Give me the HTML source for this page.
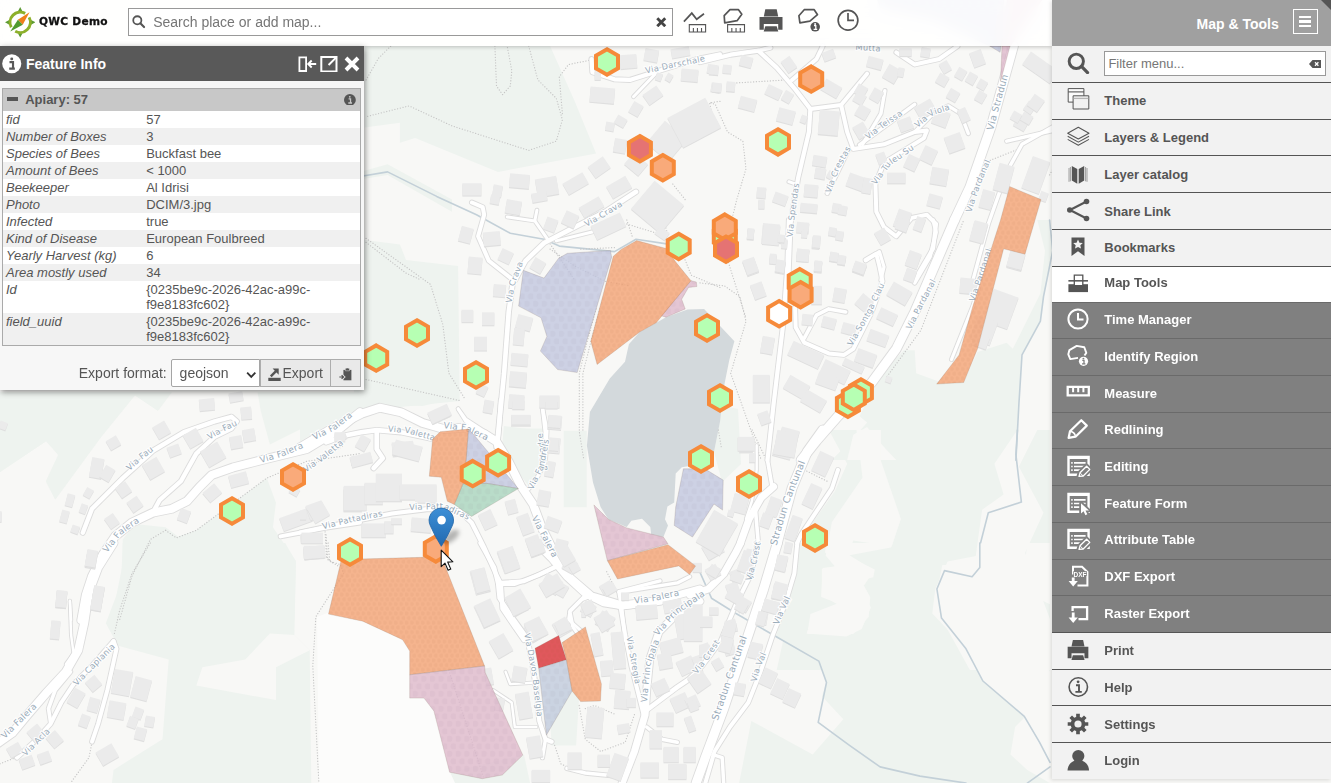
<!DOCTYPE html>
<html lang="en">
<head>
<meta charset="utf-8">
<title>QWC Demo</title>
<style>
*{box-sizing:border-box;margin:0;padding:0}
html,body{width:1331px;height:783px;overflow:hidden;background:#f8f8f6;font-family:"Liberation Sans",sans-serif;color:#555}
#map{position:absolute;left:0;top:0;width:1331px;height:783px;display:block}
/* top bar */
#topbar{position:absolute;left:0;top:0;width:1052px;height:45.5px;background:rgba(255,255,255,.88);-webkit-backdrop-filter:blur(7px);backdrop-filter:blur(7px);box-shadow:0 1px 4px rgba(0,0,0,.22)}
#logo{position:absolute;left:4.9px;top:7px;width:30.4px;height:30.6px}
#title{position:absolute;left:39px;top:15.3px;font-family:"DejaVu Sans","Liberation Sans",sans-serif;font-weight:bold;font-size:10.6px;color:#111;letter-spacing:.3px;-webkit-text-stroke:.3px #111;white-space:nowrap}
#search{position:absolute;left:128px;top:8.2px;width:544.8px;height:27.4px;border:1px solid #999;background:#fff}
#search .ph{position:absolute;left:24.2px;top:4.8px;font-size:14px;color:#767676;white-space:nowrap}
#search svg.mag{position:absolute;left:3.4px;top:6.2px}
#search svg.clr{position:absolute;right:5.2px;top:7.8px}
.tb{position:absolute;top:8px;width:24px;height:24px;overflow:visible}
/* sidebar */
#side{position:absolute;left:1052px;top:0;width:279px;height:779px;background:#f2f2f2;box-shadow:-1px 1px 4px rgba(0,0,0,.13)}
#side .hd{position:absolute;left:0;top:0;width:279px;height:45.7px;background:#a0a0a0}
#side .hd .t{position:absolute;right:52.3px;top:15.9px;font-weight:bold;font-size:14px;color:#fff;white-space:nowrap}
#side .hd .mb{position:absolute;left:241px;top:9.2px;width:25px;height:24.6px;border:1.4px solid #fff}
#side .hd .mb i{position:absolute;left:5.4px;width:11.8px;height:2.1px;background:#fff}
#side .hd .tri{position:absolute;right:0;top:0;width:0;height:0;border-top:10.3px solid #555;border-left:10.3px solid transparent}
#side .flt{position:absolute;left:0;top:45.7px;width:279px;height:36.7px;background:#f2f2f2}
#side .flt .in{position:absolute;left:52px;top:5.5px;width:221.7px;height:25.2px;border:1px solid #999;background:#fff}
#side .flt .in span{position:absolute;left:3.4px;top:4.2px;font-size:13px;color:#767676;white-space:nowrap}
.mi{position:absolute;left:0;width:279px;height:36.72px;border-top:1.2px solid #555;background:#f2f2f2;color:#555;font-weight:bold;font-size:13px}
.mi span{position:absolute;left:52.3px;top:10.6px;white-space:nowrap}
.mi svg{position:absolute;left:14px;top:5.5px;width:24px;height:24px;overflow:visible}
.mi.act{background:#fff}
.mi.sub{background:#808080;color:#fff;border-top-color:#6a6a6a}
/* feature info */
#fi{position:absolute;left:0;top:46px;width:364px;height:344px;background:#f7f7f7;box-shadow:1px 2px 6px rgba(0,0,0,.45)}
#fi .tt{position:absolute;left:0;top:0;width:364px;height:34.9px;background:#595959;color:#fff;font-weight:bold;font-size:14px}
#fi .tt span{position:absolute;left:26px;top:9.5px;white-space:nowrap}
#fi .box{position:absolute;left:2.2px;top:42px;width:358.6px;height:258.4px;border:1px solid #aaa;background:#fff}
#fi .rh{position:absolute;left:0;top:0;width:356.6px;height:22px;background:#c8c8c8;color:#555;font-weight:bold;font-size:13px}
#fi .rh span{position:absolute;left:22px;top:3.4px;white-space:nowrap}
table{position:absolute;left:0;top:22px;width:356.6px;border-collapse:collapse;font-size:13px;color:#555;line-height:15.1px}
td{padding:1.25px 2.5px .65px 2.5px;vertical-align:top}
td:first-child{width:139.5px;font-style:italic;padding-left:2.8px}
td:last-child{padding-left:3.5px}
tr:nth-child(even){background:#f0f0f0}
#fi .ex{position:absolute;left:0;top:313px;width:364px;height:28px;font-size:14px;color:#555}
#fi .ex .l{position:absolute;right:197.3px;top:5.5px;white-space:nowrap}
#fi .ex .sel{position:absolute;left:170.8px;top:0;width:89.7px;height:28px;border:1px solid #a5a5a5;background:#fff;border-radius:2px 0 0 2px}
#fi .ex .sel span{position:absolute;left:7.8px;top:5px}
#fi .ex .b1{position:absolute;left:260px;top:0;width:70.5px;height:28px;border:1px solid #adadad;background:#e9e9e9}
#fi .ex .b1 span{position:absolute;left:21.5px;top:5px}
#fi .ex .b2{position:absolute;left:330.5px;top:0;width:30px;height:28px;border:1px solid #adadad;border-left:none;background:#e9e9e9}
</style>
</head>
<body>
<svg id="map" viewBox="0 0 1331 783" width="1331" height="783">
<rect width="1331" height="783" fill="#f8f8f6"/>
<defs>
<pattern id="dots" width="5.4" height="9.4" patternUnits="userSpaceOnUse"><circle cx="1.35" cy="2.350" r="2.050" fill="#8a4a28" fill-opacity=".05"/><circle cx="4.050" cy="7.050" r="2.050" fill="#8a4a28" fill-opacity=".05"/></pattern>
<pattern id="dots2" width="8.6" height="15" patternUnits="userSpaceOnUse"><circle cx="2.15" cy="3.750" r="3.100" fill="#6a4a68" fill-opacity=".04"/><circle cx="6.450" cy="11.250" r="3.100" fill="#6a4a68" fill-opacity=".04"/></pattern>
<linearGradient id="pin" x1="0" y1="0" x2="0" y2="1"><stop offset="0" stop-color="#3d8fd6"/><stop offset="1" stop-color="#2069b0"/></linearGradient>
<filter id="blur1" x="-50%" y="-50%" width="200%" height="200%"><feGaussianBlur stdDeviation="2.200"/></filter>
</defs>
<polygon points="364.6,46.1 550.1,46.1 574.7,101.3 596.1,153.5 498.0,171.9 415.2,138.1 399.9,142.7 399.9,122.8 364.6,127.4" fill="#eef3ef"/>
<polygon points="360.0,171.9 387.6,164.2 452.0,199.5 452.0,211.7 387.6,174.9 360.0,179.5" fill="#eef3ef"/>
<polygon points="353.9,238.4 399.9,244.5 406.0,259.9 458.1,266.0 459.7,400.9 353.9,411.7" fill="#eef3ef"/>
<polygon points="504.1,428.5 544.0,428.5 544.0,460.1 504.1,460.1" fill="#eef3ef"/>
<polygon points="564.8,431.6 580.8,431.6 580.8,460.1 564.8,460.1" fill="#eef3ef"/>
<polygon points="884.0,370.3 903.9,350.3 914.7,350.3 916.2,373.3 945.3,384.1 963.7,382.5 977.5,351.9 1006.7,342.7 1012.8,348.8 1040.4,293.6 1045.0,250.7 1037.3,220.0 1049.6,220.0 1052.7,250.7 1043.5,296.7 1040.4,321.2 1022.0,354.9 1018.9,404.0 1015.9,460.1 831.9,460.1 856.4,434.7 867.1,422.4 859.5,416.3 871.7,391.7" fill="#eef3ef"/>
<polygon points="720.0,405.0 738.0,409.0 741.0,464.0 722.0,482.0 714.0,452.0 720.0,421.0" fill="#eef3ef"/>
<polygon points="0.0,392.3 30.7,392.3 42.9,401.5 30.7,407.6 49.1,441.3 58.3,455.1 46.0,481.2 55.2,499.6 101.2,436.7 134.9,395.3 157.9,410.7 171.7,392.3 0.0,392.3 0.0,472.0 46.0,441.3" fill="#eef3ef"/>
<polygon points="0.0,392.3 171.7,392.3 157.9,410.7 134.9,395.3 101.2,436.7 55.2,499.6 46.0,481.2 58.3,455.1 46.0,441.3 0.0,472.0" fill="#eef3ef"/>
<polygon points="257.6,392.3 360.0,392.3 360.0,407.6 337.3,410.7 269.9,444.4 260.7,410.7" fill="#eef3ef"/>
<polygon points="122.7,539.5 134.9,524.1 165.6,527.2 177.9,536.4 196.3,530.3 266.8,478.1 276.0,502.7 272.9,527.2 295.9,560.9 294.4,620.1 119.6,620.1 116.5,594.7 122.7,564.0" fill="#eef3ef"/>
<polygon points="503.9,426.1 542.3,430.7 545.3,464.4 528.5,485.9 514.7,467.5 502.4,442.9" fill="#eef3ef"/>
<polygon points="563.7,430.7 586.7,430.7 586.7,507.3 563.7,507.3" fill="#eef3ef"/>
<polygon points="300.0,400.0 447.2,400.0 422.7,406.1 376.7,404.6 330.7,423.0 300.0,441.4" fill="#eef3ef"/>
<polygon points="122.7,543.0 285.2,543.0 295.9,561.4 294.4,635.0 309.7,650.3 311.3,783.1 111.9,783.1 113.5,769.9 162.5,739.3 168.7,659.5 118.1,645.7 105.8,623.3 121.1,582.9" fill="#eef3ef"/>
<polygon points="548.5,690.2 573.1,687.1 579.2,696.3 576.1,745.4 551.6,745.4" fill="#eef3ef"/>
<polygon points="447.3,773.0 524.0,754.6 530.1,783.1 447.3,783.1" fill="#eef3ef"/>
<polygon points="798.9,543.0 1050.0,543.0 1050.0,783.1 739.1,783.1 751.3,720.9 812.7,754.6 843.3,719.3 821.9,696.3 826.5,682.5 818.8,661.1 775.9,636.5 791.2,589.0" fill="#eef3ef"/>
<polygon points="828.8,430.0 1049.6,430.0 1049.6,670.1 776.7,670.1 801.2,558.8 804.3,534.3 834.9,491.3 847.2,463.7" fill="#eef3ef"/>
<polygon points="853.3,434.7 867.1,427.0 884.0,446.9 896.3,460.1 847.2,460.1" fill="#f8f8f6"/>
<polygon points="269.9,633.5 245.3,659.5 202.4,667.2 196.3,685.6 276.0,700.0 276.0,667.2 309.7,650.3 294.4,635.0" fill="#f8f8f6"/>
<polygon points="826.5,543.0 892.4,543.0 890.9,547.6 849.5,555.3 874.0,570.6 861.7,589.0 870.9,607.4 861.7,628.9 846.4,636.5 806.5,633.5 812.7,616.6 837.2,604.3 821.9,595.1 821.9,569.1 837.2,566.0 824.9,552.2" fill="#f8f8f6"/>
<polygon points="947.6,561.4 979.8,555.3 979.8,543.0 996.7,543.0 984.4,579.8 1008.9,619.7 1030.4,635.0 1050.0,671.8 1050.0,757.7 1024.3,716.3 982.9,681.0 966.0,648.8 932.3,613.5 935.3,589.0" fill="#f8f8f6"/>
<polygon points="1027.3,543.0 1050.0,543.0 1050.0,604.3 1030.4,595.1 1025.8,555.3" fill="#f8f8f6"/>
<polygon points="1027.3,714.7 1050.0,757.7 1050.0,783.1 1027.3,769.9 1010.5,754.6 1015.1,727.0" fill="#f8f8f6"/>
<polygon points="856.4,430.0 880.9,430.0 880.9,460.7 900.9,518.9 891.7,546.5 853.3,540.4 847.2,555.7 874.8,569.5 873.3,577.2 861.0,580.3 870.2,597.1 868.7,617.1 853.3,633.9 807.3,633.9 810.4,614.0 838.0,603.3 821.1,597.1 822.7,568.0 834.9,566.5 825.7,555.7 831.9,522.0 862.5,477.5 857.9,439.2" fill="#f8f8f6"/>
<polygon points="1017.4,430.0 1037.3,430.0 1018.9,466.8 1043.5,512.8 1025.1,552.7 1052.7,626.3 1052.7,670.1 969.9,670.1 942.3,620.1 933.1,610.9 942.3,564.9 974.5,564.9 982.1,509.7 1003.6,494.4 994.4,463.7" fill="#f8f8f6"/>
<polygon points="317.0,617.0 330.0,612.0 370.0,621.0 403.0,640.0 410.0,651.0 410.0,698.0 424.0,698.0 434.0,711.0 450.0,772.0 455.0,783.0 319.0,783.0" fill="#fcfcfb"/>
<polygon points="639.7,332.0 656.3,322.7 666.0,317.2 687.5,309.4 704.1,309.0 734.4,341.2 729.3,360.0 723.2,390.6 720.1,421.3 714.0,451.9 691.0,465.7 681.8,467.2 675.7,473.4 674.2,502.5 667.4,506.4 665.0,519.3 668.0,525.4 663.4,537.1 651.2,534.6 650.3,527.0 642.0,518.7 631.3,520.8 626.7,527.0 608.3,519.3 600.6,507.0 593.0,482.5 586.9,445.8 589.9,412.1 609.8,378.4 625.0,361.7 628.9,344.2" fill="#d3d9dc"/>
<polyline points="360.0,176.5 387.6,171.9 436.7,196.4 476.5,214.8 510.3,233.2 544.0,239.3 559.3,246.1 614.5,251.6 636.0,239.3 666.7,243.9" fill="none" stroke="#c3d0d8" stroke-width="1.6" stroke-linecap="round" stroke-linejoin="round"/>
<polyline points="1049.6,220.0 1052.7,250.7 1043.5,296.7 1040.4,321.2 1022.0,354.9 1018.9,404.0 1015.9,460.1" fill="none" stroke="#c3d0d8" stroke-width="1.6" stroke-linecap="round" stroke-linejoin="round"/>
<polyline points="699.2,570.6 711.5,598.2 736.0,613.5 775.9,636.5 818.8,661.1 826.5,682.5 818.2,722.4 849.5,745.4 880.1,766.9 920.0,776.1 966.0,783.1" fill="none" stroke="#c3d0d8" stroke-width="1.6" stroke-linecap="round" stroke-linejoin="round"/>
<polyline points="979.8,543.0 979.8,567.5 972.1,576.7 944.5,570.6 936.9,589.0 941.5,618.1 966.0,648.8 982.9,681.0 1024.3,716.3 1039.6,742.3 1050.0,762.3" fill="none" stroke="#c3d0d8" stroke-width="1.6" stroke-linecap="round" stroke-linejoin="round"/>
<polyline points="1050.0,766.9 1027.3,783.1" fill="none" stroke="#c3d0d8" stroke-width="1.6" stroke-linecap="round" stroke-linejoin="round"/>
<polyline points="1017.4,430.0 1015.9,454.5 1021.4,502.1 988.3,512.8 980.6,542.8" fill="none" stroke="#c3d0d8" stroke-width="1.6" stroke-linecap="round" stroke-linejoin="round"/>
<polyline points="366.1,79.9 378.4,58.4 390.7,46.1" fill="none" stroke="#c6c6c6" stroke-width="1.25" stroke-linecap="round" stroke-linejoin="round" stroke-dasharray="0.100 2.700"/>
<polyline points="494.9,46.1 496.5,86.0 502.6,94.6 510.3,86.0 511.8,70.7 507.2,46.1" fill="none" stroke="#c6c6c6" stroke-width="1.25" stroke-linecap="round" stroke-linejoin="round" stroke-dasharray="0.100 2.700"/>
<polyline points="528.7,46.1 537.9,79.9 556.3,98.3 562.4,119.7 556.3,141.2 528.7,150.4 452.0,125.9 409.1,105.9 366.1,116.7" fill="none" stroke="#c6c6c6" stroke-width="1.25" stroke-linecap="round" stroke-linejoin="round" stroke-dasharray="0.100 2.700"/>
<polyline points="562.4,113.6 559.3,76.8 568.5,64.5 591.5,59.9" fill="none" stroke="#c6c6c6" stroke-width="1.25" stroke-linecap="round" stroke-linejoin="round" stroke-dasharray="0.100 2.700"/>
<polyline points="366.1,242.4 406.0,273.1 421.3,280.1" fill="none" stroke="#c6c6c6" stroke-width="1.25" stroke-linecap="round" stroke-linejoin="round" stroke-dasharray="0.100 2.700"/>
<polyline points="550.1,243.9 574.7,280.1" fill="none" stroke="#c6c6c6" stroke-width="1.25" stroke-linecap="round" stroke-linejoin="round" stroke-dasharray="0.100 2.700"/>
<polyline points="626.8,224.0 666.7,236.3" fill="none" stroke="#c6c6c6" stroke-width="1.25" stroke-linecap="round" stroke-linejoin="round" stroke-dasharray="0.100 2.700"/>
<polyline points="685.1,199.5 672.8,184.1" fill="none" stroke="#c6c6c6" stroke-width="1.25" stroke-linecap="round" stroke-linejoin="round" stroke-dasharray="0.100 2.700"/>
<polyline points="720.0,101.3 709.6,102.9 712.7,116.7" fill="none" stroke="#c6c6c6" stroke-width="1.25" stroke-linecap="round" stroke-linejoin="round" stroke-dasharray="0.100 2.700"/>
<polyline points="736.8,82.9 785.9,79.9" fill="none" stroke="#c6c6c6" stroke-width="1.25" stroke-linecap="round" stroke-linejoin="round" stroke-dasharray="0.100 2.700"/>
<polyline points="710.7,102.9 715.3,104.4 727.6,132.0 742.9,141.2 746.0,168.8 736.8,199.5 730.7,224.0" fill="none" stroke="#c6c6c6" stroke-width="1.25" stroke-linecap="round" stroke-linejoin="round" stroke-dasharray="0.100 2.700"/>
<polyline points="1018.9,148.9 988.3,161.1" fill="none" stroke="#c6c6c6" stroke-width="1.25" stroke-linecap="round" stroke-linejoin="round" stroke-dasharray="0.100 2.700"/>
<polyline points="1049.6,174.9 1060.0,156.5" fill="none" stroke="#c6c6c6" stroke-width="1.25" stroke-linecap="round" stroke-linejoin="round" stroke-dasharray="0.100 2.700"/>
<polyline points="366.1,238.4 430.5,284.4 442.8,324.3 448.9,373.3 464.3,397.9" fill="none" stroke="#c6c6c6" stroke-width="1.25" stroke-linecap="round" stroke-linejoin="round" stroke-dasharray="0.100 2.700"/>
<polyline points="366.1,379.5 461.2,400.9" fill="none" stroke="#c6c6c6" stroke-width="1.25" stroke-linecap="round" stroke-linejoin="round" stroke-dasharray="0.100 2.700"/>
<polyline points="580.8,249.1 614.5,247.6" fill="none" stroke="#c6c6c6" stroke-width="1.25" stroke-linecap="round" stroke-linejoin="round" stroke-dasharray="0.100 2.700"/>
<polyline points="685.1,259.9 691.2,275.2 720.0,287.5" fill="none" stroke="#c6c6c6" stroke-width="1.25" stroke-linecap="round" stroke-linejoin="round" stroke-dasharray="0.100 2.700"/>
<polyline points="596.1,308.9 586.9,342.7 579.3,373.3 579.3,431.6 583.9,460.1" fill="none" stroke="#c6c6c6" stroke-width="1.25" stroke-linecap="round" stroke-linejoin="round" stroke-dasharray="0.100 2.700"/>
<polyline points="599.8,308.9 590.6,342.7 582.9,373.3 582.9,431.6" fill="none" stroke="#c6c6c6" stroke-width="1.25" stroke-linecap="round" stroke-linejoin="round" stroke-dasharray="0.100 2.700"/>
<polyline points="550.1,249.1 574.7,266.0 605.3,281.3 629.9,285.9" fill="none" stroke="#c6c6c6" stroke-width="1.25" stroke-linecap="round" stroke-linejoin="round" stroke-dasharray="0.100 2.700"/>
<polyline points="666.7,230.7 663.6,220.0" fill="none" stroke="#c6c6c6" stroke-width="1.25" stroke-linecap="round" stroke-linejoin="round" stroke-dasharray="0.100 2.700"/>
<polyline points="626.8,220.0 632.9,238.4" fill="none" stroke="#c6c6c6" stroke-width="1.25" stroke-linecap="round" stroke-linejoin="round" stroke-dasharray="0.100 2.700"/>
<polyline points="700.0,282.9 724.5,285.9 739.9,296.7 746.0,321.2 730.7,373.3 746.0,416.3 761.3,460.1" fill="none" stroke="#c6c6c6" stroke-width="1.25" stroke-linecap="round" stroke-linejoin="round" stroke-dasharray="0.100 2.700"/>
<polyline points="727.6,259.9 746.0,318.1" fill="none" stroke="#c6c6c6" stroke-width="1.25" stroke-linecap="round" stroke-linejoin="round" stroke-dasharray="0.100 2.700"/>
<polyline points="887.1,376.4 920.8,330.4 963.7,220.0" fill="none" stroke="#c6c6c6" stroke-width="1.25" stroke-linecap="round" stroke-linejoin="round" stroke-dasharray="0.100 2.700"/>
<polyline points="165.6,530.3 176.3,537.9 196.3,530.3 266.8,478.1 306.7,461.3 360.0,453.6" fill="none" stroke="#c6c6c6" stroke-width="1.25" stroke-linecap="round" stroke-linejoin="round" stroke-dasharray="0.100 2.700"/>
<polyline points="165.6,530.3 150.3,539.5 131.9,576.3 119.6,620.1" fill="none" stroke="#c6c6c6" stroke-width="1.25" stroke-linecap="round" stroke-linejoin="round" stroke-dasharray="0.100 2.700"/>
<polyline points="325.1,531.8 326.6,557.9 334.3,564.0" fill="none" stroke="#c6c6c6" stroke-width="1.25" stroke-linecap="round" stroke-linejoin="round" stroke-dasharray="0.100 2.700"/>
<polyline points="326.1,534.9 327.6,559.5 339.9,567.1" fill="none" stroke="#c6c6c6" stroke-width="1.25" stroke-linecap="round" stroke-linejoin="round" stroke-dasharray="0.100 2.700"/>
<polyline points="606.7,571.7 618.9,596.3" fill="none" stroke="#c6c6c6" stroke-width="1.25" stroke-linecap="round" stroke-linejoin="round" stroke-dasharray="0.100 2.700"/>
<polyline points="300.0,473.6 318.4,461.3 342.9,446.0" fill="none" stroke="#c6c6c6" stroke-width="1.25" stroke-linecap="round" stroke-linejoin="round" stroke-dasharray="0.100 2.700"/>
<polyline points="150.3,543.0 131.9,573.7 119.6,610.5 114.1,635.0" fill="none" stroke="#c6c6c6" stroke-width="1.25" stroke-linecap="round" stroke-linejoin="round" stroke-dasharray="0.100 2.700"/>
<polyline points="92.0,742.3 88.9,757.7 70.5,783.1" fill="none" stroke="#c6c6c6" stroke-width="1.25" stroke-linecap="round" stroke-linejoin="round" stroke-dasharray="0.100 2.700"/>
<polyline points="328.1,543.0 329.7,561.4 340.4,564.5 343.5,573.7 315.9,616.6 312.8,665.7 318.9,783.1" fill="none" stroke="#c6c6c6" stroke-width="1.25" stroke-linecap="round" stroke-linejoin="round" stroke-dasharray="0.100 2.700"/>
<polyline points="0.0,763.8 15.3,757.7" fill="none" stroke="#c6c6c6" stroke-width="1.25" stroke-linecap="round" stroke-linejoin="round" stroke-dasharray="0.100 2.700"/>
<polyline points="579.2,705.5 585.3,739.3 600.7,751.5 625.2,742.3 634.4,714.7" fill="none" stroke="#c6c6c6" stroke-width="1.25" stroke-linecap="round" stroke-linejoin="round" stroke-dasharray="0.100 2.700"/>
<polyline points="585.3,708.6 594.5,705.5 616.0,714.7" fill="none" stroke="#c6c6c6" stroke-width="1.25" stroke-linecap="round" stroke-linejoin="round" stroke-dasharray="0.100 2.700"/>
<polyline points="554.7,745.4 560.8,763.8 573.1,769.9" fill="none" stroke="#c6c6c6" stroke-width="1.25" stroke-linecap="round" stroke-linejoin="round" stroke-dasharray="0.100 2.700"/>
<polyline points="804.3,469.9 828.8,482.1" fill="none" stroke="#c6c6c6" stroke-width="1.25" stroke-linecap="round" stroke-linejoin="round" stroke-dasharray="0.100 2.700"/>
<polyline points="752.1,430.0 765.9,459.1" fill="none" stroke="#c6c6c6" stroke-width="1.25" stroke-linecap="round" stroke-linejoin="round" stroke-dasharray="0.100 2.700"/>
<polyline points="718.4,430.0 721.5,448.4" fill="none" stroke="#c6c6c6" stroke-width="1.25" stroke-linecap="round" stroke-linejoin="round" stroke-dasharray="0.100 2.700"/>
<polyline points="448.9,670.3 484.1,779.1" fill="none" stroke="#c6c6c6" stroke-width="1.25" stroke-linecap="round" stroke-linejoin="round" stroke-dasharray="0.100 2.700"/>
<polyline points="591.5,59.0 592.4,72.2 614.5,79.3 629.9,79.9 654.4,72.2 697.3,59.0 720.0,54.4" fill="none" stroke="#dcdcdc" stroke-width="6.0" stroke-linecap="round" stroke-linejoin="round"/>
<polyline points="633.5,96.7 655.0,74.3" fill="none" stroke="#dcdcdc" stroke-width="4.8" stroke-linecap="round" stroke-linejoin="round"/>
<polyline points="636.0,191.8 605.3,211.7 574.7,227.1 544.0,243.0 525.6,260.8 514.9,280.1" fill="none" stroke="#dcdcdc" stroke-width="6.3999999999999995" stroke-linecap="round" stroke-linejoin="round"/>
<polyline points="471.9,202.5 482.7,207.1 484.2,214.8 478.1,236.3 488.8,260.8 513.3,280.1" fill="none" stroke="#dcdcdc" stroke-width="5.8" stroke-linecap="round" stroke-linejoin="round"/>
<polyline points="507.2,216.9 534.8,220.9 547.7,239.3" fill="none" stroke="#dcdcdc" stroke-width="4.8" stroke-linecap="round" stroke-linejoin="round"/>
<polyline points="536.9,210.2 534.8,220.9" fill="none" stroke="#dcdcdc" stroke-width="4.8" stroke-linecap="round" stroke-linejoin="round"/>
<polyline points="556.3,240.9 593.1,231.7" fill="none" stroke="#dcdcdc" stroke-width="4.8" stroke-linecap="round" stroke-linejoin="round"/>
<polyline points="700.0,62.1 730.7,54.7 758.3,50.7 776.7,67.6 795.1,89.1 810.4,109.0" fill="none" stroke="#dcdcdc" stroke-width="6.0" stroke-linecap="round" stroke-linejoin="round"/>
<polyline points="810.4,109.0 808.9,132.0 798.1,178.0 790.5,224.0 788.3,280.1" fill="none" stroke="#dcdcdc" stroke-width="6.0" stroke-linecap="round" stroke-linejoin="round"/>
<polyline points="810.4,109.0 841.1,105.0 867.1,73.7" fill="none" stroke="#dcdcdc" stroke-width="5.8" stroke-linecap="round" stroke-linejoin="round"/>
<polyline points="841.1,105.0 847.2,132.0 853.3,148.9 884.0,144.3 914.7,132.0 926.9,130.5 923.9,138.1 884.0,162.7 875.4,184.1 876.3,211.7 884.0,227.1 896.3,236.3 911.6,217.9 926.9,214.8 936.1,224.0 933.1,248.5 914.7,280.1" fill="none" stroke="#dcdcdc" stroke-width="5.8" stroke-linecap="round" stroke-linejoin="round"/>
<polyline points="847.8,151.0 827.3,193.3" fill="none" stroke="#dcdcdc" stroke-width="5.4" stroke-linecap="round" stroke-linejoin="round"/>
<polyline points="884.9,90.6 880.9,113.6 862.5,144.3" fill="none" stroke="#dcdcdc" stroke-width="5.2" stroke-linecap="round" stroke-linejoin="round"/>
<polyline points="914.7,104.4 859.5,144.9" fill="none" stroke="#dcdcdc" stroke-width="5.2" stroke-linecap="round" stroke-linejoin="round"/>
<polyline points="914.7,132.0 933.1,113.6 948.4,105.9 960.7,113.6 968.3,133.5" fill="none" stroke="#dcdcdc" stroke-width="5.2" stroke-linecap="round" stroke-linejoin="round"/>
<polyline points="822.7,46.1 816.5,59.0 792.0,79.9" fill="none" stroke="#dcdcdc" stroke-width="5.8" stroke-linecap="round" stroke-linejoin="round"/>
<polyline points="758.3,50.7 770.5,47.7" fill="none" stroke="#dcdcdc" stroke-width="5.8" stroke-linecap="round" stroke-linejoin="round"/>
<polyline points="896.3,52.3 914.7,64.5 939.2,59.0 957.6,46.1" fill="none" stroke="#dcdcdc" stroke-width="5.8" stroke-linecap="round" stroke-linejoin="round"/>
<polyline points="1013.4,46.1 991.3,125.9 969.9,187.2 954.5,220.0" fill="none" stroke="#dcdcdc" stroke-width="10.8" stroke-linecap="round" stroke-linejoin="round"/>
<polyline points="1060.0,122.8 1022.0,144.3 1006.7,171.9 988.3,224.0 972.9,280.1" fill="none" stroke="#dcdcdc" stroke-width="5.2" stroke-linecap="round" stroke-linejoin="round"/>
<polyline points="1006.7,141.2 1060.0,128.9" fill="none" stroke="#dcdcdc" stroke-width="5.2" stroke-linecap="round" stroke-linejoin="round"/>
<polyline points="788.9,181.7 795.7,184.1" fill="none" stroke="#dcdcdc" stroke-width="4.8" stroke-linecap="round" stroke-linejoin="round"/>
<polyline points="865.6,260.8 879.4,251.6 884.0,266.9 880.9,280.1" fill="none" stroke="#dcdcdc" stroke-width="5.0" stroke-linecap="round" stroke-linejoin="round"/>
<polyline points="513.3,278.3 508.7,312.0 504.1,373.3 498.0,434.7 496.5,446.9" fill="none" stroke="#dcdcdc" stroke-width="6.3999999999999995" stroke-linecap="round" stroke-linejoin="round"/>
<polyline points="458.1,408.6 465.8,419.3 494.9,438.3" fill="none" stroke="#dcdcdc" stroke-width="4.8" stroke-linecap="round" stroke-linejoin="round"/>
<polyline points="542.5,407.7 545.5,434.7 544.0,460.1" fill="none" stroke="#dcdcdc" stroke-width="5.2" stroke-linecap="round" stroke-linejoin="round"/>
<polyline points="788.9,220.0 787.4,266.0 782.8,327.3 773.6,404.0 767.5,460.1" fill="none" stroke="#dcdcdc" stroke-width="6.0" stroke-linecap="round" stroke-linejoin="round"/>
<polyline points="795.1,307.4 795.7,327.3 804.3,342.7 828.8,353.4 844.1,354.9 853.3,348.8 871.7,312.0 882.5,281.3 879.4,266.0 876.3,253.7 865.6,259.9" fill="none" stroke="#dcdcdc" stroke-width="5.8" stroke-linecap="round" stroke-linejoin="round"/>
<polyline points="804.3,338.1 816.5,315.1 828.8,308.9 845.7,312.0" fill="none" stroke="#dcdcdc" stroke-width="5.4" stroke-linecap="round" stroke-linejoin="round"/>
<polyline points="933.1,220.0 936.1,232.3 930.0,256.8 914.7,282.9" fill="none" stroke="#dcdcdc" stroke-width="5.4" stroke-linecap="round" stroke-linejoin="round"/>
<polyline points="954.5,220.0 928.5,280.1 914.7,312.0 896.3,348.8 871.7,382.5 838.0,416.3 816.5,440.8 801.2,460.1" fill="none" stroke="#dcdcdc" stroke-width="10.8" stroke-linecap="round" stroke-linejoin="round"/>
<polyline points="989.8,250.7 972.9,305.9 951.5,359.5" fill="none" stroke="#dcdcdc" stroke-width="5.0" stroke-linecap="round" stroke-linejoin="round"/>
<polyline points="81.3,620.1 85.9,594.7 92.0,576.3 102.7,554.8 115.0,536.4 131.9,522.6 153.3,512.5 171.7,508.8 187.1,501.1 199.3,487.3 211.6,475.1 233.1,467.4 260.7,460.3 306.7,449.0 337.3,430.6 360.0,412.2" fill="none" stroke="#dcdcdc" stroke-width="9.8" stroke-linecap="round" stroke-linejoin="round"/>
<polyline points="82.8,532.7 92.0,508.8 122.7,478.1 153.3,450.5 184.0,432.1 214.7,421.4 231.5,416.8 236.7,421.4 231.5,428.5 214.7,436.7 196.3,453.6 180.9,481.2 159.5,500.2 154.9,508.8" fill="none" stroke="#dcdcdc" stroke-width="6.2" stroke-linecap="round" stroke-linejoin="round"/>
<polyline points="280.6,536.4 325.1,527.8 360.0,522.6" fill="none" stroke="#dcdcdc" stroke-width="5.8" stroke-linecap="round" stroke-linejoin="round"/>
<polyline points="69.9,600.8 71.1,620.1" fill="none" stroke="#dcdcdc" stroke-width="4.2" stroke-linecap="round" stroke-linejoin="round"/>
<polyline points="300.0,447.5 330.7,429.1 361.3,413.8 379.7,407.7 401.2,412.3 422.7,423.0 444.1,429.1 465.6,427.6 484.0,433.7 496.3,441.4 508.5,461.3 520.8,485.9 533.1,504.3 542.3,528.8 554.5,553.3 569.9,577.9 591.3,596.3 622.0,605.5 660.0,600.9" fill="none" stroke="#dcdcdc" stroke-width="9.8" stroke-linecap="round" stroke-linejoin="round"/>
<polyline points="326.1,442.3 346.0,435.3 361.3,432.2 376.7,430.1 401.2,432.2 434.9,439.3" fill="none" stroke="#dcdcdc" stroke-width="6.3999999999999995" stroke-linecap="round" stroke-linejoin="round"/>
<polyline points="376.7,430.7 376.7,449.1 382.8,458.3 373.6,468.1" fill="none" stroke="#dcdcdc" stroke-width="6.3999999999999995" stroke-linecap="round" stroke-linejoin="round"/>
<polyline points="300.0,532.5 346.0,522.7 392.0,513.5 428.8,508.9 459.5,511.0 471.7,522.7 484.0,547.2 496.3,574.8 500.9,584.0 502.4,608.5 514.7,626.9 523.9,640.1" fill="none" stroke="#dcdcdc" stroke-width="6.0" stroke-linecap="round" stroke-linejoin="round"/>
<polyline points="500.9,584.0 514.7,584.0 539.2,574.8 554.5,567.1" fill="none" stroke="#dcdcdc" stroke-width="5.8" stroke-linecap="round" stroke-linejoin="round"/>
<polyline points="500.9,400.0 499.3,424.5 497.8,441.4" fill="none" stroke="#dcdcdc" stroke-width="6.0" stroke-linecap="round" stroke-linejoin="round"/>
<polyline points="542.3,407.7 546.9,430.7 545.3,461.3 536.1,479.7 528.5,488.9" fill="none" stroke="#dcdcdc" stroke-width="5.2" stroke-linecap="round" stroke-linejoin="round"/>
<polyline points="457.9,409.2 465.6,421.5 496.3,439.9" fill="none" stroke="#dcdcdc" stroke-width="4.2" stroke-linecap="round" stroke-linejoin="round"/>
<polyline points="589.8,596.3 582.1,599.3 569.9,611.6 572.9,626.9 582.1,640.1" fill="none" stroke="#dcdcdc" stroke-width="5.2" stroke-linecap="round" stroke-linejoin="round"/>
<polyline points="618.9,591.7 660.0,580.9" fill="none" stroke="#dcdcdc" stroke-width="5.2" stroke-linecap="round" stroke-linejoin="round"/>
<polyline points="618.9,591.7 622.0,610.1 625.1,640.1" fill="none" stroke="#dcdcdc" stroke-width="5.2" stroke-linecap="round" stroke-linejoin="round"/>
<polyline points="113.5,543.0 98.1,567.5 88.9,592.1 84.3,622.7 78.2,650.3 65.9,671.8 46.0,693.3 27.6,714.7 12.3,733.1 -3.1,743.9" fill="none" stroke="#dcdcdc" stroke-width="9.8" stroke-linecap="round" stroke-linejoin="round"/>
<polyline points="69.9,601.3 71.1,635.0 73.6,653.4 65.9,664.1" fill="none" stroke="#dcdcdc" stroke-width="4.2" stroke-linecap="round" stroke-linejoin="round"/>
<polyline points="113.5,641.1 116.5,648.8 107.3,690.2 98.1,723.9 92.0,741.7" fill="none" stroke="#dcdcdc" stroke-width="5.8" stroke-linecap="round" stroke-linejoin="round"/>
<polyline points="113.5,641.1 92.0,665.7 73.6,684.1 61.3,702.5 50.6,723.9 36.8,739.3 16.9,757.7" fill="none" stroke="#dcdcdc" stroke-width="5.8" stroke-linecap="round" stroke-linejoin="round"/>
<polyline points="70.5,671.8 55.2,690.2 48.5,708.6 50.6,722.4" fill="none" stroke="#dcdcdc" stroke-width="5.4" stroke-linecap="round" stroke-linejoin="round"/>
<polyline points="536.3,543.0 551.6,558.3 566.9,576.7 585.3,593.6 603.7,602.8 622.1,605.9 646.7,602.8 677.3,595.1 700.0,589.0" fill="none" stroke="#dcdcdc" stroke-width="8.8" stroke-linecap="round" stroke-linejoin="round"/>
<polyline points="480.4,543.0 494.2,567.5 497.9,582.9 499.5,598.2 511.7,616.6 527.1,638.1 531.7,659.5 536.3,690.2 539.3,720.9 545.5,739.3 551.6,741.7" fill="none" stroke="#dcdcdc" stroke-width="6.0" stroke-linecap="round" stroke-linejoin="round"/>
<polyline points="545.5,739.3 542.4,757.7" fill="none" stroke="#dcdcdc" stroke-width="5.2" stroke-linecap="round" stroke-linejoin="round"/>
<polyline points="497.9,582.9 524.0,581.3 554.7,567.5 566.9,561.4" fill="none" stroke="#dcdcdc" stroke-width="5.8" stroke-linecap="round" stroke-linejoin="round"/>
<polyline points="620.6,607.4 625.2,635.0 631.3,665.7 639.0,696.3 643.6,714.7" fill="none" stroke="#dcdcdc" stroke-width="5.8" stroke-linecap="round" stroke-linejoin="round"/>
<polyline points="700.0,601.3 677.3,613.5 658.9,631.9 649.7,659.5 646.7,690.2 645.1,714.7 634.4,751.5 622.1,783.1" fill="none" stroke="#dcdcdc" stroke-width="8.8" stroke-linecap="round" stroke-linejoin="round"/>
<polyline points="700.0,671.8 677.3,687.1 646.7,710.1" fill="none" stroke="#dcdcdc" stroke-width="6.3" stroke-linecap="round" stroke-linejoin="round"/>
<polyline points="585.3,595.1 570.0,610.5 568.5,619.7 582.3,631.9" fill="none" stroke="#dcdcdc" stroke-width="4.8" stroke-linecap="round" stroke-linejoin="round"/>
<polyline points="646.7,727.0 662.0,739.3 677.3,742.3" fill="none" stroke="#dcdcdc" stroke-width="5.3" stroke-linecap="round" stroke-linejoin="round"/>
<polyline points="566.9,768.4 585.3,773.0 616.0,776.1 628.3,771.5" fill="none" stroke="#dcdcdc" stroke-width="5.3" stroke-linecap="round" stroke-linejoin="round"/>
<polyline points="620.6,592.1 677.3,582.9 689.6,576.7" fill="none" stroke="#dcdcdc" stroke-width="5.2" stroke-linecap="round" stroke-linejoin="round"/>
<polyline points="505.6,671.8 510.2,684.1 536.3,682.5" fill="none" stroke="#dcdcdc" stroke-width="4.2" stroke-linecap="round" stroke-linejoin="round"/>
<polyline points="493.3,690.2 511.7,702.5 514.8,727.0 536.3,727.0" fill="none" stroke="#dcdcdc" stroke-width="4.2" stroke-linecap="round" stroke-linejoin="round"/>
<polyline points="777.4,543.0 763.6,589.0 745.2,644.2 723.7,708.6 705.3,757.7 696.1,783.1" fill="none" stroke="#dcdcdc" stroke-width="10.8" stroke-linecap="round" stroke-linejoin="round"/>
<polyline points="797.3,543.0 794.3,573.7 785.1,604.3 772.8,635.0 760.5,671.8 748.3,702.5 729.9,727.0 714.5,751.5 705.3,783.1" fill="none" stroke="#dcdcdc" stroke-width="5.8" stroke-linecap="round" stroke-linejoin="round"/>
<polyline points="757.5,543.0 751.3,573.7 736.0,604.3 720.7,641.1 702.3,665.7 690.0,677.9" fill="none" stroke="#dcdcdc" stroke-width="5.8" stroke-linecap="round" stroke-linejoin="round"/>
<polyline points="690.0,595.1 708.4,589.0 723.7,573.7 736.0,552.2 740.6,543.0" fill="none" stroke="#dcdcdc" stroke-width="8.8" stroke-linecap="round" stroke-linejoin="round"/>
<polyline points="713.0,754.6 722.2,757.7 723.7,783.1" fill="none" stroke="#dcdcdc" stroke-width="5.2" stroke-linecap="round" stroke-linejoin="round"/>
<polyline points="822.7,430.0 807.3,451.5 792.0,488.3 777.3,542.8" fill="none" stroke="#dcdcdc" stroke-width="10.8" stroke-linecap="round" stroke-linejoin="round"/>
<polyline points="740.5,542.8 749.1,518.9 761.3,497.5 773.6,486.7" fill="none" stroke="#dcdcdc" stroke-width="8.8" stroke-linecap="round" stroke-linejoin="round"/>
<polyline points="755.2,506.7 758.3,542.8" fill="none" stroke="#dcdcdc" stroke-width="5.4" stroke-linecap="round" stroke-linejoin="round"/>
<polyline points="838.0,469.9 831.9,488.3 813.5,515.9 801.2,534.3 797.2,542.8" fill="none" stroke="#dcdcdc" stroke-width="5.8" stroke-linecap="round" stroke-linejoin="round"/>
<polyline points="767.5,460.1 772.1,486.7" fill="none" stroke="#dcdcdc" stroke-width="5.4" stroke-linecap="round" stroke-linejoin="round"/>
<polyline points="756.7,445.3 756.7,469.9 752.1,500.5 746.0,518.9" fill="none" stroke="#dcdcdc" stroke-width="4.2" stroke-linecap="round" stroke-linejoin="round"/>
<polyline points="591.5,59.0 592.4,72.2 614.5,79.3 629.9,79.9 654.4,72.2 697.3,59.0 720.0,54.4" fill="none" stroke="#ffffff" stroke-width="4.2" stroke-linecap="round" stroke-linejoin="round"/>
<polyline points="633.5,96.7 655.0,74.3" fill="none" stroke="#ffffff" stroke-width="3" stroke-linecap="round" stroke-linejoin="round"/>
<polyline points="636.0,191.8 605.3,211.7 574.7,227.1 544.0,243.0 525.6,260.8 514.9,280.1" fill="none" stroke="#ffffff" stroke-width="4.6" stroke-linecap="round" stroke-linejoin="round"/>
<polyline points="471.9,202.5 482.7,207.1 484.2,214.8 478.1,236.3 488.8,260.8 513.3,280.1" fill="none" stroke="#ffffff" stroke-width="4" stroke-linecap="round" stroke-linejoin="round"/>
<polyline points="507.2,216.9 534.8,220.9 547.7,239.3" fill="none" stroke="#ffffff" stroke-width="3" stroke-linecap="round" stroke-linejoin="round"/>
<polyline points="536.9,210.2 534.8,220.9" fill="none" stroke="#ffffff" stroke-width="3" stroke-linecap="round" stroke-linejoin="round"/>
<polyline points="556.3,240.9 593.1,231.7" fill="none" stroke="#ffffff" stroke-width="3" stroke-linecap="round" stroke-linejoin="round"/>
<polyline points="700.0,62.1 730.7,54.7 758.3,50.7 776.7,67.6 795.1,89.1 810.4,109.0" fill="none" stroke="#ffffff" stroke-width="4.2" stroke-linecap="round" stroke-linejoin="round"/>
<polyline points="810.4,109.0 808.9,132.0 798.1,178.0 790.5,224.0 788.3,280.1" fill="none" stroke="#ffffff" stroke-width="4.2" stroke-linecap="round" stroke-linejoin="round"/>
<polyline points="810.4,109.0 841.1,105.0 867.1,73.7" fill="none" stroke="#ffffff" stroke-width="4" stroke-linecap="round" stroke-linejoin="round"/>
<polyline points="841.1,105.0 847.2,132.0 853.3,148.9 884.0,144.3 914.7,132.0 926.9,130.5 923.9,138.1 884.0,162.7 875.4,184.1 876.3,211.7 884.0,227.1 896.3,236.3 911.6,217.9 926.9,214.8 936.1,224.0 933.1,248.5 914.7,280.1" fill="none" stroke="#ffffff" stroke-width="4" stroke-linecap="round" stroke-linejoin="round"/>
<polyline points="847.8,151.0 827.3,193.3" fill="none" stroke="#ffffff" stroke-width="3.6" stroke-linecap="round" stroke-linejoin="round"/>
<polyline points="884.9,90.6 880.9,113.6 862.5,144.3" fill="none" stroke="#ffffff" stroke-width="3.4" stroke-linecap="round" stroke-linejoin="round"/>
<polyline points="914.7,104.4 859.5,144.9" fill="none" stroke="#ffffff" stroke-width="3.4" stroke-linecap="round" stroke-linejoin="round"/>
<polyline points="914.7,132.0 933.1,113.6 948.4,105.9 960.7,113.6 968.3,133.5" fill="none" stroke="#ffffff" stroke-width="3.4" stroke-linecap="round" stroke-linejoin="round"/>
<polyline points="822.7,46.1 816.5,59.0 792.0,79.9" fill="none" stroke="#ffffff" stroke-width="4" stroke-linecap="round" stroke-linejoin="round"/>
<polyline points="758.3,50.7 770.5,47.7" fill="none" stroke="#ffffff" stroke-width="4" stroke-linecap="round" stroke-linejoin="round"/>
<polyline points="896.3,52.3 914.7,64.5 939.2,59.0 957.6,46.1" fill="none" stroke="#ffffff" stroke-width="4" stroke-linecap="round" stroke-linejoin="round"/>
<polyline points="1013.4,46.1 991.3,125.9 969.9,187.2 954.5,220.0" fill="none" stroke="#ffffff" stroke-width="9" stroke-linecap="round" stroke-linejoin="round"/>
<polyline points="1060.0,122.8 1022.0,144.3 1006.7,171.9 988.3,224.0 972.9,280.1" fill="none" stroke="#ffffff" stroke-width="3.4" stroke-linecap="round" stroke-linejoin="round"/>
<polyline points="1006.7,141.2 1060.0,128.9" fill="none" stroke="#ffffff" stroke-width="3.4" stroke-linecap="round" stroke-linejoin="round"/>
<polyline points="788.9,181.7 795.7,184.1" fill="none" stroke="#ffffff" stroke-width="3" stroke-linecap="round" stroke-linejoin="round"/>
<polyline points="865.6,260.8 879.4,251.6 884.0,266.9 880.9,280.1" fill="none" stroke="#ffffff" stroke-width="3.2" stroke-linecap="round" stroke-linejoin="round"/>
<polyline points="513.3,278.3 508.7,312.0 504.1,373.3 498.0,434.7 496.5,446.9" fill="none" stroke="#ffffff" stroke-width="4.6" stroke-linecap="round" stroke-linejoin="round"/>
<polyline points="458.1,408.6 465.8,419.3 494.9,438.3" fill="none" stroke="#ffffff" stroke-width="3" stroke-linecap="round" stroke-linejoin="round"/>
<polyline points="542.5,407.7 545.5,434.7 544.0,460.1" fill="none" stroke="#ffffff" stroke-width="3.4" stroke-linecap="round" stroke-linejoin="round"/>
<polyline points="788.9,220.0 787.4,266.0 782.8,327.3 773.6,404.0 767.5,460.1" fill="none" stroke="#ffffff" stroke-width="4.2" stroke-linecap="round" stroke-linejoin="round"/>
<polyline points="795.1,307.4 795.7,327.3 804.3,342.7 828.8,353.4 844.1,354.9 853.3,348.8 871.7,312.0 882.5,281.3 879.4,266.0 876.3,253.7 865.6,259.9" fill="none" stroke="#ffffff" stroke-width="4" stroke-linecap="round" stroke-linejoin="round"/>
<polyline points="804.3,338.1 816.5,315.1 828.8,308.9 845.7,312.0" fill="none" stroke="#ffffff" stroke-width="3.6" stroke-linecap="round" stroke-linejoin="round"/>
<polyline points="933.1,220.0 936.1,232.3 930.0,256.8 914.7,282.9" fill="none" stroke="#ffffff" stroke-width="3.6" stroke-linecap="round" stroke-linejoin="round"/>
<polyline points="954.5,220.0 928.5,280.1 914.7,312.0 896.3,348.8 871.7,382.5 838.0,416.3 816.5,440.8 801.2,460.1" fill="none" stroke="#ffffff" stroke-width="9" stroke-linecap="round" stroke-linejoin="round"/>
<polyline points="989.8,250.7 972.9,305.9 951.5,359.5" fill="none" stroke="#ffffff" stroke-width="3.2" stroke-linecap="round" stroke-linejoin="round"/>
<polyline points="81.3,620.1 85.9,594.7 92.0,576.3 102.7,554.8 115.0,536.4 131.9,522.6 153.3,512.5 171.7,508.8 187.1,501.1 199.3,487.3 211.6,475.1 233.1,467.4 260.7,460.3 306.7,449.0 337.3,430.6 360.0,412.2" fill="none" stroke="#ffffff" stroke-width="8" stroke-linecap="round" stroke-linejoin="round"/>
<polyline points="82.8,532.7 92.0,508.8 122.7,478.1 153.3,450.5 184.0,432.1 214.7,421.4 231.5,416.8 236.7,421.4 231.5,428.5 214.7,436.7 196.3,453.6 180.9,481.2 159.5,500.2 154.9,508.8" fill="none" stroke="#ffffff" stroke-width="4.4" stroke-linecap="round" stroke-linejoin="round"/>
<polyline points="280.6,536.4 325.1,527.8 360.0,522.6" fill="none" stroke="#ffffff" stroke-width="4" stroke-linecap="round" stroke-linejoin="round"/>
<polyline points="69.9,600.8 71.1,620.1" fill="none" stroke="#ffffff" stroke-width="2.4" stroke-linecap="round" stroke-linejoin="round"/>
<polyline points="300.0,447.5 330.7,429.1 361.3,413.8 379.7,407.7 401.2,412.3 422.7,423.0 444.1,429.1 465.6,427.6 484.0,433.7 496.3,441.4 508.5,461.3 520.8,485.9 533.1,504.3 542.3,528.8 554.5,553.3 569.9,577.9 591.3,596.3 622.0,605.5 660.0,600.9" fill="none" stroke="#ffffff" stroke-width="8" stroke-linecap="round" stroke-linejoin="round"/>
<polyline points="326.1,442.3 346.0,435.3 361.3,432.2 376.7,430.1 401.2,432.2 434.9,439.3" fill="none" stroke="#ffffff" stroke-width="4.6" stroke-linecap="round" stroke-linejoin="round"/>
<polyline points="376.7,430.7 376.7,449.1 382.8,458.3 373.6,468.1" fill="none" stroke="#ffffff" stroke-width="4.6" stroke-linecap="round" stroke-linejoin="round"/>
<polyline points="300.0,532.5 346.0,522.7 392.0,513.5 428.8,508.9 459.5,511.0 471.7,522.7 484.0,547.2 496.3,574.8 500.9,584.0 502.4,608.5 514.7,626.9 523.9,640.1" fill="none" stroke="#ffffff" stroke-width="4.2" stroke-linecap="round" stroke-linejoin="round"/>
<polyline points="500.9,584.0 514.7,584.0 539.2,574.8 554.5,567.1" fill="none" stroke="#ffffff" stroke-width="4" stroke-linecap="round" stroke-linejoin="round"/>
<polyline points="500.9,400.0 499.3,424.5 497.8,441.4" fill="none" stroke="#ffffff" stroke-width="4.2" stroke-linecap="round" stroke-linejoin="round"/>
<polyline points="542.3,407.7 546.9,430.7 545.3,461.3 536.1,479.7 528.5,488.9" fill="none" stroke="#ffffff" stroke-width="3.4" stroke-linecap="round" stroke-linejoin="round"/>
<polyline points="457.9,409.2 465.6,421.5 496.3,439.9" fill="none" stroke="#ffffff" stroke-width="2.4" stroke-linecap="round" stroke-linejoin="round"/>
<polyline points="589.8,596.3 582.1,599.3 569.9,611.6 572.9,626.9 582.1,640.1" fill="none" stroke="#ffffff" stroke-width="3.4" stroke-linecap="round" stroke-linejoin="round"/>
<polyline points="618.9,591.7 660.0,580.9" fill="none" stroke="#ffffff" stroke-width="3.4" stroke-linecap="round" stroke-linejoin="round"/>
<polyline points="618.9,591.7 622.0,610.1 625.1,640.1" fill="none" stroke="#ffffff" stroke-width="3.4" stroke-linecap="round" stroke-linejoin="round"/>
<polyline points="113.5,543.0 98.1,567.5 88.9,592.1 84.3,622.7 78.2,650.3 65.9,671.8 46.0,693.3 27.6,714.7 12.3,733.1 -3.1,743.9" fill="none" stroke="#ffffff" stroke-width="8" stroke-linecap="round" stroke-linejoin="round"/>
<polyline points="69.9,601.3 71.1,635.0 73.6,653.4 65.9,664.1" fill="none" stroke="#ffffff" stroke-width="2.4" stroke-linecap="round" stroke-linejoin="round"/>
<polyline points="113.5,641.1 116.5,648.8 107.3,690.2 98.1,723.9 92.0,741.7" fill="none" stroke="#ffffff" stroke-width="4" stroke-linecap="round" stroke-linejoin="round"/>
<polyline points="113.5,641.1 92.0,665.7 73.6,684.1 61.3,702.5 50.6,723.9 36.8,739.3 16.9,757.7" fill="none" stroke="#ffffff" stroke-width="4" stroke-linecap="round" stroke-linejoin="round"/>
<polyline points="70.5,671.8 55.2,690.2 48.5,708.6 50.6,722.4" fill="none" stroke="#ffffff" stroke-width="3.6" stroke-linecap="round" stroke-linejoin="round"/>
<polyline points="536.3,543.0 551.6,558.3 566.9,576.7 585.3,593.6 603.7,602.8 622.1,605.9 646.7,602.8 677.3,595.1 700.0,589.0" fill="none" stroke="#ffffff" stroke-width="7" stroke-linecap="round" stroke-linejoin="round"/>
<polyline points="480.4,543.0 494.2,567.5 497.9,582.9 499.5,598.2 511.7,616.6 527.1,638.1 531.7,659.5 536.3,690.2 539.3,720.9 545.5,739.3 551.6,741.7" fill="none" stroke="#ffffff" stroke-width="4.2" stroke-linecap="round" stroke-linejoin="round"/>
<polyline points="545.5,739.3 542.4,757.7" fill="none" stroke="#ffffff" stroke-width="3.4" stroke-linecap="round" stroke-linejoin="round"/>
<polyline points="497.9,582.9 524.0,581.3 554.7,567.5 566.9,561.4" fill="none" stroke="#ffffff" stroke-width="4" stroke-linecap="round" stroke-linejoin="round"/>
<polyline points="620.6,607.4 625.2,635.0 631.3,665.7 639.0,696.3 643.6,714.7" fill="none" stroke="#ffffff" stroke-width="4" stroke-linecap="round" stroke-linejoin="round"/>
<polyline points="700.0,601.3 677.3,613.5 658.9,631.9 649.7,659.5 646.7,690.2 645.1,714.7 634.4,751.5 622.1,783.1" fill="none" stroke="#ffffff" stroke-width="7" stroke-linecap="round" stroke-linejoin="round"/>
<polyline points="700.0,671.8 677.3,687.1 646.7,710.1" fill="none" stroke="#ffffff" stroke-width="4.5" stroke-linecap="round" stroke-linejoin="round"/>
<polyline points="585.3,595.1 570.0,610.5 568.5,619.7 582.3,631.9" fill="none" stroke="#ffffff" stroke-width="3" stroke-linecap="round" stroke-linejoin="round"/>
<polyline points="646.7,727.0 662.0,739.3 677.3,742.3" fill="none" stroke="#ffffff" stroke-width="3.5" stroke-linecap="round" stroke-linejoin="round"/>
<polyline points="566.9,768.4 585.3,773.0 616.0,776.1 628.3,771.5" fill="none" stroke="#ffffff" stroke-width="3.5" stroke-linecap="round" stroke-linejoin="round"/>
<polyline points="620.6,592.1 677.3,582.9 689.6,576.7" fill="none" stroke="#ffffff" stroke-width="3.4" stroke-linecap="round" stroke-linejoin="round"/>
<polyline points="505.6,671.8 510.2,684.1 536.3,682.5" fill="none" stroke="#ffffff" stroke-width="2.4" stroke-linecap="round" stroke-linejoin="round"/>
<polyline points="493.3,690.2 511.7,702.5 514.8,727.0 536.3,727.0" fill="none" stroke="#ffffff" stroke-width="2.4" stroke-linecap="round" stroke-linejoin="round"/>
<polyline points="777.4,543.0 763.6,589.0 745.2,644.2 723.7,708.6 705.3,757.7 696.1,783.1" fill="none" stroke="#ffffff" stroke-width="9" stroke-linecap="round" stroke-linejoin="round"/>
<polyline points="797.3,543.0 794.3,573.7 785.1,604.3 772.8,635.0 760.5,671.8 748.3,702.5 729.9,727.0 714.5,751.5 705.3,783.1" fill="none" stroke="#ffffff" stroke-width="4" stroke-linecap="round" stroke-linejoin="round"/>
<polyline points="757.5,543.0 751.3,573.7 736.0,604.3 720.7,641.1 702.3,665.7 690.0,677.9" fill="none" stroke="#ffffff" stroke-width="4" stroke-linecap="round" stroke-linejoin="round"/>
<polyline points="690.0,595.1 708.4,589.0 723.7,573.7 736.0,552.2 740.6,543.0" fill="none" stroke="#ffffff" stroke-width="7" stroke-linecap="round" stroke-linejoin="round"/>
<polyline points="713.0,754.6 722.2,757.7 723.7,783.1" fill="none" stroke="#ffffff" stroke-width="3.4" stroke-linecap="round" stroke-linejoin="round"/>
<polyline points="822.7,430.0 807.3,451.5 792.0,488.3 777.3,542.8" fill="none" stroke="#ffffff" stroke-width="9" stroke-linecap="round" stroke-linejoin="round"/>
<polyline points="740.5,542.8 749.1,518.9 761.3,497.5 773.6,486.7" fill="none" stroke="#ffffff" stroke-width="7" stroke-linecap="round" stroke-linejoin="round"/>
<polyline points="755.2,506.7 758.3,542.8" fill="none" stroke="#ffffff" stroke-width="3.6" stroke-linecap="round" stroke-linejoin="round"/>
<polyline points="838.0,469.9 831.9,488.3 813.5,515.9 801.2,534.3 797.2,542.8" fill="none" stroke="#ffffff" stroke-width="4" stroke-linecap="round" stroke-linejoin="round"/>
<polyline points="767.5,460.1 772.1,486.7" fill="none" stroke="#ffffff" stroke-width="3.6" stroke-linecap="round" stroke-linejoin="round"/>
<polyline points="756.7,445.3 756.7,469.9 752.1,500.5 746.0,518.9" fill="none" stroke="#ffffff" stroke-width="2.4" stroke-linecap="round" stroke-linejoin="round"/>
<rect x="462.4" y="184.3" width="19.0" height="12.3" fill="#dfdfdf" transform="rotate(0 471.9 190.4)"/>
<rect x="462.4" y="183.2" width="19.0" height="12.3" fill="#ebebeb" transform="rotate(0 471.9 189.3)"/>
<rect x="492.8" y="186.1" width="9.2" height="11.7" fill="#dfdfdf" transform="rotate(10 497.4 192.0)"/>
<rect x="492.8" y="185.0" width="9.2" height="11.7" fill="#ebebeb" transform="rotate(10 497.4 190.9)"/>
<rect x="490.3" y="196.0" width="9.2" height="9.2" fill="#dfdfdf" transform="rotate(10 494.9 200.6)"/>
<rect x="490.3" y="194.9" width="9.2" height="9.2" fill="#ebebeb" transform="rotate(10 494.9 199.5)"/>
<rect x="509.5" y="175.3" width="19.9" height="13.8" fill="#dfdfdf" transform="rotate(5 519.5 182.2)"/>
<rect x="509.5" y="174.2" width="19.9" height="13.8" fill="#ebebeb" transform="rotate(5 519.5 181.1)"/>
<rect x="536.3" y="178.5" width="21.5" height="18.4" fill="#dfdfdf" transform="rotate(-10 547.1 187.7)"/>
<rect x="536.3" y="177.4" width="21.5" height="18.4" fill="#ebebeb" transform="rotate(-10 547.1 186.6)"/>
<rect x="531.7" y="193.5" width="15.3" height="9.2" fill="#dfdfdf" transform="rotate(-10 539.4 198.1)"/>
<rect x="531.7" y="192.4" width="15.3" height="9.2" fill="#ebebeb" transform="rotate(-10 539.4 197.0)"/>
<rect x="505.7" y="201.3" width="15.3" height="13.8" fill="#dfdfdf" transform="rotate(10 513.3 208.2)"/>
<rect x="505.7" y="200.2" width="15.3" height="13.8" fill="#ebebeb" transform="rotate(10 513.3 207.1)"/>
<rect x="459.7" y="228.2" width="12.3" height="15.3" fill="#dfdfdf" transform="rotate(15 465.8 235.8)"/>
<rect x="459.7" y="227.1" width="12.3" height="15.3" fill="#ebebeb" transform="rotate(15 465.8 234.7)"/>
<rect x="483.4" y="232.9" width="16.9" height="13.8" fill="#dfdfdf" transform="rotate(-5 491.9 239.8)"/>
<rect x="483.4" y="231.8" width="16.9" height="13.8" fill="#ebebeb" transform="rotate(-5 491.9 238.7)"/>
<rect x="499.5" y="251.2" width="12.3" height="12.3" fill="#dfdfdf" transform="rotate(25 505.7 257.3)"/>
<rect x="499.5" y="250.1" width="12.3" height="12.3" fill="#ebebeb" transform="rotate(25 505.7 256.2)"/>
<rect x="468.1" y="258.1" width="13.8" height="16.9" fill="#dfdfdf" transform="rotate(5 475.0 266.5)"/>
<rect x="468.1" y="257.0" width="13.8" height="16.9" fill="#ebebeb" transform="rotate(5 475.0 265.4)"/>
<rect x="531.7" y="260.4" width="12.3" height="12.3" fill="#dfdfdf" transform="rotate(30 537.9 266.5)"/>
<rect x="531.7" y="259.3" width="12.3" height="12.3" fill="#ebebeb" transform="rotate(30 537.9 265.4)"/>
<rect x="544.9" y="219.3" width="11.7" height="12.9" fill="#dfdfdf" transform="rotate(20 550.7 225.7)"/>
<rect x="544.9" y="218.2" width="11.7" height="12.9" fill="#ebebeb" transform="rotate(20 550.7 224.6)"/>
<rect x="563.2" y="213.6" width="13.8" height="13.8" fill="#dfdfdf" transform="rotate(25 570.1 220.5)"/>
<rect x="563.2" y="212.5" width="13.8" height="13.8" fill="#ebebeb" transform="rotate(25 570.1 219.4)"/>
<rect x="564.1" y="178.2" width="23.0" height="12.9" fill="#dfdfdf" transform="rotate(-30 575.6 184.6)"/>
<rect x="564.1" y="177.1" width="23.0" height="12.9" fill="#ebebeb" transform="rotate(-30 575.6 183.5)"/>
<rect x="590.0" y="161.5" width="18.4" height="13.8" fill="#dfdfdf" transform="rotate(-35 599.2 168.4)"/>
<rect x="590.0" y="160.4" width="18.4" height="13.8" fill="#ebebeb" transform="rotate(-35 599.2 167.3)"/>
<rect x="580.0" y="202.4" width="23.0" height="11.7" fill="#dfdfdf" transform="rotate(-30 591.5 208.2)"/>
<rect x="580.0" y="201.3" width="23.0" height="11.7" fill="#ebebeb" transform="rotate(-30 591.5 207.1)"/>
<rect x="608.1" y="181.4" width="22.1" height="13.8" fill="#dfdfdf" transform="rotate(-30 619.1 188.3)"/>
<rect x="608.1" y="180.3" width="22.1" height="13.8" fill="#ebebeb" transform="rotate(-30 619.1 187.2)"/>
<rect x="592.3" y="219.6" width="32.2" height="15.3" fill="#dfdfdf" transform="rotate(-25 608.4 227.2)"/>
<rect x="592.3" y="218.5" width="32.2" height="15.3" fill="#ebebeb" transform="rotate(-25 608.4 226.1)"/>
<rect x="638.3" y="189.8" width="38.3" height="36.8" fill="#dfdfdf" transform="rotate(40 657.5 208.2)"/>
<rect x="638.3" y="188.7" width="38.3" height="36.8" fill="#ebebeb" transform="rotate(40 657.5 207.1)"/>
<rect x="613.9" y="140.0" width="12.3" height="13.8" fill="#dfdfdf" transform="rotate(10 620.0 146.9)"/>
<rect x="613.9" y="138.9" width="12.3" height="13.8" fill="#ebebeb" transform="rotate(10 620.0 145.8)"/>
<rect x="626.8" y="157.6" width="18.4" height="15.3" fill="#dfdfdf" transform="rotate(40 636.0 165.3)"/>
<rect x="626.8" y="156.5" width="18.4" height="15.3" fill="#ebebeb" transform="rotate(40 636.0 164.2)"/>
<rect x="652.1" y="127.7" width="29.1" height="29.1" fill="#dfdfdf" transform="rotate(40 666.7 142.3)"/>
<rect x="652.1" y="126.6" width="29.1" height="29.1" fill="#ebebeb" transform="rotate(40 666.7 141.2)"/>
<rect x="672.8" y="107.0" width="42.9" height="33.7" fill="#dfdfdf" transform="rotate(-28 694.3 123.9)"/>
<rect x="672.8" y="105.9" width="42.9" height="33.7" fill="#ebebeb" transform="rotate(-28 694.3 122.8)"/>
<rect x="590.0" y="88.6" width="24.5" height="15.3" fill="#dfdfdf" transform="rotate(5 602.3 96.3)"/>
<rect x="590.0" y="87.5" width="24.5" height="15.3" fill="#ebebeb" transform="rotate(5 602.3 95.2)"/>
<rect x="644.4" y="90.2" width="16.9" height="12.3" fill="#dfdfdf" transform="rotate(-35 652.9 96.3)"/>
<rect x="644.4" y="89.1" width="16.9" height="12.3" fill="#ebebeb" transform="rotate(-35 652.9 95.2)"/>
<rect x="630.6" y="104.0" width="10.7" height="12.3" fill="#dfdfdf" transform="rotate(30 636.0 110.1)"/>
<rect x="630.6" y="102.9" width="10.7" height="12.3" fill="#ebebeb" transform="rotate(30 636.0 109.0)"/>
<rect x="615.3" y="117.8" width="10.7" height="9.2" fill="#dfdfdf" transform="rotate(30 620.7 122.4)"/>
<rect x="615.3" y="116.7" width="10.7" height="9.2" fill="#ebebeb" transform="rotate(30 620.7 121.3)"/>
<rect x="605.6" y="123.3" width="8.6" height="8.6" fill="#dfdfdf" transform="rotate(10 609.9 127.6)"/>
<rect x="605.6" y="122.2" width="8.6" height="8.6" fill="#ebebeb" transform="rotate(10 609.9 126.5)"/>
<rect x="619.9" y="55.7" width="16.9" height="13.8" fill="#dfdfdf" transform="rotate(-5 628.3 62.6)"/>
<rect x="619.9" y="54.6" width="16.9" height="13.8" fill="#ebebeb" transform="rotate(-5 628.3 61.5)"/>
<rect x="644.4" y="50.3" width="13.8" height="12.3" fill="#dfdfdf" transform="rotate(10 651.3 56.4)"/>
<rect x="644.4" y="49.2" width="13.8" height="12.3" fill="#ebebeb" transform="rotate(10 651.3 55.3)"/>
<rect x="671.3" y="48.8" width="18.4" height="9.2" fill="#dfdfdf" transform="rotate(-10 680.5 53.4)"/>
<rect x="671.3" y="47.7" width="18.4" height="9.2" fill="#ebebeb" transform="rotate(-10 680.5 52.3)"/>
<rect x="681.2" y="70.2" width="16.9" height="12.3" fill="#dfdfdf" transform="rotate(5 689.7 76.4)"/>
<rect x="681.2" y="69.1" width="16.9" height="12.3" fill="#ebebeb" transform="rotate(5 689.7 75.3)"/>
<rect x="707.3" y="65.6" width="10.7" height="9.2" fill="#dfdfdf" transform="rotate(10 712.7 70.2)"/>
<rect x="707.3" y="64.5" width="10.7" height="9.2" fill="#ebebeb" transform="rotate(10 712.7 69.1)"/>
<rect x="711.1" y="84.0" width="9.2" height="9.2" fill="#dfdfdf" transform="rotate(10 715.7 88.6)"/>
<rect x="711.1" y="82.9" width="9.2" height="9.2" fill="#ebebeb" transform="rotate(10 715.7 87.5)"/>
<rect x="655.9" y="74.1" width="6.1" height="7.7" fill="#dfdfdf" transform="rotate(20 659.0 77.9)"/>
<rect x="655.9" y="73.0" width="6.1" height="7.7" fill="#ebebeb" transform="rotate(20 659.0 76.8)"/>
<rect x="666.0" y="74.7" width="6.1" height="7.7" fill="#dfdfdf" transform="rotate(30 669.1 78.5)"/>
<rect x="666.0" y="73.6" width="6.1" height="7.7" fill="#ebebeb" transform="rotate(30 669.1 77.4)"/>
<rect x="594.6" y="71.8" width="6.1" height="9.2" fill="#dfdfdf" transform="rotate(0 597.7 76.4)"/>
<rect x="594.6" y="70.7" width="6.1" height="9.2" fill="#ebebeb" transform="rotate(0 597.7 75.3)"/>
<rect x="655.9" y="229.7" width="12.3" height="9.2" fill="#dfdfdf" transform="rotate(35 662.1 234.3)"/>
<rect x="655.9" y="228.6" width="12.3" height="9.2" fill="#ebebeb" transform="rotate(35 662.1 233.2)"/>
<rect x="709.2" y="66.6" width="9.2" height="9.2" fill="#dfdfdf" transform="rotate(5 713.8 71.2)"/>
<rect x="709.2" y="65.5" width="9.2" height="9.2" fill="#ebebeb" transform="rotate(5 713.8 70.1)"/>
<rect x="722.7" y="65.9" width="8.6" height="8.6" fill="#dfdfdf" transform="rotate(5 727.0 70.2)"/>
<rect x="722.7" y="64.8" width="8.6" height="8.6" fill="#ebebeb" transform="rotate(5 727.0 69.1)"/>
<rect x="739.9" y="57.2" width="12.3" height="10.7" fill="#dfdfdf" transform="rotate(15 746.0 62.6)"/>
<rect x="739.9" y="56.1" width="12.3" height="10.7" fill="#ebebeb" transform="rotate(15 746.0 61.5)"/>
<rect x="712.3" y="84.0" width="9.2" height="9.2" fill="#dfdfdf" transform="rotate(5 716.9 88.6)"/>
<rect x="712.3" y="82.9" width="9.2" height="9.2" fill="#ebebeb" transform="rotate(5 716.9 87.5)"/>
<rect x="726.4" y="82.8" width="8.6" height="9.8" fill="#dfdfdf" transform="rotate(5 730.7 87.7)"/>
<rect x="726.4" y="81.7" width="8.6" height="9.8" fill="#ebebeb" transform="rotate(5 730.7 86.6)"/>
<rect x="739.1" y="98.8" width="16.9" height="12.3" fill="#dfdfdf" transform="rotate(15 747.5 104.9)"/>
<rect x="739.1" y="97.7" width="16.9" height="12.3" fill="#ebebeb" transform="rotate(15 747.5 103.8)"/>
<rect x="765.9" y="87.9" width="15.3" height="10.7" fill="#dfdfdf" transform="rotate(25 773.6 93.2)"/>
<rect x="765.9" y="86.8" width="15.3" height="10.7" fill="#ebebeb" transform="rotate(25 773.6 92.1)"/>
<rect x="782.8" y="92.5" width="9.2" height="10.7" fill="#dfdfdf" transform="rotate(30 787.4 97.8)"/>
<rect x="782.8" y="91.4" width="9.2" height="10.7" fill="#ebebeb" transform="rotate(30 787.4 96.7)"/>
<rect x="777.4" y="110.3" width="16.9" height="13.8" fill="#dfdfdf" transform="rotate(15 785.9 117.2)"/>
<rect x="777.4" y="109.2" width="16.9" height="13.8" fill="#ebebeb" transform="rotate(15 785.9 116.1)"/>
<rect x="800.6" y="116.4" width="6.1" height="7.7" fill="#dfdfdf" transform="rotate(20 803.6 120.2)"/>
<rect x="800.6" y="115.3" width="6.1" height="7.7" fill="#ebebeb" transform="rotate(20 803.6 119.1)"/>
<rect x="822.0" y="83.4" width="18.4" height="12.3" fill="#dfdfdf" transform="rotate(30 831.2 89.6)"/>
<rect x="822.0" y="82.3" width="18.4" height="12.3" fill="#ebebeb" transform="rotate(30 831.2 88.5)"/>
<rect x="783.6" y="58.7" width="10.7" height="13.8" fill="#dfdfdf" transform="rotate(-35 788.9 65.6)"/>
<rect x="783.6" y="57.6" width="10.7" height="13.8" fill="#ebebeb" transform="rotate(-35 788.9 64.5)"/>
<rect x="822.7" y="51.8" width="12.3" height="9.2" fill="#dfdfdf" transform="rotate(-20 828.8 56.4)"/>
<rect x="822.7" y="50.7" width="12.3" height="9.2" fill="#ebebeb" transform="rotate(-20 828.8 55.3)"/>
<rect x="818.8" y="111.6" width="19.9" height="24.5" fill="#dfdfdf" transform="rotate(5 828.8 123.9)"/>
<rect x="818.8" y="110.5" width="19.9" height="24.5" fill="#ebebeb" transform="rotate(5 828.8 122.8)"/>
<rect x="855.6" y="86.3" width="10.7" height="10.7" fill="#dfdfdf" transform="rotate(30 861.0 91.7)"/>
<rect x="855.6" y="85.2" width="10.7" height="10.7" fill="#ebebeb" transform="rotate(30 861.0 90.6)"/>
<rect x="854.1" y="94.0" width="10.7" height="10.7" fill="#dfdfdf" transform="rotate(30 859.5 99.4)"/>
<rect x="854.1" y="92.9" width="10.7" height="10.7" fill="#ebebeb" transform="rotate(30 859.5 98.3)"/>
<rect x="871.0" y="90.2" width="10.7" height="12.3" fill="#dfdfdf" transform="rotate(30 876.3 96.3)"/>
<rect x="871.0" y="89.1" width="10.7" height="12.3" fill="#ebebeb" transform="rotate(30 876.3 95.2)"/>
<rect x="856.4" y="107.0" width="12.3" height="12.3" fill="#dfdfdf" transform="rotate(30 862.5 113.2)"/>
<rect x="856.4" y="105.9" width="12.3" height="12.3" fill="#ebebeb" transform="rotate(30 862.5 112.1)"/>
<rect x="854.9" y="124.7" width="12.3" height="13.8" fill="#dfdfdf" transform="rotate(-30 861.0 131.6)"/>
<rect x="854.9" y="123.6" width="12.3" height="13.8" fill="#ebebeb" transform="rotate(-30 861.0 130.5)"/>
<rect x="867.1" y="58.7" width="15.3" height="10.7" fill="#dfdfdf" transform="rotate(15 874.8 64.1)"/>
<rect x="867.1" y="57.6" width="15.3" height="10.7" fill="#ebebeb" transform="rotate(15 874.8 63.0)"/>
<rect x="884.8" y="67.2" width="13.8" height="15.3" fill="#dfdfdf" transform="rotate(30 891.7 74.8)"/>
<rect x="884.8" y="66.1" width="13.8" height="15.3" fill="#ebebeb" transform="rotate(30 891.7 73.7)"/>
<rect x="897.8" y="68.7" width="6.1" height="9.2" fill="#dfdfdf" transform="rotate(10 900.9 73.3)"/>
<rect x="897.8" y="67.6" width="6.1" height="9.2" fill="#ebebeb" transform="rotate(10 900.9 72.2)"/>
<rect x="899.3" y="49.5" width="12.3" height="7.7" fill="#dfdfdf" transform="rotate(0 905.5 53.4)"/>
<rect x="899.3" y="48.4" width="12.3" height="7.7" fill="#ebebeb" transform="rotate(0 905.5 52.3)"/>
<rect x="920.8" y="48.8" width="9.2" height="9.2" fill="#dfdfdf" transform="rotate(10 925.4 53.4)"/>
<rect x="920.8" y="47.7" width="9.2" height="9.2" fill="#ebebeb" transform="rotate(10 925.4 52.3)"/>
<rect x="940.7" y="62.7" width="9.2" height="10.7" fill="#dfdfdf" transform="rotate(-30 945.3 68.1)"/>
<rect x="940.7" y="61.6" width="9.2" height="10.7" fill="#ebebeb" transform="rotate(-30 945.3 67.0)"/>
<rect x="936.9" y="75.6" width="10.7" height="10.7" fill="#dfdfdf" transform="rotate(30 942.3 81.0)"/>
<rect x="936.9" y="74.5" width="10.7" height="10.7" fill="#ebebeb" transform="rotate(30 942.3 79.9)"/>
<rect x="956.1" y="69.5" width="9.2" height="10.7" fill="#dfdfdf" transform="rotate(30 960.7 74.8)"/>
<rect x="956.1" y="68.4" width="9.2" height="10.7" fill="#ebebeb" transform="rotate(30 960.7 73.7)"/>
<rect x="966.8" y="74.1" width="9.2" height="10.7" fill="#dfdfdf" transform="rotate(30 971.4 79.4)"/>
<rect x="966.8" y="73.0" width="9.2" height="10.7" fill="#ebebeb" transform="rotate(30 971.4 78.3)"/>
<rect x="977.8" y="81.0" width="8.6" height="9.2" fill="#dfdfdf" transform="rotate(30 982.1 85.6)"/>
<rect x="977.8" y="79.9" width="8.6" height="9.2" fill="#ebebeb" transform="rotate(30 982.1 84.5)"/>
<rect x="947.6" y="90.9" width="10.7" height="10.7" fill="#dfdfdf" transform="rotate(30 953.0 96.3)"/>
<rect x="947.6" y="89.8" width="10.7" height="10.7" fill="#ebebeb" transform="rotate(30 953.0 95.2)"/>
<rect x="976.0" y="92.5" width="9.2" height="10.7" fill="#dfdfdf" transform="rotate(30 980.6 97.8)"/>
<rect x="976.0" y="91.4" width="9.2" height="10.7" fill="#ebebeb" transform="rotate(30 980.6 96.7)"/>
<rect x="971.4" y="51.8" width="12.3" height="15.3" fill="#dfdfdf" transform="rotate(-20 977.5 59.5)"/>
<rect x="971.4" y="50.7" width="12.3" height="15.3" fill="#ebebeb" transform="rotate(-20 977.5 58.4)"/>
<rect x="916.2" y="103.2" width="18.4" height="13.8" fill="#dfdfdf" transform="rotate(-30 925.4 110.1)"/>
<rect x="916.2" y="102.1" width="18.4" height="13.8" fill="#ebebeb" transform="rotate(-30 925.4 109.0)"/>
<rect x="898.6" y="119.3" width="13.8" height="12.3" fill="#dfdfdf" transform="rotate(-20 905.5 125.4)"/>
<rect x="898.6" y="118.2" width="13.8" height="12.3" fill="#ebebeb" transform="rotate(-20 905.5 124.3)"/>
<rect x="933.1" y="111.6" width="15.3" height="15.3" fill="#dfdfdf" transform="rotate(20 940.7 119.3)"/>
<rect x="933.1" y="110.5" width="15.3" height="15.3" fill="#ebebeb" transform="rotate(20 940.7 118.2)"/>
<rect x="959.1" y="109.3" width="9.2" height="13.8" fill="#dfdfdf" transform="rotate(-25 963.7 116.2)"/>
<rect x="959.1" y="108.2" width="9.2" height="13.8" fill="#ebebeb" transform="rotate(-25 963.7 115.1)"/>
<rect x="946.1" y="135.4" width="16.9" height="16.9" fill="#dfdfdf" transform="rotate(-20 954.5 143.8)"/>
<rect x="946.1" y="134.3" width="16.9" height="16.9" fill="#ebebeb" transform="rotate(-20 954.5 142.7)"/>
<rect x="921.6" y="148.4" width="13.8" height="15.3" fill="#dfdfdf" transform="rotate(25 928.5 156.1)"/>
<rect x="921.6" y="147.3" width="13.8" height="15.3" fill="#ebebeb" transform="rotate(25 928.5 155.0)"/>
<rect x="905.5" y="156.9" width="12.3" height="13.8" fill="#dfdfdf" transform="rotate(25 911.6 163.8)"/>
<rect x="905.5" y="155.8" width="12.3" height="13.8" fill="#ebebeb" transform="rotate(25 911.6 162.7)"/>
<rect x="876.9" y="153.8" width="9.2" height="10.7" fill="#dfdfdf" transform="rotate(-20 881.5 159.2)"/>
<rect x="876.9" y="152.7" width="9.2" height="10.7" fill="#ebebeb" transform="rotate(-20 881.5 158.1)"/>
<rect x="887.1" y="173.7" width="18.4" height="10.7" fill="#dfdfdf" transform="rotate(0 896.3 179.1)"/>
<rect x="887.1" y="172.6" width="18.4" height="10.7" fill="#ebebeb" transform="rotate(0 896.3 178.0)"/>
<rect x="930.8" y="169.1" width="16.9" height="16.9" fill="#dfdfdf" transform="rotate(10 939.2 177.6)"/>
<rect x="930.8" y="168.0" width="16.9" height="16.9" fill="#ebebeb" transform="rotate(10 939.2 176.5)"/>
<rect x="927.7" y="196.0" width="13.8" height="12.3" fill="#dfdfdf" transform="rotate(15 934.6 202.1)"/>
<rect x="927.7" y="194.9" width="13.8" height="12.3" fill="#ebebeb" transform="rotate(15 934.6 201.0)"/>
<rect x="847.2" y="176.8" width="21.5" height="13.8" fill="#dfdfdf" transform="rotate(20 857.9 183.7)"/>
<rect x="847.2" y="175.7" width="21.5" height="13.8" fill="#ebebeb" transform="rotate(20 857.9 182.6)"/>
<rect x="862.5" y="179.1" width="9.2" height="15.3" fill="#dfdfdf" transform="rotate(10 867.1 186.8)"/>
<rect x="862.5" y="178.0" width="9.2" height="15.3" fill="#ebebeb" transform="rotate(10 867.1 185.7)"/>
<rect x="812.7" y="156.9" width="13.8" height="10.7" fill="#dfdfdf" transform="rotate(10 819.6 162.2)"/>
<rect x="812.7" y="155.8" width="13.8" height="10.7" fill="#ebebeb" transform="rotate(10 819.6 161.1)"/>
<rect x="814.8" y="169.1" width="10.7" height="10.7" fill="#dfdfdf" transform="rotate(10 820.2 174.5)"/>
<rect x="814.8" y="168.0" width="10.7" height="10.7" fill="#ebebeb" transform="rotate(10 820.2 173.4)"/>
<rect x="827.3" y="172.2" width="6.1" height="7.7" fill="#dfdfdf" transform="rotate(30 830.3 176.0)"/>
<rect x="827.3" y="171.1" width="6.1" height="7.7" fill="#ebebeb" transform="rotate(30 830.3 174.9)"/>
<rect x="804.1" y="185.8" width="13.8" height="12.3" fill="#dfdfdf" transform="rotate(5 811.0 192.0)"/>
<rect x="804.1" y="184.7" width="13.8" height="12.3" fill="#ebebeb" transform="rotate(5 811.0 190.9)"/>
<rect x="800.4" y="204.5" width="16.9" height="9.2" fill="#dfdfdf" transform="rotate(5 808.9 209.1)"/>
<rect x="800.4" y="203.4" width="16.9" height="9.2" fill="#ebebeb" transform="rotate(5 808.9 208.0)"/>
<rect x="756.7" y="188.4" width="9.2" height="10.7" fill="#dfdfdf" transform="rotate(5 761.3 193.8)"/>
<rect x="756.7" y="187.3" width="9.2" height="10.7" fill="#ebebeb" transform="rotate(5 761.3 192.7)"/>
<rect x="758.3" y="200.6" width="6.1" height="9.2" fill="#dfdfdf" transform="rotate(0 761.3 205.2)"/>
<rect x="758.3" y="199.5" width="6.1" height="9.2" fill="#ebebeb" transform="rotate(0 761.3 204.1)"/>
<rect x="773.4" y="194.6" width="13.8" height="10.7" fill="#dfdfdf" transform="rotate(20 780.3 199.9)"/>
<rect x="773.4" y="193.5" width="13.8" height="10.7" fill="#ebebeb" transform="rotate(20 780.3 198.8)"/>
<rect x="832.2" y="204.5" width="8.6" height="9.2" fill="#dfdfdf" transform="rotate(10 836.5 209.1)"/>
<rect x="832.2" y="203.4" width="8.6" height="9.2" fill="#ebebeb" transform="rotate(10 836.5 208.0)"/>
<rect x="838.3" y="206.7" width="8.6" height="9.2" fill="#dfdfdf" transform="rotate(10 842.6 211.3)"/>
<rect x="838.3" y="205.6" width="8.6" height="9.2" fill="#ebebeb" transform="rotate(10 842.6 210.2)"/>
<rect x="796.6" y="223.4" width="12.3" height="10.7" fill="#dfdfdf" transform="rotate(5 802.7 228.8)"/>
<rect x="796.6" y="222.3" width="12.3" height="10.7" fill="#ebebeb" transform="rotate(5 802.7 227.7)"/>
<rect x="801.2" y="231.1" width="6.1" height="7.7" fill="#dfdfdf" transform="rotate(5 804.3 234.9)"/>
<rect x="801.2" y="230.0" width="6.1" height="7.7" fill="#ebebeb" transform="rotate(5 804.3 233.8)"/>
<rect x="762.1" y="224.9" width="16.9" height="19.9" fill="#dfdfdf" transform="rotate(5 770.5 234.9)"/>
<rect x="762.1" y="223.8" width="16.9" height="19.9" fill="#ebebeb" transform="rotate(5 770.5 233.8)"/>
<rect x="747.2" y="229.8" width="6.7" height="10.7" fill="#dfdfdf" transform="rotate(5 750.6 235.2)"/>
<rect x="747.2" y="228.7" width="6.7" height="10.7" fill="#ebebeb" transform="rotate(5 750.6 234.1)"/>
<rect x="777.9" y="236.6" width="6.7" height="7.7" fill="#dfdfdf" transform="rotate(5 781.3 240.4)"/>
<rect x="777.9" y="235.5" width="6.7" height="7.7" fill="#ebebeb" transform="rotate(5 781.3 239.3)"/>
<rect x="781.3" y="240.4" width="6.1" height="9.2" fill="#dfdfdf" transform="rotate(5 784.3 245.0)"/>
<rect x="781.3" y="239.3" width="6.1" height="9.2" fill="#ebebeb" transform="rotate(5 784.3 243.9)"/>
<rect x="812.1" y="237.4" width="7.7" height="12.3" fill="#dfdfdf" transform="rotate(5 815.9 243.5)"/>
<rect x="812.1" y="236.3" width="7.7" height="12.3" fill="#ebebeb" transform="rotate(5 815.9 242.4)"/>
<rect x="828.6" y="228.5" width="7.7" height="8.6" fill="#dfdfdf" transform="rotate(10 832.5 232.8)"/>
<rect x="828.6" y="227.4" width="7.7" height="8.6" fill="#ebebeb" transform="rotate(10 832.5 231.7)"/>
<rect x="835.7" y="232.1" width="7.7" height="9.2" fill="#dfdfdf" transform="rotate(10 839.5 236.7)"/>
<rect x="835.7" y="231.0" width="7.7" height="9.2" fill="#ebebeb" transform="rotate(10 839.5 235.6)"/>
<rect x="796.6" y="250.2" width="12.3" height="12.3" fill="#dfdfdf" transform="rotate(5 802.7 256.4)"/>
<rect x="796.6" y="249.1" width="12.3" height="12.3" fill="#ebebeb" transform="rotate(5 802.7 255.3)"/>
<rect x="769.6" y="254.8" width="6.7" height="9.2" fill="#dfdfdf" transform="rotate(5 773.0 259.4)"/>
<rect x="769.6" y="253.7" width="6.7" height="9.2" fill="#ebebeb" transform="rotate(5 773.0 258.3)"/>
<rect x="775.7" y="261.9" width="9.2" height="12.3" fill="#dfdfdf" transform="rotate(10 780.3 268.0)"/>
<rect x="775.7" y="260.8" width="9.2" height="12.3" fill="#ebebeb" transform="rotate(10 780.3 266.9)"/>
<rect x="814.2" y="262.7" width="7.7" height="10.7" fill="#dfdfdf" transform="rotate(5 818.1 268.0)"/>
<rect x="814.2" y="261.6" width="7.7" height="10.7" fill="#ebebeb" transform="rotate(5 818.1 266.9)"/>
<rect x="829.7" y="253.6" width="8.6" height="9.2" fill="#dfdfdf" transform="rotate(10 834.0 258.2)"/>
<rect x="829.7" y="252.5" width="8.6" height="9.2" fill="#ebebeb" transform="rotate(10 834.0 257.1)"/>
<rect x="837.8" y="256.7" width="7.7" height="9.2" fill="#dfdfdf" transform="rotate(10 841.7 261.3)"/>
<rect x="837.8" y="255.6" width="7.7" height="9.2" fill="#ebebeb" transform="rotate(10 841.7 260.2)"/>
<rect x="744.5" y="260.4" width="12.3" height="15.3" fill="#dfdfdf" transform="rotate(-20 750.6 268.0)"/>
<rect x="744.5" y="259.3" width="12.3" height="15.3" fill="#ebebeb" transform="rotate(-20 750.6 266.9)"/>
<rect x="853.3" y="264.2" width="12.3" height="10.7" fill="#dfdfdf" transform="rotate(20 859.5 269.6)"/>
<rect x="853.3" y="263.1" width="12.3" height="10.7" fill="#ebebeb" transform="rotate(20 859.5 268.5)"/>
<rect x="876.6" y="230.5" width="11.7" height="13.8" fill="#dfdfdf" transform="rotate(-30 882.5 237.4)"/>
<rect x="876.6" y="229.4" width="11.7" height="13.8" fill="#ebebeb" transform="rotate(-30 882.5 236.3)"/>
<rect x="895.5" y="211.3" width="13.8" height="18.4" fill="#dfdfdf" transform="rotate(20 902.4 220.5)"/>
<rect x="895.5" y="210.2" width="13.8" height="18.4" fill="#ebebeb" transform="rotate(20 902.4 219.4)"/>
<rect x="914.7" y="218.2" width="9.2" height="13.8" fill="#dfdfdf" transform="rotate(20 919.3 225.1)"/>
<rect x="914.7" y="217.1" width="9.2" height="13.8" fill="#ebebeb" transform="rotate(20 919.3 224.0)"/>
<rect x="907.0" y="252.7" width="12.3" height="15.3" fill="#dfdfdf" transform="rotate(20 913.1 260.4)"/>
<rect x="907.0" y="251.6" width="12.3" height="15.3" fill="#ebebeb" transform="rotate(20 913.1 259.3)"/>
<rect x="972.2" y="222.8" width="13.8" height="19.9" fill="#dfdfdf" transform="rotate(15 979.1 232.8)"/>
<rect x="972.2" y="221.7" width="13.8" height="19.9" fill="#ebebeb" transform="rotate(15 979.1 231.7)"/>
<rect x="980.6" y="191.4" width="12.3" height="18.4" fill="#dfdfdf" transform="rotate(15 986.7 200.6)"/>
<rect x="980.6" y="190.3" width="12.3" height="18.4" fill="#ebebeb" transform="rotate(15 986.7 199.5)"/>
<rect x="995.9" y="165.3" width="15.3" height="27.6" fill="#dfdfdf" transform="rotate(15 1003.6 179.1)"/>
<rect x="995.9" y="164.2" width="15.3" height="27.6" fill="#ebebeb" transform="rotate(15 1003.6 178.0)"/>
<rect x="1026.6" y="159.2" width="18.4" height="33.7" fill="#dfdfdf" transform="rotate(20 1035.8 176.0)"/>
<rect x="1026.6" y="158.1" width="18.4" height="33.7" fill="#ebebeb" transform="rotate(20 1035.8 174.9)"/>
<rect x="1039.6" y="192.9" width="7.7" height="9.2" fill="#dfdfdf" transform="rotate(20 1043.5 197.5)"/>
<rect x="1039.6" y="191.8" width="7.7" height="9.2" fill="#ebebeb" transform="rotate(20 1043.5 196.4)"/>
<rect x="1014.3" y="120.8" width="12.3" height="9.2" fill="#dfdfdf" transform="rotate(30 1020.5 125.4)"/>
<rect x="1014.3" y="119.7" width="12.3" height="9.2" fill="#ebebeb" transform="rotate(30 1020.5 124.3)"/>
<rect x="1021.2" y="114.7" width="10.7" height="9.2" fill="#dfdfdf" transform="rotate(30 1026.6 119.3)"/>
<rect x="1021.2" y="113.6" width="10.7" height="9.2" fill="#ebebeb" transform="rotate(30 1026.6 118.2)"/>
<rect x="1011.3" y="113.2" width="9.2" height="9.2" fill="#dfdfdf" transform="rotate(30 1015.9 117.8)"/>
<rect x="1011.3" y="112.1" width="9.2" height="9.2" fill="#ebebeb" transform="rotate(30 1015.9 116.7)"/>
<rect x="1025.1" y="103.2" width="9.2" height="10.7" fill="#dfdfdf" transform="rotate(35 1029.7 108.6)"/>
<rect x="1025.1" y="102.1" width="9.2" height="10.7" fill="#ebebeb" transform="rotate(35 1029.7 107.5)"/>
<rect x="1029.7" y="97.1" width="12.3" height="13.8" fill="#dfdfdf" transform="rotate(35 1035.8 104.0)"/>
<rect x="1029.7" y="96.0" width="12.3" height="13.8" fill="#ebebeb" transform="rotate(35 1035.8 102.9)"/>
<rect x="1023.5" y="61.0" width="33.7" height="15.3" fill="#dfdfdf" transform="rotate(35 1040.4 68.7)"/>
<rect x="1023.5" y="59.9" width="33.7" height="15.3" fill="#ebebeb" transform="rotate(35 1040.4 67.6)"/>
<rect x="1008.2" y="253.5" width="15.3" height="16.9" fill="#dfdfdf" transform="rotate(15 1015.9 261.9)"/>
<rect x="1008.2" y="252.4" width="15.3" height="16.9" fill="#ebebeb" transform="rotate(15 1015.9 260.8)"/>
<rect x="493.4" y="285.5" width="12.3" height="12.3" fill="#dfdfdf" transform="rotate(5 499.5 291.6)"/>
<rect x="493.4" y="284.4" width="12.3" height="12.3" fill="#ebebeb" transform="rotate(5 499.5 290.5)"/>
<rect x="461.5" y="310.9" width="11.7" height="12.3" fill="#dfdfdf" transform="rotate(0 467.3 317.1)"/>
<rect x="461.5" y="309.8" width="11.7" height="12.3" fill="#ebebeb" transform="rotate(0 467.3 316.0)"/>
<rect x="482.0" y="313.4" width="12.3" height="12.9" fill="#dfdfdf" transform="rotate(0 488.2 319.8)"/>
<rect x="482.0" y="312.3" width="12.3" height="12.9" fill="#ebebeb" transform="rotate(0 488.2 318.7)"/>
<rect x="474.1" y="337.8" width="12.9" height="13.8" fill="#dfdfdf" transform="rotate(0 480.5 344.7)"/>
<rect x="474.1" y="336.7" width="12.9" height="13.8" fill="#ebebeb" transform="rotate(0 480.5 343.6)"/>
<rect x="477.4" y="385.9" width="9.2" height="10.7" fill="#dfdfdf" transform="rotate(25 482.0 391.3)"/>
<rect x="477.4" y="384.8" width="9.2" height="10.7" fill="#ebebeb" transform="rotate(25 482.0 390.2)"/>
<rect x="483.6" y="401.4" width="9.2" height="12.3" fill="#dfdfdf" transform="rotate(10 488.2 407.5)"/>
<rect x="483.6" y="400.3" width="9.2" height="12.3" fill="#ebebeb" transform="rotate(10 488.2 406.4)"/>
<rect x="516.4" y="316.9" width="15.3" height="13.8" fill="#dfdfdf" transform="rotate(15 524.1 323.8)"/>
<rect x="516.4" y="315.8" width="15.3" height="13.8" fill="#ebebeb" transform="rotate(15 524.1 322.7)"/>
<rect x="513.5" y="329.2" width="10.7" height="16.9" fill="#dfdfdf" transform="rotate(5 518.8 337.6)"/>
<rect x="513.5" y="328.1" width="10.7" height="16.9" fill="#ebebeb" transform="rotate(5 518.8 336.5)"/>
<rect x="511.0" y="354.5" width="16.9" height="12.3" fill="#dfdfdf" transform="rotate(5 519.5 360.6)"/>
<rect x="511.0" y="353.4" width="16.9" height="12.3" fill="#ebebeb" transform="rotate(5 519.5 359.5)"/>
<rect x="509.5" y="372.9" width="16.9" height="15.3" fill="#dfdfdf" transform="rotate(5 517.9 380.6)"/>
<rect x="509.5" y="371.8" width="16.9" height="15.3" fill="#ebebeb" transform="rotate(5 517.9 379.5)"/>
<rect x="508.7" y="395.7" width="15.3" height="13.8" fill="#dfdfdf" transform="rotate(5 516.4 402.6)"/>
<rect x="508.7" y="394.6" width="15.3" height="13.8" fill="#ebebeb" transform="rotate(5 516.4 401.5)"/>
<rect x="511.0" y="416.0" width="19.9" height="10.7" fill="#dfdfdf" transform="rotate(0 521.0 421.3)"/>
<rect x="511.0" y="414.9" width="19.9" height="10.7" fill="#ebebeb" transform="rotate(0 521.0 420.2)"/>
<rect x="539.5" y="396.5" width="19.9" height="12.3" fill="#dfdfdf" transform="rotate(0 549.5 402.6)"/>
<rect x="539.5" y="395.4" width="19.9" height="12.3" fill="#ebebeb" transform="rotate(0 549.5 401.5)"/>
<rect x="547.8" y="416.6" width="13.8" height="13.8" fill="#dfdfdf" transform="rotate(5 554.7 423.5)"/>
<rect x="547.8" y="415.5" width="13.8" height="13.8" fill="#ebebeb" transform="rotate(5 554.7 422.4)"/>
<rect x="547.7" y="438.8" width="12.3" height="15.3" fill="#dfdfdf" transform="rotate(5 553.8 446.5)"/>
<rect x="547.7" y="437.7" width="12.3" height="15.3" fill="#ebebeb" transform="rotate(5 553.8 445.4)"/>
<rect x="429.2" y="410.0" width="19.9" height="11.7" fill="#dfdfdf" transform="rotate(-25 439.1 415.8)"/>
<rect x="429.2" y="408.9" width="19.9" height="11.7" fill="#ebebeb" transform="rotate(-25 439.1 414.7)"/>
<rect x="392.2" y="442.7" width="21.5" height="13.8" fill="#dfdfdf" transform="rotate(-5 402.9 449.6)"/>
<rect x="392.2" y="441.6" width="21.5" height="13.8" fill="#ebebeb" transform="rotate(-5 402.9 448.5)"/>
<rect x="747.2" y="229.5" width="6.7" height="10.7" fill="#dfdfdf" transform="rotate(5 750.6 234.9)"/>
<rect x="747.2" y="228.4" width="6.7" height="10.7" fill="#ebebeb" transform="rotate(5 750.6 233.8)"/>
<rect x="762.7" y="225.9" width="16.9" height="19.9" fill="#dfdfdf" transform="rotate(5 771.1 235.8)"/>
<rect x="762.7" y="224.8" width="16.9" height="19.9" fill="#ebebeb" transform="rotate(5 771.1 234.7)"/>
<rect x="777.9" y="235.7" width="6.7" height="7.7" fill="#dfdfdf" transform="rotate(5 781.3 239.5)"/>
<rect x="777.9" y="234.6" width="6.7" height="7.7" fill="#ebebeb" transform="rotate(5 781.3 238.4)"/>
<rect x="812.7" y="236.4" width="7.7" height="12.3" fill="#dfdfdf" transform="rotate(5 816.5 242.6)"/>
<rect x="812.7" y="235.3" width="7.7" height="12.3" fill="#ebebeb" transform="rotate(5 816.5 241.5)"/>
<rect x="796.6" y="250.2" width="12.3" height="12.3" fill="#dfdfdf" transform="rotate(5 802.7 256.4)"/>
<rect x="796.6" y="249.1" width="12.3" height="12.3" fill="#ebebeb" transform="rotate(5 802.7 255.3)"/>
<rect x="769.6" y="255.8" width="6.7" height="9.2" fill="#dfdfdf" transform="rotate(5 773.0 260.4)"/>
<rect x="769.6" y="254.7" width="6.7" height="9.2" fill="#ebebeb" transform="rotate(5 773.0 259.3)"/>
<rect x="775.7" y="261.0" width="9.2" height="12.3" fill="#dfdfdf" transform="rotate(10 780.3 267.1)"/>
<rect x="775.7" y="259.9" width="9.2" height="12.3" fill="#ebebeb" transform="rotate(10 780.3 266.0)"/>
<rect x="814.2" y="261.7" width="7.7" height="10.7" fill="#dfdfdf" transform="rotate(5 818.1 267.1)"/>
<rect x="814.2" y="260.6" width="7.7" height="10.7" fill="#ebebeb" transform="rotate(5 818.1 266.0)"/>
<rect x="829.7" y="253.3" width="8.6" height="9.2" fill="#dfdfdf" transform="rotate(10 834.0 257.9)"/>
<rect x="829.7" y="252.2" width="8.6" height="9.2" fill="#ebebeb" transform="rotate(10 834.0 256.8)"/>
<rect x="837.8" y="256.4" width="7.7" height="9.2" fill="#dfdfdf" transform="rotate(10 841.7 261.0)"/>
<rect x="837.8" y="255.3" width="7.7" height="9.2" fill="#ebebeb" transform="rotate(10 841.7 259.9)"/>
<rect x="744.5" y="259.4" width="12.3" height="15.3" fill="#dfdfdf" transform="rotate(-20 750.6 267.1)"/>
<rect x="744.5" y="258.3" width="12.3" height="15.3" fill="#ebebeb" transform="rotate(-20 750.6 266.0)"/>
<rect x="853.3" y="263.3" width="12.3" height="10.7" fill="#dfdfdf" transform="rotate(20 859.5 268.6)"/>
<rect x="853.3" y="262.2" width="12.3" height="10.7" fill="#ebebeb" transform="rotate(20 859.5 267.5)"/>
<rect x="896.3" y="219.6" width="12.3" height="12.3" fill="#dfdfdf" transform="rotate(20 902.4 225.7)"/>
<rect x="896.3" y="218.5" width="12.3" height="12.3" fill="#ebebeb" transform="rotate(20 902.4 224.6)"/>
<rect x="907.0" y="253.3" width="12.3" height="15.3" fill="#dfdfdf" transform="rotate(20 913.1 261.0)"/>
<rect x="907.0" y="252.2" width="12.3" height="15.3" fill="#ebebeb" transform="rotate(20 913.1 259.9)"/>
<rect x="904.7" y="270.2" width="10.7" height="12.3" fill="#dfdfdf" transform="rotate(20 910.1 276.3)"/>
<rect x="904.7" y="269.1" width="10.7" height="12.3" fill="#ebebeb" transform="rotate(20 910.1 275.2)"/>
<rect x="971.5" y="223.4" width="13.8" height="19.9" fill="#dfdfdf" transform="rotate(15 978.4 233.4)"/>
<rect x="971.5" y="222.3" width="13.8" height="19.9" fill="#ebebeb" transform="rotate(15 978.4 232.3)"/>
<rect x="1008.2" y="252.5" width="15.3" height="16.9" fill="#dfdfdf" transform="rotate(15 1015.9 261.0)"/>
<rect x="1008.2" y="251.4" width="15.3" height="16.9" fill="#ebebeb" transform="rotate(15 1015.9 259.9)"/>
<rect x="959.9" y="279.4" width="16.9" height="15.3" fill="#dfdfdf" transform="rotate(5 968.3 287.0)"/>
<rect x="959.9" y="278.3" width="16.9" height="15.3" fill="#ebebeb" transform="rotate(5 968.3 285.9)"/>
<rect x="987.5" y="293.2" width="26.1" height="33.7" fill="#dfdfdf" transform="rotate(20 1000.5 310.0)"/>
<rect x="987.5" y="292.1" width="26.1" height="33.7" fill="#ebebeb" transform="rotate(20 1000.5 308.9)"/>
<rect x="972.9" y="319.2" width="21.5" height="24.5" fill="#dfdfdf" transform="rotate(20 983.7 331.5)"/>
<rect x="972.9" y="318.1" width="21.5" height="24.5" fill="#ebebeb" transform="rotate(20 983.7 330.4)"/>
<rect x="972.9" y="336.1" width="15.3" height="12.3" fill="#dfdfdf" transform="rotate(20 980.6 342.2)"/>
<rect x="972.9" y="335.0" width="15.3" height="12.3" fill="#ebebeb" transform="rotate(20 980.6 341.1)"/>
<rect x="752.1" y="284.0" width="12.3" height="15.3" fill="#dfdfdf" transform="rotate(-20 758.3 291.6)"/>
<rect x="752.1" y="282.9" width="12.3" height="15.3" fill="#ebebeb" transform="rotate(-20 758.3 290.5)"/>
<rect x="833.4" y="289.3" width="12.3" height="13.8" fill="#dfdfdf" transform="rotate(10 839.5 296.2)"/>
<rect x="833.4" y="288.2" width="12.3" height="13.8" fill="#ebebeb" transform="rotate(10 839.5 295.1)"/>
<rect x="857.2" y="297.0" width="13.8" height="13.8" fill="#dfdfdf" transform="rotate(40 864.1 303.9)"/>
<rect x="857.2" y="295.9" width="13.8" height="13.8" fill="#ebebeb" transform="rotate(40 864.1 302.8)"/>
<rect x="888.6" y="287.0" width="21.5" height="15.3" fill="#dfdfdf" transform="rotate(30 899.3 294.7)"/>
<rect x="888.6" y="285.9" width="21.5" height="15.3" fill="#ebebeb" transform="rotate(30 899.3 293.6)"/>
<rect x="811.2" y="287.0" width="10.7" height="18.4" fill="#dfdfdf" transform="rotate(0 816.5 296.2)"/>
<rect x="811.2" y="285.9" width="10.7" height="18.4" fill="#ebebeb" transform="rotate(0 816.5 295.1)"/>
<rect x="802.0" y="315.4" width="10.7" height="10.7" fill="#dfdfdf" transform="rotate(5 807.3 320.8)"/>
<rect x="802.0" y="314.3" width="10.7" height="10.7" fill="#ebebeb" transform="rotate(5 807.3 319.7)"/>
<rect x="821.9" y="318.5" width="13.8" height="10.7" fill="#dfdfdf" transform="rotate(15 828.8 323.8)"/>
<rect x="821.9" y="317.4" width="13.8" height="10.7" fill="#ebebeb" transform="rotate(15 828.8 322.7)"/>
<rect x="841.8" y="324.6" width="13.8" height="10.7" fill="#dfdfdf" transform="rotate(15 848.7 330.0)"/>
<rect x="841.8" y="323.5" width="13.8" height="10.7" fill="#ebebeb" transform="rotate(15 848.7 328.9)"/>
<rect x="877.9" y="311.6" width="18.4" height="12.3" fill="#dfdfdf" transform="rotate(25 887.1 317.7)"/>
<rect x="877.9" y="310.5" width="18.4" height="12.3" fill="#ebebeb" transform="rotate(25 887.1 316.6)"/>
<rect x="867.9" y="333.0" width="19.9" height="12.3" fill="#dfdfdf" transform="rotate(20 877.9 339.2)"/>
<rect x="867.9" y="331.9" width="19.9" height="12.3" fill="#ebebeb" transform="rotate(20 877.9 338.1)"/>
<rect x="855.6" y="352.2" width="19.9" height="13.8" fill="#dfdfdf" transform="rotate(20 865.6 359.1)"/>
<rect x="855.6" y="351.1" width="19.9" height="13.8" fill="#ebebeb" transform="rotate(20 865.6 358.0)"/>
<rect x="788.9" y="348.4" width="33.7" height="15.3" fill="#dfdfdf" transform="rotate(25 805.8 356.0)"/>
<rect x="788.9" y="347.3" width="33.7" height="15.3" fill="#ebebeb" transform="rotate(25 805.8 354.9)"/>
<rect x="821.1" y="365.2" width="27.6" height="15.3" fill="#dfdfdf" transform="rotate(25 834.9 372.9)"/>
<rect x="821.1" y="364.1" width="27.6" height="15.3" fill="#ebebeb" transform="rotate(25 834.9 371.8)"/>
<rect x="816.5" y="376.0" width="21.5" height="12.3" fill="#dfdfdf" transform="rotate(20 827.3 382.1)"/>
<rect x="816.5" y="374.9" width="21.5" height="12.3" fill="#ebebeb" transform="rotate(20 827.3 381.0)"/>
<rect x="842.6" y="362.9" width="21.5" height="7.7" fill="#dfdfdf" transform="rotate(25 853.3 366.8)"/>
<rect x="842.6" y="361.8" width="21.5" height="7.7" fill="#ebebeb" transform="rotate(25 853.3 365.7)"/>
<rect x="761.3" y="337.8" width="12.3" height="16.9" fill="#dfdfdf" transform="rotate(10 767.5 346.2)"/>
<rect x="761.3" y="336.7" width="12.3" height="16.9" fill="#ebebeb" transform="rotate(10 767.5 345.1)"/>
<rect x="752.9" y="376.0" width="16.9" height="27.6" fill="#dfdfdf" transform="rotate(0 761.3 389.8)"/>
<rect x="752.9" y="374.9" width="16.9" height="27.6" fill="#ebebeb" transform="rotate(0 761.3 388.7)"/>
<rect x="785.1" y="380.6" width="23.0" height="15.3" fill="#dfdfdf" transform="rotate(30 796.6 388.2)"/>
<rect x="785.1" y="379.5" width="23.0" height="15.3" fill="#ebebeb" transform="rotate(30 796.6 387.1)"/>
<rect x="802.0" y="395.1" width="23.0" height="13.8" fill="#dfdfdf" transform="rotate(30 813.5 402.0)"/>
<rect x="802.0" y="394.0" width="23.0" height="13.8" fill="#ebebeb" transform="rotate(30 813.5 400.9)"/>
<rect x="759.0" y="412.8" width="10.7" height="12.3" fill="#dfdfdf" transform="rotate(-20 764.4 418.9)"/>
<rect x="759.0" y="411.7" width="10.7" height="12.3" fill="#ebebeb" transform="rotate(-20 764.4 417.8)"/>
<rect x="779.7" y="429.6" width="18.4" height="15.3" fill="#dfdfdf" transform="rotate(15 788.9 437.3)"/>
<rect x="779.7" y="428.5" width="18.4" height="15.3" fill="#ebebeb" transform="rotate(15 788.9 436.2)"/>
<rect x="739.1" y="439.6" width="13.8" height="13.8" fill="#dfdfdf" transform="rotate(0 746.0 446.5)"/>
<rect x="739.1" y="438.5" width="13.8" height="13.8" fill="#ebebeb" transform="rotate(0 746.0 445.4)"/>
<rect x="773.6" y="443.4" width="18.4" height="15.3" fill="#dfdfdf" transform="rotate(15 782.8 451.1)"/>
<rect x="773.6" y="442.3" width="18.4" height="15.3" fill="#ebebeb" transform="rotate(15 782.8 450.0)"/>
<rect x="885.5" y="377.5" width="6.1" height="6.1" fill="#dfdfdf" transform="rotate(20 888.6 380.6)"/>
<rect x="885.5" y="376.4" width="6.1" height="6.1" fill="#ebebeb" transform="rotate(20 888.6 379.5)"/>
<rect x="-0.8" y="422.7" width="7.7" height="7.7" fill="#dfdfdf" transform="rotate(20 3.1 426.5)"/>
<rect x="-0.8" y="421.6" width="7.7" height="7.7" fill="#ebebeb" transform="rotate(20 3.1 425.4)"/>
<rect x="107.6" y="438.6" width="11.7" height="10.7" fill="#dfdfdf" transform="rotate(-30 113.5 444.0)"/>
<rect x="107.6" y="437.5" width="11.7" height="10.7" fill="#ebebeb" transform="rotate(-30 113.5 442.9)"/>
<rect x="154.7" y="424.2" width="13.8" height="13.8" fill="#dfdfdf" transform="rotate(-30 161.6 431.1)"/>
<rect x="154.7" y="423.1" width="13.8" height="13.8" fill="#ebebeb" transform="rotate(-30 161.6 430.0)"/>
<rect x="90.5" y="459.1" width="12.3" height="19.9" fill="#dfdfdf" transform="rotate(10 96.6 469.1)"/>
<rect x="90.5" y="458.0" width="12.3" height="19.9" fill="#ebebeb" transform="rotate(10 96.6 468.0)"/>
<rect x="102.0" y="467.7" width="10.7" height="13.8" fill="#dfdfdf" transform="rotate(30 107.3 474.6)"/>
<rect x="102.0" y="466.6" width="10.7" height="13.8" fill="#ebebeb" transform="rotate(30 107.3 473.5)"/>
<rect x="84.5" y="489.3" width="7.7" height="9.2" fill="#dfdfdf" transform="rotate(30 88.3 493.9)"/>
<rect x="84.5" y="488.2" width="7.7" height="9.2" fill="#ebebeb" transform="rotate(30 88.3 492.8)"/>
<rect x="66.1" y="495.2" width="7.7" height="12.3" fill="#dfdfdf" transform="rotate(15 69.9 501.3)"/>
<rect x="66.1" y="494.1" width="7.7" height="12.3" fill="#ebebeb" transform="rotate(15 69.9 500.2)"/>
<rect x="80.0" y="505.3" width="6.7" height="9.2" fill="#dfdfdf" transform="rotate(20 83.4 509.9)"/>
<rect x="80.0" y="504.2" width="6.7" height="9.2" fill="#ebebeb" transform="rotate(20 83.4 508.8)"/>
<rect x="60.6" y="511.4" width="7.7" height="12.3" fill="#dfdfdf" transform="rotate(15 64.4 517.6)"/>
<rect x="60.6" y="510.3" width="7.7" height="12.3" fill="#ebebeb" transform="rotate(15 64.4 516.5)"/>
<rect x="71.3" y="526.6" width="7.7" height="7.7" fill="#dfdfdf" transform="rotate(20 75.1 530.4)"/>
<rect x="71.3" y="525.5" width="7.7" height="7.7" fill="#ebebeb" transform="rotate(20 75.1 529.3)"/>
<rect x="117.4" y="484.7" width="12.3" height="12.3" fill="#dfdfdf" transform="rotate(-35 123.6 490.9)"/>
<rect x="117.4" y="483.6" width="12.3" height="12.3" fill="#ebebeb" transform="rotate(-35 123.6 489.8)"/>
<rect x="128.8" y="499.2" width="12.3" height="12.3" fill="#dfdfdf" transform="rotate(-35 134.9 505.3)"/>
<rect x="128.8" y="498.1" width="12.3" height="12.3" fill="#ebebeb" transform="rotate(-35 134.9 504.2)"/>
<rect x="106.6" y="516.0" width="10.7" height="12.3" fill="#dfdfdf" transform="rotate(-35 111.9 522.2)"/>
<rect x="106.6" y="514.9" width="10.7" height="12.3" fill="#ebebeb" transform="rotate(-35 111.9 521.1)"/>
<rect x="144.9" y="461.0" width="16.9" height="16.9" fill="#dfdfdf" transform="rotate(-30 153.3 469.4)"/>
<rect x="144.9" y="459.9" width="16.9" height="16.9" fill="#ebebeb" transform="rotate(-30 153.3 468.3)"/>
<rect x="168.0" y="446.3" width="12.3" height="10.7" fill="#dfdfdf" transform="rotate(-20 174.2 451.6)"/>
<rect x="168.0" y="445.2" width="12.3" height="10.7" fill="#ebebeb" transform="rotate(-20 174.2 450.5)"/>
<rect x="185.5" y="431.7" width="15.3" height="15.3" fill="#dfdfdf" transform="rotate(-30 193.2 439.4)"/>
<rect x="185.5" y="430.6" width="15.3" height="15.3" fill="#ebebeb" transform="rotate(-30 193.2 438.3)"/>
<rect x="203.2" y="446.4" width="19.9" height="18.4" fill="#dfdfdf" transform="rotate(-30 213.1 455.6)"/>
<rect x="203.2" y="445.3" width="19.9" height="18.4" fill="#ebebeb" transform="rotate(-30 213.1 454.5)"/>
<rect x="230.0" y="437.2" width="12.3" height="12.3" fill="#dfdfdf" transform="rotate(-10 236.1 443.4)"/>
<rect x="230.0" y="436.1" width="12.3" height="12.3" fill="#ebebeb" transform="rotate(-10 236.1 442.3)"/>
<rect x="242.9" y="430.2" width="12.3" height="12.3" fill="#dfdfdf" transform="rotate(-10 249.0 436.3)"/>
<rect x="242.9" y="429.1" width="12.3" height="12.3" fill="#ebebeb" transform="rotate(-10 249.0 435.2)"/>
<rect x="199.3" y="399.8" width="15.3" height="11.7" fill="#dfdfdf" transform="rotate(-5 207.0 405.6)"/>
<rect x="199.3" y="398.7" width="15.3" height="11.7" fill="#ebebeb" transform="rotate(-5 207.0 404.5)"/>
<rect x="229.2" y="393.4" width="13.8" height="9.2" fill="#dfdfdf" transform="rotate(-10 236.1 398.0)"/>
<rect x="229.2" y="392.3" width="13.8" height="9.2" fill="#ebebeb" transform="rotate(-10 236.1 396.9)"/>
<rect x="240.9" y="408.1" width="10.7" height="12.3" fill="#dfdfdf" transform="rotate(-5 246.2 414.2)"/>
<rect x="240.9" y="407.0" width="10.7" height="12.3" fill="#ebebeb" transform="rotate(-5 246.2 413.1)"/>
<rect x="229.4" y="474.6" width="18.4" height="12.3" fill="#dfdfdf" transform="rotate(-15 238.6 480.8)"/>
<rect x="229.4" y="473.5" width="18.4" height="12.3" fill="#ebebeb" transform="rotate(-15 238.6 479.7)"/>
<rect x="204.5" y="487.8" width="15.3" height="12.3" fill="#dfdfdf" transform="rotate(-40 212.2 493.9)"/>
<rect x="204.5" y="486.7" width="15.3" height="12.3" fill="#ebebeb" transform="rotate(-40 212.2 492.8)"/>
<rect x="178.6" y="510.5" width="10.7" height="12.3" fill="#dfdfdf" transform="rotate(20 184.0 516.6)"/>
<rect x="178.6" y="509.4" width="10.7" height="12.3" fill="#ebebeb" transform="rotate(20 184.0 515.5)"/>
<rect x="289.8" y="488.3" width="9.2" height="7.7" fill="#dfdfdf" transform="rotate(30 294.4 492.1)"/>
<rect x="289.8" y="487.2" width="9.2" height="7.7" fill="#ebebeb" transform="rotate(30 294.4 491.0)"/>
<rect x="86.0" y="552.1" width="10.7" height="16.9" fill="#dfdfdf" transform="rotate(10 91.4 560.5)"/>
<rect x="86.0" y="551.0" width="10.7" height="16.9" fill="#ebebeb" transform="rotate(10 91.4 559.4)"/>
<rect x="56.0" y="591.9" width="10.7" height="16.9" fill="#dfdfdf" transform="rotate(5 61.3 600.4)"/>
<rect x="56.0" y="590.8" width="10.7" height="16.9" fill="#ebebeb" transform="rotate(5 61.3 599.3)"/>
<rect x="92.1" y="587.2" width="10.7" height="24.5" fill="#dfdfdf" transform="rotate(10 97.5 599.4)"/>
<rect x="92.1" y="586.1" width="10.7" height="24.5" fill="#ebebeb" transform="rotate(10 97.5 598.3)"/>
<rect x="280.6" y="513.7" width="30.7" height="13.8" fill="#dfdfdf" transform="rotate(-20 295.9 520.6)"/>
<rect x="280.6" y="512.6" width="30.7" height="13.8" fill="#ebebeb" transform="rotate(-20 295.9 519.5)"/>
<rect x="307.4" y="503.8" width="16.9" height="15.3" fill="#dfdfdf" transform="rotate(-20 315.9 511.4)"/>
<rect x="307.4" y="502.7" width="16.9" height="15.3" fill="#ebebeb" transform="rotate(-20 315.9 510.3)"/>
<rect x="343.5" y="490.3" width="18.4" height="22.1" fill="#dfdfdf" transform="rotate(0 352.7 501.3)"/>
<rect x="343.5" y="489.2" width="18.4" height="22.1" fill="#ebebeb" transform="rotate(0 352.7 500.2)"/>
<rect x="300.5" y="534.7" width="18.4" height="8.6" fill="#dfdfdf" transform="rotate(-5 309.7 539.0)"/>
<rect x="300.5" y="533.6" width="18.4" height="8.6" fill="#ebebeb" transform="rotate(-5 309.7 537.9)"/>
<rect x="304.4" y="547.3" width="19.9" height="12.3" fill="#dfdfdf" transform="rotate(-5 314.3 553.4)"/>
<rect x="304.4" y="546.2" width="19.9" height="12.3" fill="#ebebeb" transform="rotate(-5 314.3 552.3)"/>
<rect x="335.6" y="434.0" width="10.7" height="7.7" fill="#dfdfdf" transform="rotate(-25 341.0 437.8)"/>
<rect x="335.6" y="432.9" width="10.7" height="7.7" fill="#ebebeb" transform="rotate(-25 341.0 436.7)"/>
<rect x="351.4" y="456.8" width="8.6" height="9.2" fill="#dfdfdf" transform="rotate(0 355.7 461.4)"/>
<rect x="351.4" y="455.7" width="8.6" height="9.2" fill="#ebebeb" transform="rotate(0 355.7 460.3)"/>
<rect x="-1.5" y="512.2" width="3.1" height="10.7" fill="#dfdfdf" transform="rotate(0 0.0 517.6)"/>
<rect x="-1.5" y="511.1" width="3.1" height="10.7" fill="#ebebeb" transform="rotate(0 0.0 516.5)"/>
<rect x="428.8" y="408.8" width="21.5" height="12.3" fill="#dfdfdf" transform="rotate(-25 439.5 414.9)"/>
<rect x="428.8" y="407.7" width="21.5" height="12.3" fill="#ebebeb" transform="rotate(-25 439.5 413.8)"/>
<rect x="484.0" y="401.7" width="9.2" height="12.3" fill="#dfdfdf" transform="rotate(10 488.6 407.8)"/>
<rect x="484.0" y="400.6" width="9.2" height="12.3" fill="#ebebeb" transform="rotate(10 488.6 406.7)"/>
<rect x="512.2" y="401.1" width="12.3" height="9.2" fill="#dfdfdf" transform="rotate(0 518.3 405.7)"/>
<rect x="512.2" y="400.0" width="12.3" height="9.2" fill="#ebebeb" transform="rotate(0 518.3 404.6)"/>
<rect x="511.6" y="416.4" width="18.4" height="9.2" fill="#dfdfdf" transform="rotate(0 520.8 421.0)"/>
<rect x="511.6" y="415.3" width="18.4" height="9.2" fill="#ebebeb" transform="rotate(0 520.8 419.9)"/>
<rect x="545.3" y="401.9" width="12.3" height="7.7" fill="#dfdfdf" transform="rotate(0 551.5 405.7)"/>
<rect x="545.3" y="400.8" width="12.3" height="7.7" fill="#ebebeb" transform="rotate(0 551.5 404.6)"/>
<rect x="548.4" y="416.4" width="12.3" height="12.3" fill="#dfdfdf" transform="rotate(5 554.5 422.6)"/>
<rect x="548.4" y="415.3" width="12.3" height="12.3" fill="#ebebeb" transform="rotate(5 554.5 421.5)"/>
<rect x="549.3" y="439.4" width="9.2" height="12.3" fill="#dfdfdf" transform="rotate(5 553.9 445.6)"/>
<rect x="549.3" y="438.3" width="9.2" height="12.3" fill="#ebebeb" transform="rotate(5 553.9 444.5)"/>
<rect x="545.3" y="462.4" width="9.2" height="15.3" fill="#dfdfdf" transform="rotate(10 549.9 470.1)"/>
<rect x="545.3" y="461.3" width="9.2" height="15.3" fill="#ebebeb" transform="rotate(10 549.9 469.0)"/>
<rect x="537.7" y="491.6" width="12.3" height="15.3" fill="#dfdfdf" transform="rotate(10 543.8 499.2)"/>
<rect x="537.7" y="490.5" width="12.3" height="15.3" fill="#ebebeb" transform="rotate(10 543.8 498.1)"/>
<rect x="545.3" y="519.2" width="15.3" height="12.3" fill="#dfdfdf" transform="rotate(20 553.0 525.3)"/>
<rect x="545.3" y="518.1" width="15.3" height="12.3" fill="#ebebeb" transform="rotate(20 553.0 524.2)"/>
<rect x="554.5" y="540.6" width="12.3" height="15.3" fill="#dfdfdf" transform="rotate(15 560.7 548.3)"/>
<rect x="554.5" y="539.5" width="12.3" height="15.3" fill="#ebebeb" transform="rotate(15 560.7 547.2)"/>
<rect x="563.7" y="560.6" width="12.3" height="12.3" fill="#dfdfdf" transform="rotate(30 569.9 566.7)"/>
<rect x="563.7" y="559.5" width="12.3" height="12.3" fill="#ebebeb" transform="rotate(30 569.9 565.6)"/>
<rect x="334.5" y="433.3" width="10.7" height="9.2" fill="#dfdfdf" transform="rotate(0 339.9 437.9)"/>
<rect x="334.5" y="432.2" width="10.7" height="9.2" fill="#ebebeb" transform="rotate(0 339.9 436.8)"/>
<rect x="357.5" y="437.1" width="10.7" height="13.8" fill="#dfdfdf" transform="rotate(30 362.9 444.0)"/>
<rect x="357.5" y="436.0" width="10.7" height="13.8" fill="#ebebeb" transform="rotate(30 362.9 442.9)"/>
<rect x="350.6" y="455.5" width="21.5" height="10.7" fill="#dfdfdf" transform="rotate(-15 361.3 460.9)"/>
<rect x="350.6" y="454.4" width="21.5" height="10.7" fill="#ebebeb" transform="rotate(-15 361.3 459.8)"/>
<rect x="393.5" y="444.0" width="27.6" height="15.3" fill="#dfdfdf" transform="rotate(15 407.3 451.7)"/>
<rect x="393.5" y="442.9" width="27.6" height="15.3" fill="#ebebeb" transform="rotate(15 407.3 450.6)"/>
<rect x="343.7" y="487.0" width="23.0" height="24.5" fill="#dfdfdf" transform="rotate(0 355.2 499.2)"/>
<rect x="343.7" y="485.9" width="23.0" height="24.5" fill="#ebebeb" transform="rotate(0 355.2 498.1)"/>
<rect x="364.4" y="483.9" width="18.4" height="21.5" fill="#dfdfdf" transform="rotate(0 373.6 494.6)"/>
<rect x="364.4" y="482.8" width="18.4" height="21.5" fill="#ebebeb" transform="rotate(0 373.6 493.5)"/>
<rect x="375.9" y="474.7" width="26.1" height="27.6" fill="#dfdfdf" transform="rotate(0 388.9 488.5)"/>
<rect x="375.9" y="473.6" width="26.1" height="27.6" fill="#ebebeb" transform="rotate(0 388.9 487.4)"/>
<rect x="399.7" y="485.4" width="15.3" height="15.3" fill="#dfdfdf" transform="rotate(0 407.3 493.1)"/>
<rect x="399.7" y="484.3" width="15.3" height="15.3" fill="#ebebeb" transform="rotate(0 407.3 492.0)"/>
<rect x="415.0" y="485.4" width="21.5" height="18.4" fill="#dfdfdf" transform="rotate(0 425.7 494.6)"/>
<rect x="415.0" y="484.3" width="21.5" height="18.4" fill="#ebebeb" transform="rotate(0 425.7 493.5)"/>
<rect x="310.0" y="504.6" width="16.9" height="16.9" fill="#dfdfdf" transform="rotate(-30 318.4 513.0)"/>
<rect x="310.0" y="503.5" width="16.9" height="16.9" fill="#ebebeb" transform="rotate(-30 318.4 511.9)"/>
<rect x="300.0" y="511.5" width="6.1" height="9.2" fill="#dfdfdf" transform="rotate(0 303.1 516.1)"/>
<rect x="300.0" y="510.4" width="6.1" height="9.2" fill="#ebebeb" transform="rotate(0 303.1 515.0)"/>
<rect x="361.3" y="524.5" width="24.5" height="13.8" fill="#dfdfdf" transform="rotate(0 373.6 531.4)"/>
<rect x="361.3" y="523.4" width="24.5" height="13.8" fill="#ebebeb" transform="rotate(0 373.6 530.3)"/>
<rect x="384.3" y="522.2" width="9.2" height="12.3" fill="#dfdfdf" transform="rotate(0 388.9 528.4)"/>
<rect x="384.3" y="521.1" width="9.2" height="12.3" fill="#ebebeb" transform="rotate(0 388.9 527.3)"/>
<rect x="391.2" y="519.2" width="10.7" height="6.1" fill="#dfdfdf" transform="rotate(0 396.6 522.2)"/>
<rect x="391.2" y="518.1" width="10.7" height="6.1" fill="#ebebeb" transform="rotate(0 396.6 521.1)"/>
<rect x="411.2" y="519.3" width="19.9" height="13.8" fill="#dfdfdf" transform="rotate(5 421.1 526.2)"/>
<rect x="411.2" y="518.2" width="19.9" height="13.8" fill="#ebebeb" transform="rotate(5 421.1 525.1)"/>
<rect x="301.5" y="533.7" width="21.5" height="10.7" fill="#dfdfdf" transform="rotate(0 312.3 539.1)"/>
<rect x="301.5" y="532.6" width="21.5" height="10.7" fill="#ebebeb" transform="rotate(0 312.3 538.0)"/>
<rect x="303.8" y="546.8" width="19.9" height="12.3" fill="#dfdfdf" transform="rotate(0 313.8 552.9)"/>
<rect x="303.8" y="545.7" width="19.9" height="12.3" fill="#ebebeb" transform="rotate(0 313.8 551.8)"/>
<rect x="480.8" y="512.3" width="13.8" height="16.9" fill="#dfdfdf" transform="rotate(-25 487.7 520.7)"/>
<rect x="480.8" y="511.2" width="13.8" height="16.9" fill="#ebebeb" transform="rotate(-25 487.7 519.6)"/>
<rect x="506.2" y="500.9" width="10.7" height="13.8" fill="#dfdfdf" transform="rotate(-15 511.6 507.8)"/>
<rect x="506.2" y="499.8" width="10.7" height="13.8" fill="#ebebeb" transform="rotate(-15 511.6 506.7)"/>
<rect x="519.3" y="515.3" width="12.3" height="19.9" fill="#dfdfdf" transform="rotate(-20 525.4 525.3)"/>
<rect x="519.3" y="514.2" width="12.3" height="19.9" fill="#ebebeb" transform="rotate(-20 525.4 524.2)"/>
<rect x="527.7" y="536.8" width="13.8" height="19.9" fill="#dfdfdf" transform="rotate(-20 534.6 546.8)"/>
<rect x="527.7" y="535.7" width="13.8" height="19.9" fill="#ebebeb" transform="rotate(-20 534.6 545.7)"/>
<rect x="500.1" y="549.1" width="16.9" height="23.0" fill="#dfdfdf" transform="rotate(-20 508.5 560.6)"/>
<rect x="500.1" y="548.0" width="16.9" height="23.0" fill="#ebebeb" transform="rotate(-20 508.5 559.5)"/>
<rect x="472.6" y="569.8" width="15.3" height="24.5" fill="#dfdfdf" transform="rotate(-15 480.3 582.0)"/>
<rect x="472.6" y="568.7" width="15.3" height="24.5" fill="#ebebeb" transform="rotate(-15 480.3 580.9)"/>
<rect x="477.9" y="602.0" width="18.4" height="24.5" fill="#dfdfdf" transform="rotate(-25 487.1 614.2)"/>
<rect x="477.9" y="600.9" width="18.4" height="24.5" fill="#ebebeb" transform="rotate(-25 487.1 613.1)"/>
<rect x="508.5" y="592.8" width="18.4" height="21.5" fill="#dfdfdf" transform="rotate(-30 517.7 603.5)"/>
<rect x="508.5" y="591.7" width="18.4" height="21.5" fill="#ebebeb" transform="rotate(-30 517.7 602.4)"/>
<rect x="542.3" y="577.4" width="18.4" height="15.3" fill="#dfdfdf" transform="rotate(30 551.5 585.1)"/>
<rect x="542.3" y="576.3" width="18.4" height="15.3" fill="#ebebeb" transform="rotate(30 551.5 584.0)"/>
<rect x="557.6" y="585.1" width="9.2" height="12.3" fill="#dfdfdf" transform="rotate(30 562.2 591.2)"/>
<rect x="557.6" y="584.0" width="9.2" height="12.3" fill="#ebebeb" transform="rotate(30 562.2 590.1)"/>
<rect x="526.9" y="621.9" width="18.4" height="18.4" fill="#dfdfdf" transform="rotate(-30 536.1 631.1)"/>
<rect x="526.9" y="620.8" width="18.4" height="18.4" fill="#ebebeb" transform="rotate(-30 536.1 630.0)"/>
<rect x="554.5" y="620.4" width="15.3" height="15.3" fill="#dfdfdf" transform="rotate(-30 562.2 628.0)"/>
<rect x="554.5" y="619.3" width="15.3" height="15.3" fill="#ebebeb" transform="rotate(-30 562.2 626.9)"/>
<rect x="582.1" y="603.5" width="12.3" height="12.3" fill="#dfdfdf" transform="rotate(30 588.3 609.6)"/>
<rect x="582.1" y="602.4" width="12.3" height="12.3" fill="#ebebeb" transform="rotate(30 588.3 608.5)"/>
<rect x="597.5" y="614.2" width="15.3" height="15.3" fill="#dfdfdf" transform="rotate(30 605.1 621.9)"/>
<rect x="597.5" y="613.1" width="15.3" height="15.3" fill="#ebebeb" transform="rotate(30 605.1 620.8)"/>
<rect x="600.5" y="583.6" width="12.3" height="9.2" fill="#dfdfdf" transform="rotate(-30 606.7 588.2)"/>
<rect x="600.5" y="582.5" width="12.3" height="9.2" fill="#ebebeb" transform="rotate(-30 606.7 587.1)"/>
<rect x="636.6" y="606.6" width="13.8" height="12.3" fill="#dfdfdf" transform="rotate(5 643.5 612.7)"/>
<rect x="636.6" y="605.5" width="13.8" height="12.3" fill="#ebebeb" transform="rotate(5 643.5 611.6)"/>
<rect x="621.2" y="593.5" width="7.7" height="7.7" fill="#dfdfdf" transform="rotate(0 625.1 597.4)"/>
<rect x="621.2" y="592.4" width="7.7" height="7.7" fill="#ebebeb" transform="rotate(0 625.1 596.3)"/>
<rect x="581.4" y="613.5" width="4.6" height="4.6" fill="#dfdfdf" transform="rotate(0 583.7 615.8)"/>
<rect x="581.4" y="612.4" width="4.6" height="4.6" fill="#ebebeb" transform="rotate(0 583.7 614.7)"/>
<rect x="86.0" y="551.0" width="10.7" height="16.9" fill="#dfdfdf" transform="rotate(10 91.4 559.4)"/>
<rect x="86.0" y="549.9" width="10.7" height="16.9" fill="#ebebeb" transform="rotate(10 91.4 558.3)"/>
<rect x="56.0" y="591.5" width="10.7" height="16.9" fill="#dfdfdf" transform="rotate(5 61.3 599.9)"/>
<rect x="56.0" y="590.4" width="10.7" height="16.9" fill="#ebebeb" transform="rotate(5 61.3 598.8)"/>
<rect x="92.1" y="587.0" width="10.7" height="24.5" fill="#dfdfdf" transform="rotate(10 97.5 599.3)"/>
<rect x="92.1" y="585.9" width="10.7" height="24.5" fill="#ebebeb" transform="rotate(10 97.5 598.2)"/>
<rect x="50.6" y="621.7" width="9.2" height="18.4" fill="#dfdfdf" transform="rotate(5 55.2 630.9)"/>
<rect x="50.6" y="620.6" width="9.2" height="18.4" fill="#ebebeb" transform="rotate(5 55.2 629.8)"/>
<rect x="87.4" y="678.4" width="12.3" height="12.3" fill="#dfdfdf" transform="rotate(-40 93.5 684.5)"/>
<rect x="87.4" y="677.3" width="12.3" height="12.3" fill="#ebebeb" transform="rotate(-40 93.5 683.4)"/>
<rect x="112.8" y="671.4" width="18.4" height="24.5" fill="#dfdfdf" transform="rotate(10 122.0 683.6)"/>
<rect x="112.8" y="670.3" width="18.4" height="24.5" fill="#ebebeb" transform="rotate(10 122.0 682.5)"/>
<rect x="132.6" y="679.0" width="16.9" height="21.5" fill="#dfdfdf" transform="rotate(15 141.1 689.8)"/>
<rect x="132.6" y="677.9" width="16.9" height="21.5" fill="#ebebeb" transform="rotate(15 141.1 688.7)"/>
<rect x="69.9" y="690.5" width="12.3" height="16.9" fill="#dfdfdf" transform="rotate(30 76.1 699.0)"/>
<rect x="69.9" y="689.4" width="12.3" height="16.9" fill="#ebebeb" transform="rotate(30 76.1 697.9)"/>
<rect x="88.2" y="699.1" width="10.7" height="13.8" fill="#dfdfdf" transform="rotate(15 93.5 706.0)"/>
<rect x="88.2" y="698.0" width="10.7" height="13.8" fill="#ebebeb" transform="rotate(15 93.5 704.9)"/>
<rect x="108.1" y="702.8" width="16.9" height="16.9" fill="#dfdfdf" transform="rotate(10 116.5 711.2)"/>
<rect x="108.1" y="701.7" width="16.9" height="16.9" fill="#ebebeb" transform="rotate(10 116.5 710.1)"/>
<rect x="79.7" y="715.8" width="9.2" height="12.3" fill="#dfdfdf" transform="rotate(20 84.3 722.0)"/>
<rect x="79.7" y="714.7" width="9.2" height="12.3" fill="#ebebeb" transform="rotate(20 84.3 720.9)"/>
<rect x="133.4" y="708.9" width="9.2" height="10.7" fill="#dfdfdf" transform="rotate(20 138.0 714.3)"/>
<rect x="133.4" y="707.8" width="9.2" height="10.7" fill="#ebebeb" transform="rotate(20 138.0 713.2)"/>
<rect x="127.9" y="718.1" width="9.2" height="10.7" fill="#dfdfdf" transform="rotate(20 132.5 723.5)"/>
<rect x="127.9" y="717.0" width="9.2" height="10.7" fill="#ebebeb" transform="rotate(20 132.5 722.4)"/>
<rect x="145.0" y="717.2" width="9.2" height="10.7" fill="#dfdfdf" transform="rotate(10 149.6 722.6)"/>
<rect x="145.0" y="716.1" width="9.2" height="10.7" fill="#ebebeb" transform="rotate(10 149.6 721.5)"/>
<rect x="135.1" y="728.7" width="10.7" height="12.3" fill="#dfdfdf" transform="rotate(15 140.4 734.8)"/>
<rect x="135.1" y="727.6" width="10.7" height="12.3" fill="#ebebeb" transform="rotate(15 140.4 733.7)"/>
<rect x="29.3" y="727.3" width="13.8" height="13.8" fill="#dfdfdf" transform="rotate(-40 36.2 734.2)"/>
<rect x="29.3" y="726.2" width="13.8" height="13.8" fill="#ebebeb" transform="rotate(-40 36.2 733.1)"/>
<rect x="48.5" y="733.5" width="12.3" height="13.8" fill="#dfdfdf" transform="rotate(-40 54.6 740.4)"/>
<rect x="48.5" y="732.4" width="12.3" height="13.8" fill="#ebebeb" transform="rotate(-40 54.6 739.3)"/>
<rect x="7.8" y="745.7" width="13.8" height="10.7" fill="#dfdfdf" transform="rotate(-30 14.7 751.1)"/>
<rect x="7.8" y="744.6" width="13.8" height="10.7" fill="#ebebeb" transform="rotate(-30 14.7 750.0)"/>
<rect x="20.1" y="758.0" width="13.8" height="10.7" fill="#dfdfdf" transform="rotate(-20 27.0 763.4)"/>
<rect x="20.1" y="756.9" width="13.8" height="10.7" fill="#ebebeb" transform="rotate(-20 27.0 762.3)"/>
<rect x="38.3" y="753.4" width="12.3" height="10.7" fill="#dfdfdf" transform="rotate(-20 44.5 758.8)"/>
<rect x="38.3" y="752.3" width="12.3" height="10.7" fill="#ebebeb" transform="rotate(-20 44.5 757.7)"/>
<rect x="98.1" y="748.0" width="18.4" height="15.3" fill="#dfdfdf" transform="rotate(-30 107.3 755.7)"/>
<rect x="98.1" y="746.9" width="18.4" height="15.3" fill="#ebebeb" transform="rotate(-30 107.3 754.6)"/>
<rect x="303.6" y="547.2" width="21.5" height="12.3" fill="#dfdfdf" transform="rotate(-5 314.3 553.3)"/>
<rect x="303.6" y="546.1" width="21.5" height="12.3" fill="#ebebeb" transform="rotate(-5 314.3 552.2)"/>
<rect x="501.0" y="549.5" width="15.3" height="23.0" fill="#dfdfdf" transform="rotate(-20 508.7 561.0)"/>
<rect x="501.0" y="548.4" width="15.3" height="23.0" fill="#ebebeb" transform="rotate(-20 508.7 559.9)"/>
<rect x="528.6" y="541.8" width="15.3" height="13.8" fill="#dfdfdf" transform="rotate(-20 536.3 548.7)"/>
<rect x="528.6" y="540.7" width="15.3" height="13.8" fill="#ebebeb" transform="rotate(-20 536.3 547.6)"/>
<rect x="558.5" y="547.2" width="13.8" height="18.4" fill="#dfdfdf" transform="rotate(-30 565.4 556.4)"/>
<rect x="558.5" y="546.1" width="13.8" height="18.4" fill="#ebebeb" transform="rotate(-30 565.4 555.3)"/>
<rect x="570.0" y="564.0" width="9.2" height="9.2" fill="#dfdfdf" transform="rotate(-30 574.6 568.6)"/>
<rect x="570.0" y="562.9" width="9.2" height="9.2" fill="#ebebeb" transform="rotate(-30 574.6 567.5)"/>
<rect x="473.5" y="570.0" width="13.8" height="23.0" fill="#dfdfdf" transform="rotate(-15 480.4 581.5)"/>
<rect x="473.5" y="568.9" width="13.8" height="23.0" fill="#ebebeb" transform="rotate(-15 480.4 580.4)"/>
<rect x="478.8" y="603.1" width="16.9" height="23.0" fill="#dfdfdf" transform="rotate(-25 487.2 614.6)"/>
<rect x="478.8" y="602.0" width="16.9" height="23.0" fill="#ebebeb" transform="rotate(-25 487.2 613.5)"/>
<rect x="508.8" y="596.2" width="16.9" height="18.4" fill="#dfdfdf" transform="rotate(-25 517.2 605.4)"/>
<rect x="508.8" y="595.1" width="16.9" height="18.4" fill="#ebebeb" transform="rotate(-25 517.2 604.3)"/>
<rect x="540.9" y="578.8" width="21.5" height="15.3" fill="#dfdfdf" transform="rotate(-30 551.6 586.4)"/>
<rect x="540.9" y="577.7" width="21.5" height="15.3" fill="#ebebeb" transform="rotate(-30 551.6 585.3)"/>
<rect x="527.2" y="620.0" width="16.9" height="19.9" fill="#dfdfdf" transform="rotate(-25 535.6 630.0)"/>
<rect x="527.2" y="618.9" width="16.9" height="19.9" fill="#ebebeb" transform="rotate(-25 535.6 628.9)"/>
<rect x="492.6" y="636.9" width="16.9" height="19.9" fill="#dfdfdf" transform="rotate(-30 501.0 646.8)"/>
<rect x="492.6" y="635.8" width="16.9" height="19.9" fill="#ebebeb" transform="rotate(-30 501.0 645.7)"/>
<rect x="556.3" y="621.4" width="13.8" height="12.3" fill="#dfdfdf" transform="rotate(-25 563.2 627.5)"/>
<rect x="556.3" y="620.3" width="13.8" height="12.3" fill="#ebebeb" transform="rotate(-25 563.2 626.4)"/>
<rect x="582.3" y="602.4" width="12.3" height="12.3" fill="#dfdfdf" transform="rotate(-25 588.4 608.5)"/>
<rect x="582.3" y="601.3" width="12.3" height="12.3" fill="#ebebeb" transform="rotate(-25 588.4 607.4)"/>
<rect x="596.7" y="613.9" width="15.3" height="16.9" fill="#dfdfdf" transform="rotate(-30 604.3 622.3)"/>
<rect x="596.7" y="612.8" width="15.3" height="16.9" fill="#ebebeb" transform="rotate(-30 604.3 621.2)"/>
<rect x="592.4" y="633.8" width="9.2" height="23.0" fill="#dfdfdf" transform="rotate(-10 597.0 645.3)"/>
<rect x="592.4" y="632.7" width="9.2" height="23.0" fill="#ebebeb" transform="rotate(-10 597.0 644.2)"/>
<rect x="512.5" y="667.7" width="13.8" height="15.3" fill="#dfdfdf" transform="rotate(10 519.4 675.3)"/>
<rect x="512.5" y="666.6" width="13.8" height="15.3" fill="#ebebeb" transform="rotate(10 519.4 674.2)"/>
<rect x="517.1" y="693.6" width="13.8" height="26.1" fill="#dfdfdf" transform="rotate(-10 524.0 706.6)"/>
<rect x="517.1" y="692.5" width="13.8" height="26.1" fill="#ebebeb" transform="rotate(-10 524.0 705.5)"/>
<rect x="494.9" y="699.0" width="9.2" height="12.3" fill="#dfdfdf" transform="rotate(10 499.5 705.1)"/>
<rect x="494.9" y="697.9" width="9.2" height="12.3" fill="#ebebeb" transform="rotate(10 499.5 704.0)"/>
<rect x="484.9" y="669.1" width="7.7" height="16.9" fill="#dfdfdf" transform="rotate(-10 488.7 677.5)"/>
<rect x="484.9" y="668.0" width="7.7" height="16.9" fill="#ebebeb" transform="rotate(-10 488.7 676.4)"/>
<rect x="527.8" y="737.3" width="13.8" height="21.5" fill="#dfdfdf" transform="rotate(-10 534.7 748.0)"/>
<rect x="527.8" y="736.2" width="13.8" height="21.5" fill="#ebebeb" transform="rotate(-10 534.7 746.9)"/>
<rect x="531.7" y="771.0" width="18.4" height="12.3" fill="#dfdfdf" transform="rotate(0 540.9 777.2)"/>
<rect x="531.7" y="769.9" width="18.4" height="12.3" fill="#ebebeb" transform="rotate(0 540.9 776.1)"/>
<rect x="567.7" y="753.4" width="13.8" height="16.9" fill="#dfdfdf" transform="rotate(0 574.6 761.8)"/>
<rect x="567.7" y="752.3" width="13.8" height="16.9" fill="#ebebeb" transform="rotate(0 574.6 760.7)"/>
<rect x="586.1" y="708.2" width="16.9" height="30.7" fill="#dfdfdf" transform="rotate(5 594.5 723.5)"/>
<rect x="586.1" y="707.1" width="16.9" height="30.7" fill="#ebebeb" transform="rotate(5 594.5 722.4)"/>
<rect x="612.3" y="633.0" width="12.3" height="36.8" fill="#dfdfdf" transform="rotate(-5 618.4 651.4)"/>
<rect x="612.3" y="631.9" width="12.3" height="36.8" fill="#ebebeb" transform="rotate(-5 618.4 650.3)"/>
<rect x="600.7" y="661.5" width="12.3" height="15.3" fill="#dfdfdf" transform="rotate(-5 606.8 669.2)"/>
<rect x="600.7" y="660.4" width="12.3" height="15.3" fill="#ebebeb" transform="rotate(-5 606.8 668.1)"/>
<rect x="609.9" y="674.4" width="15.3" height="15.3" fill="#dfdfdf" transform="rotate(5 617.5 682.1)"/>
<rect x="609.9" y="673.3" width="15.3" height="15.3" fill="#ebebeb" transform="rotate(5 617.5 681.0)"/>
<rect x="614.5" y="691.3" width="15.3" height="18.4" fill="#dfdfdf" transform="rotate(5 622.1 700.5)"/>
<rect x="614.5" y="690.2" width="15.3" height="18.4" fill="#ebebeb" transform="rotate(5 622.1 699.4)"/>
<rect x="635.9" y="606.2" width="21.5" height="13.8" fill="#dfdfdf" transform="rotate(-5 646.7 613.1)"/>
<rect x="635.9" y="605.1" width="21.5" height="13.8" fill="#ebebeb" transform="rotate(-5 646.7 612.0)"/>
<rect x="663.5" y="600.8" width="18.4" height="12.3" fill="#dfdfdf" transform="rotate(-10 672.7 607.0)"/>
<rect x="663.5" y="599.7" width="18.4" height="12.3" fill="#ebebeb" transform="rotate(-10 672.7 605.9)"/>
<rect x="675.8" y="614.6" width="21.5" height="24.5" fill="#dfdfdf" transform="rotate(-10 686.5 626.9)"/>
<rect x="675.8" y="613.5" width="21.5" height="24.5" fill="#ebebeb" transform="rotate(-10 686.5 625.8)"/>
<rect x="660.5" y="640.7" width="21.5" height="15.3" fill="#dfdfdf" transform="rotate(-15 671.2 648.4)"/>
<rect x="660.5" y="639.6" width="21.5" height="15.3" fill="#ebebeb" transform="rotate(-15 671.2 647.3)"/>
<rect x="658.2" y="654.5" width="13.8" height="15.3" fill="#dfdfdf" transform="rotate(-10 665.1 662.2)"/>
<rect x="658.2" y="653.4" width="13.8" height="15.3" fill="#ebebeb" transform="rotate(-10 665.1 661.1)"/>
<rect x="678.1" y="659.1" width="16.9" height="15.3" fill="#dfdfdf" transform="rotate(-25 686.5 666.8)"/>
<rect x="678.1" y="658.0" width="16.9" height="15.3" fill="#ebebeb" transform="rotate(-25 686.5 665.7)"/>
<rect x="652.8" y="681.3" width="15.3" height="13.8" fill="#dfdfdf" transform="rotate(-25 660.5 688.2)"/>
<rect x="652.8" y="680.2" width="15.3" height="13.8" fill="#ebebeb" transform="rotate(-25 660.5 687.1)"/>
<rect x="672.0" y="695.9" width="16.9" height="15.3" fill="#dfdfdf" transform="rotate(-25 680.4 703.6)"/>
<rect x="672.0" y="694.8" width="16.9" height="15.3" fill="#ebebeb" transform="rotate(-25 680.4 702.5)"/>
<rect x="686.5" y="697.4" width="12.3" height="12.3" fill="#dfdfdf" transform="rotate(-25 692.7 703.6)"/>
<rect x="686.5" y="696.3" width="12.3" height="12.3" fill="#ebebeb" transform="rotate(-25 692.7 702.5)"/>
<rect x="656.6" y="713.5" width="16.9" height="13.8" fill="#dfdfdf" transform="rotate(0 665.1 720.4)"/>
<rect x="656.6" y="712.4" width="16.9" height="13.8" fill="#ebebeb" transform="rotate(0 665.1 719.3)"/>
<rect x="649.7" y="731.2" width="12.3" height="18.4" fill="#dfdfdf" transform="rotate(0 655.9 740.4)"/>
<rect x="649.7" y="730.1" width="12.3" height="18.4" fill="#ebebeb" transform="rotate(0 655.9 739.3)"/>
<rect x="663.5" y="748.0" width="15.3" height="15.3" fill="#dfdfdf" transform="rotate(0 671.2 755.7)"/>
<rect x="663.5" y="746.9" width="15.3" height="15.3" fill="#ebebeb" transform="rotate(0 671.2 754.6)"/>
<rect x="683.5" y="748.0" width="12.3" height="15.3" fill="#dfdfdf" transform="rotate(0 689.6 755.7)"/>
<rect x="683.5" y="746.9" width="12.3" height="15.3" fill="#ebebeb" transform="rotate(0 689.6 754.6)"/>
<rect x="617.5" y="725.0" width="12.3" height="9.2" fill="#dfdfdf" transform="rotate(-10 623.7 729.6)"/>
<rect x="617.5" y="723.9" width="12.3" height="9.2" fill="#ebebeb" transform="rotate(-10 623.7 728.5)"/>
<rect x="626.7" y="699.0" width="9.2" height="9.2" fill="#dfdfdf" transform="rotate(0 631.3 703.6)"/>
<rect x="626.7" y="697.9" width="9.2" height="9.2" fill="#ebebeb" transform="rotate(0 631.3 702.5)"/>
<rect x="609.9" y="755.7" width="15.3" height="24.5" fill="#dfdfdf" transform="rotate(20 617.5 768.0)"/>
<rect x="609.9" y="754.6" width="15.3" height="24.5" fill="#ebebeb" transform="rotate(20 617.5 766.9)"/>
<rect x="597.6" y="755.7" width="12.3" height="12.3" fill="#dfdfdf" transform="rotate(0 603.7 761.8)"/>
<rect x="597.6" y="754.6" width="12.3" height="12.3" fill="#ebebeb" transform="rotate(0 603.7 760.7)"/>
<rect x="640.5" y="763.4" width="18.4" height="15.3" fill="#dfdfdf" transform="rotate(0 649.7 771.0)"/>
<rect x="640.5" y="762.3" width="18.4" height="15.3" fill="#ebebeb" transform="rotate(0 649.7 769.9)"/>
<rect x="668.1" y="764.9" width="18.4" height="15.3" fill="#dfdfdf" transform="rotate(0 677.3 772.6)"/>
<rect x="668.1" y="763.8" width="18.4" height="15.3" fill="#ebebeb" transform="rotate(0 677.3 771.5)"/>
<rect x="603.7" y="585.5" width="12.3" height="9.2" fill="#dfdfdf" transform="rotate(-30 609.9 590.1)"/>
<rect x="603.7" y="584.4" width="12.3" height="9.2" fill="#ebebeb" transform="rotate(-30 609.9 589.0)"/>
<rect x="692.7" y="564.0" width="9.2" height="9.2" fill="#dfdfdf" transform="rotate(0 697.3 568.6)"/>
<rect x="692.7" y="562.9" width="9.2" height="9.2" fill="#ebebeb" transform="rotate(0 697.3 567.5)"/>
<rect x="703.8" y="542.6" width="18.4" height="15.3" fill="#dfdfdf" transform="rotate(-30 713.0 550.2)"/>
<rect x="703.8" y="541.5" width="18.4" height="15.3" fill="#ebebeb" transform="rotate(-30 713.0 549.1)"/>
<rect x="706.9" y="567.1" width="12.3" height="12.3" fill="#dfdfdf" transform="rotate(-30 713.0 573.2)"/>
<rect x="706.9" y="566.0" width="12.3" height="12.3" fill="#ebebeb" transform="rotate(-30 713.0 572.1)"/>
<rect x="730.6" y="570.9" width="10.7" height="10.7" fill="#dfdfdf" transform="rotate(-20 736.0 576.3)"/>
<rect x="730.6" y="569.8" width="10.7" height="10.7" fill="#ebebeb" transform="rotate(-20 736.0 575.2)"/>
<rect x="726.8" y="584.0" width="12.3" height="12.3" fill="#dfdfdf" transform="rotate(-20 732.9 590.1)"/>
<rect x="726.8" y="582.9" width="12.3" height="12.3" fill="#ebebeb" transform="rotate(-20 732.9 589.0)"/>
<rect x="736.9" y="601.6" width="9.2" height="10.7" fill="#dfdfdf" transform="rotate(-20 741.5 607.0)"/>
<rect x="736.9" y="600.5" width="9.2" height="10.7" fill="#ebebeb" transform="rotate(-20 741.5 605.9)"/>
<rect x="683.9" y="605.4" width="18.4" height="36.8" fill="#dfdfdf" transform="rotate(0 693.1 623.8)"/>
<rect x="683.9" y="604.3" width="18.4" height="36.8" fill="#ebebeb" transform="rotate(0 693.1 622.7)"/>
<rect x="726.0" y="620.8" width="10.7" height="12.3" fill="#dfdfdf" transform="rotate(-15 731.4 626.9)"/>
<rect x="726.0" y="619.7" width="10.7" height="12.3" fill="#ebebeb" transform="rotate(-15 731.4 625.8)"/>
<rect x="723.0" y="634.6" width="10.7" height="21.5" fill="#dfdfdf" transform="rotate(-15 728.3 645.3)"/>
<rect x="723.0" y="633.5" width="10.7" height="21.5" fill="#ebebeb" transform="rotate(-15 728.3 644.2)"/>
<rect x="700.7" y="644.5" width="9.2" height="10.7" fill="#dfdfdf" transform="rotate(-20 705.3 649.9)"/>
<rect x="700.7" y="643.4" width="9.2" height="10.7" fill="#ebebeb" transform="rotate(-20 705.3 648.8)"/>
<rect x="693.1" y="656.8" width="9.2" height="10.7" fill="#dfdfdf" transform="rotate(-20 697.7 662.2)"/>
<rect x="693.1" y="655.7" width="9.2" height="10.7" fill="#ebebeb" transform="rotate(-20 697.7 661.1)"/>
<rect x="713.0" y="659.9" width="9.2" height="10.7" fill="#dfdfdf" transform="rotate(-30 717.6 665.2)"/>
<rect x="713.0" y="658.8" width="9.2" height="10.7" fill="#ebebeb" transform="rotate(-30 717.6 664.1)"/>
<rect x="690.8" y="672.9" width="16.9" height="18.4" fill="#dfdfdf" transform="rotate(-35 699.2 682.1)"/>
<rect x="690.8" y="671.8" width="16.9" height="18.4" fill="#ebebeb" transform="rotate(-35 699.2 681.0)"/>
<rect x="688.5" y="701.3" width="9.2" height="10.7" fill="#dfdfdf" transform="rotate(-20 693.1 706.6)"/>
<rect x="688.5" y="700.2" width="9.2" height="10.7" fill="#ebebeb" transform="rotate(-20 693.1 705.5)"/>
<rect x="686.2" y="717.4" width="7.7" height="15.3" fill="#dfdfdf" transform="rotate(-20 690.0 725.0)"/>
<rect x="686.2" y="716.3" width="7.7" height="15.3" fill="#ebebeb" transform="rotate(-20 690.0 723.9)"/>
<rect x="784.3" y="543.3" width="7.7" height="10.7" fill="#dfdfdf" transform="rotate(10 788.1 548.7)"/>
<rect x="784.3" y="542.2" width="7.7" height="10.7" fill="#ebebeb" transform="rotate(10 788.1 547.6)"/>
<rect x="776.0" y="556.4" width="10.7" height="15.3" fill="#dfdfdf" transform="rotate(10 781.4 564.0)"/>
<rect x="776.0" y="555.3" width="10.7" height="15.3" fill="#ebebeb" transform="rotate(10 781.4 562.9)"/>
<rect x="772.6" y="585.5" width="13.8" height="15.3" fill="#dfdfdf" transform="rotate(10 779.5 593.2)"/>
<rect x="772.6" y="584.4" width="13.8" height="15.3" fill="#ebebeb" transform="rotate(10 779.5 592.1)"/>
<rect x="763.6" y="601.6" width="15.3" height="10.7" fill="#dfdfdf" transform="rotate(15 771.3 607.0)"/>
<rect x="763.6" y="600.5" width="15.3" height="10.7" fill="#ebebeb" transform="rotate(15 771.3 605.9)"/>
<rect x="758.1" y="613.1" width="9.2" height="12.3" fill="#dfdfdf" transform="rotate(10 762.7 619.2)"/>
<rect x="758.1" y="612.0" width="9.2" height="12.3" fill="#ebebeb" transform="rotate(10 762.7 618.1)"/>
<rect x="749.2" y="643.8" width="12.3" height="15.3" fill="#dfdfdf" transform="rotate(10 755.3 651.4)"/>
<rect x="749.2" y="642.7" width="12.3" height="15.3" fill="#ebebeb" transform="rotate(10 755.3 650.3)"/>
<rect x="734.3" y="684.2" width="10.7" height="12.3" fill="#dfdfdf" transform="rotate(10 739.7 690.4)"/>
<rect x="734.3" y="683.1" width="10.7" height="12.3" fill="#ebebeb" transform="rotate(10 739.7 689.3)"/>
<rect x="761.3" y="670.6" width="13.8" height="16.9" fill="#dfdfdf" transform="rotate(25 768.2 679.0)"/>
<rect x="761.3" y="669.5" width="13.8" height="16.9" fill="#ebebeb" transform="rotate(25 768.2 677.9)"/>
<rect x="773.0" y="681.3" width="13.8" height="16.9" fill="#dfdfdf" transform="rotate(25 779.8 689.8)"/>
<rect x="773.0" y="680.2" width="13.8" height="16.9" fill="#ebebeb" transform="rotate(25 779.8 688.7)"/>
<rect x="784.9" y="691.3" width="13.8" height="15.3" fill="#dfdfdf" transform="rotate(25 791.8 699.0)"/>
<rect x="784.9" y="690.2" width="13.8" height="15.3" fill="#ebebeb" transform="rotate(25 791.8 697.9)"/>
<rect x="745.2" y="550.2" width="9.2" height="18.4" fill="#dfdfdf" transform="rotate(10 749.8 559.4)"/>
<rect x="745.2" y="549.1" width="9.2" height="18.4" fill="#ebebeb" transform="rotate(10 749.8 558.3)"/>
<rect x="737.6" y="438.0" width="16.9" height="13.8" fill="#dfdfdf" transform="rotate(0 746.0 444.9)"/>
<rect x="737.6" y="436.9" width="16.9" height="13.8" fill="#ebebeb" transform="rotate(0 746.0 443.8)"/>
<rect x="749.1" y="454.1" width="6.1" height="9.2" fill="#dfdfdf" transform="rotate(0 752.1 458.7)"/>
<rect x="749.1" y="453.0" width="6.1" height="9.2" fill="#ebebeb" transform="rotate(0 752.1 457.6)"/>
<rect x="775.1" y="432.6" width="21.5" height="24.5" fill="#dfdfdf" transform="rotate(10 785.9 444.9)"/>
<rect x="775.1" y="431.5" width="21.5" height="24.5" fill="#ebebeb" transform="rotate(10 785.9 443.8)"/>
<rect x="815.0" y="454.1" width="15.3" height="21.5" fill="#dfdfdf" transform="rotate(25 822.7 464.8)"/>
<rect x="815.0" y="453.0" width="15.3" height="21.5" fill="#ebebeb" transform="rotate(25 822.7 463.7)"/>
<rect x="805.8" y="485.5" width="12.3" height="23.0" fill="#dfdfdf" transform="rotate(25 811.9 497.0)"/>
<rect x="805.8" y="484.4" width="12.3" height="23.0" fill="#ebebeb" transform="rotate(25 811.9 495.9)"/>
<rect x="732.2" y="495.5" width="15.3" height="18.4" fill="#dfdfdf" transform="rotate(15 739.9 504.7)"/>
<rect x="732.2" y="494.4" width="15.3" height="18.4" fill="#ebebeb" transform="rotate(15 739.9 503.6)"/>
<rect x="727.6" y="511.4" width="6.1" height="6.1" fill="#dfdfdf" transform="rotate(15 730.7 514.5)"/>
<rect x="727.6" y="510.3" width="6.1" height="6.1" fill="#ebebeb" transform="rotate(15 730.7 513.4)"/>
<rect x="703.1" y="515.4" width="27.6" height="36.8" fill="#dfdfdf" transform="rotate(30 716.9 533.8)"/>
<rect x="703.1" y="514.3" width="27.6" height="36.8" fill="#ebebeb" transform="rotate(30 716.9 532.7)"/>
<rect x="767.5" y="498.6" width="12.3" height="18.4" fill="#dfdfdf" transform="rotate(20 773.6 507.8)"/>
<rect x="767.5" y="497.5" width="12.3" height="18.4" fill="#ebebeb" transform="rotate(20 773.6 506.7)"/>
<rect x="760.6" y="514.7" width="10.7" height="13.8" fill="#dfdfdf" transform="rotate(20 765.9 521.6)"/>
<rect x="760.6" y="513.6" width="10.7" height="13.8" fill="#ebebeb" transform="rotate(20 765.9 520.5)"/>
<rect x="788.2" y="517.0" width="10.7" height="24.5" fill="#dfdfdf" transform="rotate(20 793.5 529.2)"/>
<rect x="788.2" y="515.9" width="10.7" height="24.5" fill="#ebebeb" transform="rotate(20 793.5 528.1)"/>
<rect x="775.9" y="556.8" width="10.7" height="15.3" fill="#dfdfdf" transform="rotate(15 781.3 564.5)"/>
<rect x="775.9" y="555.7" width="10.7" height="15.3" fill="#ebebeb" transform="rotate(15 781.3 563.4)"/>
<rect x="772.8" y="583.7" width="13.8" height="16.9" fill="#dfdfdf" transform="rotate(15 779.7 592.1)"/>
<rect x="772.8" y="582.6" width="13.8" height="16.9" fill="#ebebeb" transform="rotate(15 779.7 591.0)"/>
<rect x="762.9" y="601.3" width="15.3" height="12.3" fill="#dfdfdf" transform="rotate(15 770.5 607.4)"/>
<rect x="762.9" y="600.2" width="15.3" height="12.3" fill="#ebebeb" transform="rotate(15 770.5 606.3)"/>
<rect x="756.7" y="612.8" width="9.2" height="13.8" fill="#dfdfdf" transform="rotate(15 761.3 619.7)"/>
<rect x="756.7" y="611.7" width="9.2" height="13.8" fill="#ebebeb" transform="rotate(15 761.3 618.6)"/>
<rect x="739.9" y="552.2" width="12.3" height="21.5" fill="#dfdfdf" transform="rotate(20 746.0 563.0)"/>
<rect x="739.9" y="551.1" width="12.3" height="21.5" fill="#ebebeb" transform="rotate(20 746.0 561.9)"/>
<rect x="730.7" y="573.7" width="12.3" height="9.2" fill="#dfdfdf" transform="rotate(20 736.8 578.3)"/>
<rect x="730.7" y="572.6" width="12.3" height="9.2" fill="#ebebeb" transform="rotate(20 736.8 577.2)"/>
<rect x="726.7" y="590.6" width="15.3" height="12.3" fill="#dfdfdf" transform="rotate(30 734.3 596.7)"/>
<rect x="726.7" y="589.5" width="15.3" height="12.3" fill="#ebebeb" transform="rotate(30 734.3 595.6)"/>
<rect x="708.4" y="566.8" width="10.7" height="10.7" fill="#dfdfdf" transform="rotate(30 713.8 572.2)"/>
<rect x="708.4" y="565.7" width="10.7" height="10.7" fill="#ebebeb" transform="rotate(30 713.8 571.1)"/>
<rect x="737.4" y="599.1" width="12.3" height="12.3" fill="#dfdfdf" transform="rotate(30 743.5 605.3)"/>
<rect x="737.4" y="598.0" width="12.3" height="12.3" fill="#ebebeb" transform="rotate(30 743.5 604.2)"/>
<rect x="736.0" y="602.1" width="10.7" height="10.7" fill="#dfdfdf" transform="rotate(30 741.4 607.4)"/>
<rect x="736.0" y="601.0" width="10.7" height="10.7" fill="#ebebeb" transform="rotate(30 741.4 606.3)"/>
<rect x="749.1" y="644.2" width="12.3" height="15.3" fill="#dfdfdf" transform="rotate(15 755.2 651.9)"/>
<rect x="749.1" y="643.1" width="12.3" height="15.3" fill="#ebebeb" transform="rotate(15 755.2 650.8)"/>
<rect x="723.0" y="622.8" width="12.3" height="15.3" fill="#dfdfdf" transform="rotate(15 729.1 630.4)"/>
<rect x="723.0" y="621.7" width="12.3" height="15.3" fill="#ebebeb" transform="rotate(15 729.1 629.3)"/>
<rect x="719.9" y="638.1" width="12.3" height="15.3" fill="#dfdfdf" transform="rotate(15 726.1 645.8)"/>
<rect x="719.9" y="637.0" width="12.3" height="15.3" fill="#ebebeb" transform="rotate(15 726.1 644.7)"/>
<rect x="699.2" y="645.8" width="10.7" height="12.3" fill="#dfdfdf" transform="rotate(0 704.6 651.9)"/>
<rect x="699.2" y="644.7" width="10.7" height="12.3" fill="#ebebeb" transform="rotate(0 704.6 650.8)"/>
<rect x="700.0" y="617.4" width="12.3" height="10.7" fill="#dfdfdf" transform="rotate(0 706.1 622.8)"/>
<rect x="700.0" y="616.3" width="12.3" height="10.7" fill="#ebebeb" transform="rotate(0 706.1 621.7)"/>
<rect x="709.2" y="608.2" width="9.2" height="7.7" fill="#dfdfdf" transform="rotate(0 713.8 612.0)"/>
<rect x="709.2" y="607.1" width="9.2" height="7.7" fill="#ebebeb" transform="rotate(0 713.8 610.9)"/>
<path id="lp0" d="M631.7 76.8 L648.3 73.1 L675.9 67.0 L703.5 61.5 L720.0 58.2" fill="none"/>
<text font-family="DejaVu Sans,Liberation Sans,sans-serif" font-size="8.4" fill="#9aabb9" stroke="#fff" stroke-width="2.200" stroke-opacity=".85" paint-order="stroke" letter-spacing=".25"><textPath href="#lp0" startOffset="50%" text-anchor="middle">Via Darschale</textPath></text>
<path id="lp1" d="M579.8 231.0 L589.4 225.5 L605.3 216.3 L620.7 207.1 L629.9 201.6" fill="none"/>
<text font-family="DejaVu Sans,Liberation Sans,sans-serif" font-size="8.4" fill="#9aabb9" stroke="#fff" stroke-width="2.200" stroke-opacity=".85" paint-order="stroke" letter-spacing=".25"><textPath href="#lp1" startOffset="50%" text-anchor="middle">Via Crava</textPath></text>
<path id="lp2" d="M839.2 48.7 L854.9 49.8 L880.9 51.7 L896.6 52.8" fill="none"/>
<text font-family="DejaVu Sans,Liberation Sans,sans-serif" font-size="8.4" fill="#9aabb9" stroke="#fff" stroke-width="2.200" stroke-opacity=".85" paint-order="stroke" letter-spacing=".25"><textPath href="#lp2" startOffset="50%" text-anchor="middle">Mutta</textPath></text>
<path id="lp3" d="M860.4 145.6 L869.3 138.7 L884.0 127.4 L900.9 116.1 L911.0 109.2" fill="none"/>
<text font-family="DejaVu Sans,Liberation Sans,sans-serif" font-size="8.4" fill="#9aabb9" stroke="#fff" stroke-width="2.200" stroke-opacity=".85" paint-order="stroke" letter-spacing=".25"><textPath href="#lp3" startOffset="50%" text-anchor="middle">Via Teissa</textPath></text>
<path id="lp4" d="M911.0 133.3 L919.3 126.5 L933.1 115.1 L949.0 109.9 L958.6 106.8" fill="none"/>
<text font-family="DejaVu Sans,Liberation Sans,sans-serif" font-size="8.4" fill="#9aabb9" stroke="#fff" stroke-width="2.200" stroke-opacity=".85" paint-order="stroke" letter-spacing=".25"><textPath href="#lp4" startOffset="50%" text-anchor="middle">Via Viola</textPath></text>
<path id="lp5" d="M827.3 202.2 L831.9 189.6 L839.5 168.8 L849.6 151.0 L855.7 140.3" fill="none"/>
<text font-family="DejaVu Sans,Liberation Sans,sans-serif" font-size="8.4" fill="#9aabb9" stroke="#fff" stroke-width="2.200" stroke-opacity=".85" paint-order="stroke" letter-spacing=".25"><textPath href="#lp5" startOffset="50%" text-anchor="middle">Via Crestas</textPath></text>
<path id="lp6" d="M870.5 192.7 L877.9 182.6 L890.1 165.7 L910.1 151.9 L922.0 143.6" fill="none"/>
<text font-family="DejaVu Sans,Liberation Sans,sans-serif" font-size="8.4" fill="#9aabb9" stroke="#fff" stroke-width="2.200" stroke-opacity=".85" paint-order="stroke" letter-spacing=".25"><textPath href="#lp6" startOffset="50%" text-anchor="middle">Via Tuleu Su</textPath></text>
<path id="lp7" d="M791.6 248.5 L792.9 234.7 L795.1 211.7 L798.7 187.2 L801.0 172.5" fill="none"/>
<text font-family="DejaVu Sans,Liberation Sans,sans-serif" font-size="8.4" fill="#9aabb9" stroke="#fff" stroke-width="2.200" stroke-opacity=".85" paint-order="stroke" letter-spacing=".25"><textPath href="#lp7" startOffset="50%" text-anchor="middle">Via Spendas</textPath></text>
<path id="lp8" d="M989.2 144.6 L993.5 128.9 L1000.5 102.9 L1007.6 76.8 L1011.8 61.2" fill="none"/>
<text font-family="DejaVu Sans,Liberation Sans,sans-serif" font-size="9.4" fill="#9aabb9" stroke="#fff" stroke-width="2.200" stroke-opacity=".85" paint-order="stroke" letter-spacing=".25"><textPath href="#lp8" startOffset="50%" text-anchor="middle">Via Stradun</textPath></text>
<path id="lp9" d="M967.3 224.4 L972.3 209.3 L980.6 184.1 L989.8 162.7 L995.3 149.8" fill="none"/>
<text font-family="DejaVu Sans,Liberation Sans,sans-serif" font-size="8.4" fill="#9aabb9" stroke="#fff" stroke-width="2.200" stroke-opacity=".85" paint-order="stroke" letter-spacing=".25"><textPath href="#lp9" startOffset="50%" text-anchor="middle">Via Pardanal</textPath></text>
<path id="lp10" d="M510.0 311.4 L511.8 301.3 L514.9 284.4 L521.9 266.0 L526.1 255.0" fill="none"/>
<text font-family="DejaVu Sans,Liberation Sans,sans-serif" font-size="8.4" fill="#9aabb9" stroke="#fff" stroke-width="2.200" stroke-opacity=".85" paint-order="stroke" letter-spacing=".25"><textPath href="#lp10" startOffset="50%" text-anchor="middle">Via Crava</textPath></text>
<path id="lp11" d="M547.4 469.9 L546.1 460.1 L544.0 443.9 L542.7 434.1" fill="none"/>
<text font-family="DejaVu Sans,Liberation Sans,sans-serif" font-size="8.4" fill="#9aabb9" stroke="#fff" stroke-width="2.200" stroke-opacity=".85" paint-order="stroke" letter-spacing=".25"><textPath href="#lp11" startOffset="50%" text-anchor="middle">Via Fandrels</textPath></text>
<path id="lp12" d="M843.2 361.7 L853.3 344.2 L870.2 315.1 L884.0 285.9 L892.3 268.5" fill="none"/>
<text font-family="DejaVu Sans,Liberation Sans,sans-serif" font-size="8.4" fill="#9aabb9" stroke="#fff" stroke-width="2.200" stroke-opacity=".85" paint-order="stroke" letter-spacing=".25"><textPath href="#lp12" startOffset="50%" text-anchor="middle">Via Sontga Clau</textPath></text>
<path id="lp13" d="M904.2 343.6 L911.6 328.9 L923.9 304.3 L936.1 281.3 L943.5 267.5" fill="none"/>
<text font-family="DejaVu Sans,Liberation Sans,sans-serif" font-size="8.4" fill="#9aabb9" stroke="#fff" stroke-width="2.200" stroke-opacity=".85" paint-order="stroke" letter-spacing=".25"><textPath href="#lp13" startOffset="50%" text-anchor="middle">Via Pardanal</textPath></text>
<path id="lp14" d="M969.9 315.4 L975.1 300.3 L983.7 275.2 L991.3 250.7 L995.9 235.9" fill="none"/>
<text font-family="DejaVu Sans,Liberation Sans,sans-serif" font-size="8.4" fill="#9aabb9" stroke="#fff" stroke-width="2.200" stroke-opacity=".85" paint-order="stroke" letter-spacing=".25"><textPath href="#lp14" startOffset="50%" text-anchor="middle">Via Pardanal</textPath></text>
<path id="lp15" d="M124.4 475.8 L131.2 469.5 L142.6 459.1 L153.3 451.1 L159.8 446.4" fill="none"/>
<text font-family="DejaVu Sans,Liberation Sans,sans-serif" font-size="8.4" fill="#9aabb9" stroke="#fff" stroke-width="2.200" stroke-opacity=".85" paint-order="stroke" letter-spacing=".25"><textPath href="#lp15" startOffset="50%" text-anchor="middle">Via Fau</textPath></text>
<path id="lp16" d="M204.2 442.9 L211.0 438.9 L222.3 432.1 L235.5 426.0 L243.4 422.3" fill="none"/>
<text font-family="DejaVu Sans,Liberation Sans,sans-serif" font-size="8.4" fill="#9aabb9" stroke="#fff" stroke-width="2.200" stroke-opacity=".85" paint-order="stroke" letter-spacing=".25"><textPath href="#lp16" startOffset="50%" text-anchor="middle">Via Fau</textPath></text>
<path id="lp17" d="M100.0 561.8 L107.9 551.7 L121.1 534.9 L138.6 522.6 L149.1 515.2" fill="none"/>
<text font-family="DejaVu Sans,Liberation Sans,sans-serif" font-size="8.9" fill="#9aabb9" stroke="#fff" stroke-width="2.200" stroke-opacity=".85" paint-order="stroke" letter-spacing=".25"><textPath href="#lp17" startOffset="50%" text-anchor="middle">Via Falera</textPath></text>
<path id="lp18" d="M248.8 466.5 L261.3 462.8 L282.1 456.7 L303.0 448.1 L315.5 442.9" fill="none"/>
<text font-family="DejaVu Sans,Liberation Sans,sans-serif" font-size="8.9" fill="#9aabb9" stroke="#fff" stroke-width="2.200" stroke-opacity=".85" paint-order="stroke" letter-spacing=".25"><textPath href="#lp18" startOffset="50%" text-anchor="middle">Via Falera</textPath></text>
<path id="lp19" d="M303.3 445.3 L314.9 439.8 L334.3 430.6 L352.0 416.8 L362.7 408.5" fill="none"/>
<text font-family="DejaVu Sans,Liberation Sans,sans-serif" font-size="8.9" fill="#9aabb9" stroke="#fff" stroke-width="2.200" stroke-opacity=".85" paint-order="stroke" letter-spacing=".25"><textPath href="#lp19" startOffset="50%" text-anchor="middle">Via Falera</textPath></text>
<path id="lp20" d="M297.5 478.0 L307.3 471.4 L323.5 460.3 L341.0 445.9 L351.5 437.3" fill="none"/>
<text font-family="DejaVu Sans,Liberation Sans,sans-serif" font-size="8.4" fill="#9aabb9" stroke="#fff" stroke-width="2.200" stroke-opacity=".85" paint-order="stroke" letter-spacing=".25"><textPath href="#lp20" startOffset="50%" text-anchor="middle">Via Valetta</textPath></text>
<path id="lp21" d="M376.4 430.7 L388.0 431.6 L407.3 433.1 L431.2 439.9 L445.6 443.9" fill="none"/>
<text font-family="DejaVu Sans,Liberation Sans,sans-serif" font-size="8.4" fill="#9aabb9" stroke="#fff" stroke-width="2.200" stroke-opacity=".85" paint-order="stroke" letter-spacing=".25"><textPath href="#lp21" startOffset="50%" text-anchor="middle">Via Valetta</textPath></text>
<path id="lp22" d="M309.0 532.8 L325.1 528.8 L352.1 522.0 L380.3 516.5 L397.3 513.2" fill="none"/>
<text font-family="DejaVu Sans,Liberation Sans,sans-serif" font-size="8.4" fill="#9aabb9" stroke="#fff" stroke-width="2.200" stroke-opacity=".85" paint-order="stroke" letter-spacing=".25"><textPath href="#lp22" startOffset="50%" text-anchor="middle">Via Pattadiras</textPath></text>
<path id="lp23" d="M395.1 510.3 L413.5 509.8 L444.1 508.9 L467.1 519.6 L480.9 526.0" fill="none"/>
<text font-family="DejaVu Sans,Liberation Sans,sans-serif" font-size="8.4" fill="#9aabb9" stroke="#fff" stroke-width="2.200" stroke-opacity=".85" paint-order="stroke" letter-spacing=".25"><textPath href="#lp23" startOffset="50%" text-anchor="middle">Via Pattadiras</textPath></text>
<path id="lp24" d="M527.6 500.8 L533.7 488.3 L543.8 467.5 L548.4 442.9 L551.1 428.2" fill="none"/>
<text font-family="DejaVu Sans,Liberation Sans,sans-serif" font-size="8.4" fill="#9aabb9" stroke="#fff" stroke-width="2.200" stroke-opacity=".85" paint-order="stroke" letter-spacing=".25"><textPath href="#lp24" startOffset="50%" text-anchor="middle">Via Fandrels</textPath></text>
<path id="lp25" d="M526.1 507.6 L532.1 519.0 L542.3 538.0 L552.1 557.0 L558.0 568.4" fill="none"/>
<text font-family="DejaVu Sans,Liberation Sans,sans-serif" font-size="8.9" fill="#9aabb9" stroke="#fff" stroke-width="2.200" stroke-opacity=".85" paint-order="stroke" letter-spacing=".25"><textPath href="#lp25" startOffset="50%" text-anchor="middle">Via Falera</textPath></text>
<path id="lp26" d="M-3.6 747.5 L5.2 738.6 L19.9 723.9 L36.2 708.0 L45.9 698.4" fill="none"/>
<text font-family="DejaVu Sans,Liberation Sans,sans-serif" font-size="8.9" fill="#9aabb9" stroke="#fff" stroke-width="2.200" stroke-opacity=".85" paint-order="stroke" letter-spacing=".25"><textPath href="#lp26" startOffset="50%" text-anchor="middle">Via Falera</textPath></text>
<path id="lp27" d="M69.1 694.2 L78.8 684.1 L95.1 667.2 L112.8 649.7 L123.5 639.2" fill="none"/>
<text font-family="DejaVu Sans,Liberation Sans,sans-serif" font-size="8.4" fill="#9aabb9" stroke="#fff" stroke-width="2.200" stroke-opacity=".85" paint-order="stroke" letter-spacing=".25"><textPath href="#lp27" startOffset="50%" text-anchor="middle">Via Caplania</textPath></text>
<path id="lp28" d="M20.6 761.1 L26.7 755.2 L36.8 745.4 L48.5 733.7 L55.4 726.7" fill="none"/>
<text font-family="DejaVu Sans,Liberation Sans,sans-serif" font-size="8.4" fill="#9aabb9" stroke="#fff" stroke-width="2.200" stroke-opacity=".85" paint-order="stroke" letter-spacing=".25"><textPath href="#lp28" startOffset="50%" text-anchor="middle">Via Acla</textPath></text>
<path id="lp29" d="M520.9 616.4 L524.9 637.1 L531.7 671.8 L536.3 711.0 L539.0 734.6" fill="none"/>
<text font-family="DejaVu Sans,Liberation Sans,sans-serif" font-size="8.4" fill="#9aabb9" stroke="#fff" stroke-width="2.200" stroke-opacity=".85" paint-order="stroke" letter-spacing=".25"><textPath href="#lp29" startOffset="50%" text-anchor="middle">Via Davos Baselgia</textPath></text>
<path id="lp30" d="M624.0 605.1 L635.9 603.4 L655.9 600.7 L677.3 595.7 L690.2 592.8" fill="none"/>
<text font-family="DejaVu Sans,Liberation Sans,sans-serif" font-size="8.9" fill="#9aabb9" stroke="#fff" stroke-width="2.200" stroke-opacity=".85" paint-order="stroke" letter-spacing=".25"><textPath href="#lp30" startOffset="50%" text-anchor="middle">Via Falera</textPath></text>
<path id="lp31" d="M623.8 623.7 L626.4 637.1 L630.7 659.5 L635.0 683.4 L637.6 697.8" fill="none"/>
<text font-family="DejaVu Sans,Liberation Sans,sans-serif" font-size="8.4" fill="#9aabb9" stroke="#fff" stroke-width="2.200" stroke-opacity=".85" paint-order="stroke" letter-spacing=".25"><textPath href="#lp31" startOffset="50%" text-anchor="middle">Via Stregia</textPath></text>
<path id="lp32" d="M645.4 718.7 L647.3 698.8 L650.3 665.7 L659.5 640.5 L665.1 625.4" fill="none"/>
<text font-family="DejaVu Sans,Liberation Sans,sans-serif" font-size="8.9" fill="#9aabb9" stroke="#fff" stroke-width="2.200" stroke-opacity=".85" paint-order="stroke" letter-spacing=".25"><textPath href="#lp32" startOffset="50%" text-anchor="middle">Via Principala</textPath></text>
<path id="lp33" d="M651.3 643.6 L661.1 632.5 L677.3 614.1 L700.0 598.8 L713.6 589.6" fill="none"/>
<text font-family="DejaVu Sans,Liberation Sans,sans-serif" font-size="8.9" fill="#9aabb9" stroke="#fff" stroke-width="2.200" stroke-opacity=".85" paint-order="stroke" letter-spacing=".25"><textPath href="#lp33" startOffset="50%" text-anchor="middle">Via Principala</textPath></text>
<path id="lp34" d="M752.0 589.4 L753.5 578.9 L755.9 561.4 L759.6 543.0 L761.8 532.0" fill="none"/>
<text font-family="DejaVu Sans,Liberation Sans,sans-serif" font-size="8.4" fill="#9aabb9" stroke="#fff" stroke-width="2.200" stroke-opacity=".85" paint-order="stroke" letter-spacing=".25"><textPath href="#lp34" startOffset="50%" text-anchor="middle">Via Crest</textPath></text>
<path id="lp35" d="M692.2 680.1 L698.3 672.4 L708.4 659.5 L718.2 644.8 L724.1 636.0" fill="none"/>
<text font-family="DejaVu Sans,Liberation Sans,sans-serif" font-size="8.4" fill="#9aabb9" stroke="#fff" stroke-width="2.200" stroke-opacity=".85" paint-order="stroke" letter-spacing=".25"><textPath href="#lp35" startOffset="50%" text-anchor="middle">Via Crest</textPath></text>
<path id="lp36" d="M710.3 743.3 L718.2 719.9 L731.4 681.0 L746.1 639.6 L754.9 614.8" fill="none"/>
<text font-family="DejaVu Sans,Liberation Sans,sans-serif" font-size="9.7" fill="#9aabb9" stroke="#fff" stroke-width="2.200" stroke-opacity=".85" paint-order="stroke" letter-spacing=".25"><textPath href="#lp36" startOffset="50%" text-anchor="middle">Stradun Cantunal</textPath></text>
<path id="lp37" d="M775.2 631.1 L778.3 624.0 L783.5 612.0 L790.3 600.3 L794.3 593.4" fill="none"/>
<text font-family="DejaVu Sans,Liberation Sans,sans-serif" font-size="8.4" fill="#9aabb9" stroke="#fff" stroke-width="2.200" stroke-opacity=".85" paint-order="stroke" letter-spacing=".25"><textPath href="#lp37" startOffset="50%" text-anchor="middle">Via Val</textPath></text>
<path id="lp38" d="M754.6 687.8 L756.9 680.1 L760.5 667.2 L765.7 655.5 L768.9 648.6" fill="none"/>
<text font-family="DejaVu Sans,Liberation Sans,sans-serif" font-size="8.4" fill="#9aabb9" stroke="#fff" stroke-width="2.200" stroke-opacity=".85" paint-order="stroke" letter-spacing=".25"><textPath href="#lp38" startOffset="50%" text-anchor="middle">Via Val</textPath></text>
<path id="lp39" d="M769.3 569.8 L776.7 545.0 L788.9 503.6 L804.9 463.1 L814.4 438.8" fill="none"/>
<text font-family="DejaVu Sans,Liberation Sans,sans-serif" font-size="9.7" fill="#9aabb9" stroke="#fff" stroke-width="2.200" stroke-opacity=".85" paint-order="stroke" letter-spacing=".25"><textPath href="#lp39" startOffset="50%" text-anchor="middle">Stradun Cantunal</textPath></text>
<path id="lp40" d="M748.4 590.3 L751.5 579.6 L756.7 561.9 L760.4 544.1 L762.6 533.4" fill="none"/>
<text font-family="DejaVu Sans,Liberation Sans,sans-serif" font-size="8.4" fill="#9aabb9" stroke="#fff" stroke-width="2.200" stroke-opacity=".85" paint-order="stroke" letter-spacing=".25"><textPath href="#lp40" startOffset="50%" text-anchor="middle">Via Crest</textPath></text>
<path id="lp41" d="M776.0 631.5 L779.1 623.8 L784.3 610.9 L789.8 598.7 L793.2 591.3" fill="none"/>
<text font-family="DejaVu Sans,Liberation Sans,sans-serif" font-size="8.4" fill="#9aabb9" stroke="#fff" stroke-width="2.200" stroke-opacity=".85" paint-order="stroke" letter-spacing=".25"><textPath href="#lp41" startOffset="50%" text-anchor="middle">Via Val</textPath></text>
<path id="lp42" d="M433.8 427.3 L445.5 428.5 L465.0 430.5 L484.0 439.5 L495.4 444.9" fill="none"/>
<text font-family="DejaVu Sans,Liberation Sans,sans-serif" font-size="8.9" fill="#9aabb9" stroke="#fff" stroke-width="2.200" stroke-opacity=".85" paint-order="stroke" letter-spacing=".25"><textPath href="#lp42" startOffset="50%" text-anchor="middle">Via Falera</textPath></text>
<polygon points="567.4,253.3 610.4,250.4 611.7,257.2 577.2,372.5 557.6,369.6 540.4,351.0 546.9,336.4 541.0,317.8 518.6,306.1 523.4,270.3 544.0,278.1 558.6,258.2" fill="#c2c7e0" fill-opacity=".8" stroke="#8a7a6a" stroke-opacity=".3" stroke-width=".7"/>
<polygon points="567.4,253.3 610.4,250.4 611.7,257.2 577.2,372.5 557.6,369.6 540.4,351.0 546.9,336.4 541.0,317.8 518.6,306.1 523.4,270.3 544.0,278.1 558.6,258.2" fill="url(#dots2)"/>
<polygon points="691.0,280.7 696.3,282.0 696.9,286.5 688.5,287.5 681.7,299.2 685.2,309.0 666.0,317.2 661.2,315.8" fill="#deb9cc" fill-opacity=".8" stroke="#8a7a6a" stroke-opacity=".3" stroke-width=".7"/>
<polygon points="691.0,280.7 696.3,282.0 696.9,286.5 688.5,287.5 681.7,299.2 685.2,309.0 666.0,317.2 661.2,315.8" fill="url(#dots2)"/>
<polygon points="636.7,240.6 666.0,248.4 675.8,262.1 691.0,280.7 683.6,289.5 656.3,322.7 639.7,332.0 597.1,364.5 590.8,341.2 613.3,256.3 621.1,249.4" fill="#f4a274" fill-opacity=".8" stroke="#8a7a6a" stroke-opacity=".3" stroke-width=".7"/>
<polygon points="636.7,240.6 666.0,248.4 675.8,262.1 691.0,280.7 683.6,289.5 656.3,322.7 639.7,332.0 597.1,364.5 590.8,341.2 613.3,256.3 621.1,249.4" fill="url(#dots)"/>
<polygon points="683.4,468.8 704.8,468.8 723.2,480.1 722.6,510.1 714.0,504.0 692.5,537.1 674.2,525.4 675.7,507.0" fill="#c2c7e0" fill-opacity=".8" stroke="#8a7a6a" stroke-opacity=".3" stroke-width=".7"/>
<polygon points="683.4,468.8 704.8,468.8 723.2,480.1 722.6,510.1 714.0,504.0 692.5,537.1 674.2,525.4 675.7,507.0" fill="url(#dots2)"/>
<polygon points="593.9,504.9 608.3,519.3 626.7,527.9 663.4,537.1 668.0,543.8 607.4,560.7" fill="#deb9cc" fill-opacity=".8" stroke="#8a7a6a" stroke-opacity=".3" stroke-width=".7"/>
<polygon points="593.9,504.9 608.3,519.3 626.7,527.9 663.4,537.1 668.0,543.8 607.4,560.7" fill="url(#dots2)"/>
<polygon points="607.4,560.7 668.0,544.7 695.6,565.9 689.5,574.5 678.8,565.9 617.5,579.0" fill="#f4a274" fill-opacity=".8" stroke="#8a7a6a" stroke-opacity=".3" stroke-width=".7"/>
<polygon points="607.4,560.7 668.0,544.7 695.6,565.9 689.5,574.5 678.8,565.9 617.5,579.0" fill="url(#dots)"/>
<polygon points="468.4,429.1 474.9,436.0 518.3,488.6 486.8,483.4 463.0,483.8 466.2,458.8" fill="#c2c7e0" fill-opacity=".8" stroke="#8a7a6a" stroke-opacity=".3" stroke-width=".7"/>
<polygon points="468.4,429.1 474.9,436.0 518.3,488.6 486.8,483.4 463.0,483.8 466.2,458.8" fill="url(#dots2)"/>
<polygon points="463.0,483.8 486.8,483.4 518.3,488.6 471.6,516.4 454.3,504.4" fill="#a9d5be" fill-opacity=".8" stroke="#8a7a6a" stroke-opacity=".3" stroke-width=".7"/>
<polygon points="463.0,483.8 486.8,483.4 518.3,488.6 471.6,516.4 454.3,504.4" fill="url(#dots2)"/>
<polygon points="432.6,439.3 440.2,431.7 468.4,429.1 466.2,458.8 463.0,483.8 454.3,504.4 447.3,501.2 441.3,477.3 429.3,476.2" fill="#f4a274" fill-opacity=".8" stroke="#8a7a6a" stroke-opacity=".3" stroke-width=".7"/>
<polygon points="432.6,439.3 440.2,431.7 468.4,429.1 466.2,458.8 463.0,483.8 454.3,504.4 447.3,501.2 441.3,477.3 429.3,476.2" fill="url(#dots)"/>
<polygon points="341.4,559.5 422.7,557.3 441.8,557.8 484.6,666.0 409.7,674.8 409.7,651.1 402.6,639.7 362.7,621.2 328.5,614.1" fill="#f4a274" fill-opacity=".8" stroke="#8a7a6a" stroke-opacity=".3" stroke-width=".7"/>
<polygon points="341.4,559.5 422.7,557.3 441.8,557.8 484.6,666.0 409.7,674.8 409.7,651.1 402.6,639.7 362.7,621.2 328.5,614.1" fill="url(#dots)"/>
<polygon points="409.7,674.8 484.6,666.0 485.2,672.5 522.8,755.1 502.3,775.0 482.3,778.7 449.6,772.2 433.9,711.0 424.0,698.1 409.7,698.1" fill="#deb9cc" fill-opacity=".8" stroke="#8a7a6a" stroke-opacity=".3" stroke-width=".7"/>
<polygon points="409.7,674.8 484.6,666.0 485.2,672.5 522.8,755.1 502.3,775.0 482.3,778.7 449.6,772.2 433.9,711.0 424.0,698.1 409.7,698.1" fill="url(#dots2)"/>
<polygon points="535.0,648.3 558.7,635.5 566.4,659.7 538.7,668.2" fill="#da3036" fill-opacity=".8" stroke="#8a7a6a" stroke-opacity=".3" stroke-width=".7"/>
<polygon points="535.0,648.3 558.7,635.5 566.4,659.7 538.7,668.2" fill="url(#dots)"/>
<polygon points="538.7,668.2 566.4,659.7 572.1,691.0 546.4,735.2" fill="#c0cadd" fill-opacity=".8" stroke="#8a7a6a" stroke-opacity=".3" stroke-width=".7"/>
<polygon points="538.7,668.2 566.4,659.7 572.1,691.0 546.4,735.2" fill="url(#dots2)"/>
<polygon points="562.1,642.6 585.4,626.9 601.4,683.9 600.5,701.0 580.6,701.6 572.1,691.0 566.4,659.7" fill="#f4a274" fill-opacity=".8" stroke="#8a7a6a" stroke-opacity=".3" stroke-width=".7"/>
<polygon points="562.1,642.6 585.4,626.9 601.4,683.9 600.5,701.0 580.6,701.6 572.1,691.0 566.4,659.7" fill="url(#dots)"/>
<polygon points="1009.7,186.6 1041.0,199.5 1025.0,254.2 1003.6,248.8 977.5,348.8 963.7,382.5 936.7,384.1 959.1,354.9 972.9,305.9 1000.5,220.0" fill="#f4a274" fill-opacity=".8" stroke="#8a7a6a" stroke-opacity=".3" stroke-width=".7"/>
<polygon points="1009.7,186.6 1041.0,199.5 1025.0,254.2 1003.6,248.8 977.5,348.8 963.7,382.5 936.7,384.1 959.1,354.9 972.9,305.9 1000.5,220.0" fill="url(#dots)"/>
<polygon points="1002.0,46.0 1010.0,46.0 1000.5,81.4" fill="#deb9cc" fill-opacity=".8" stroke="#8a7a6a" stroke-opacity=".3" stroke-width=".7"/>
<polygon points="1002.0,46.0 1010.0,46.0 1000.5,81.4" fill="url(#dots2)"/>
<polygon points="989.9,46.1 1001.1,46.1 1000.1,52.3" fill="#c2c7e0" fill-opacity=".8" stroke="#8a7a6a" stroke-opacity=".3" stroke-width=".7"/>
<polygon points="989.9,46.1 1001.1,46.1 1000.1,52.3" fill="url(#dots2)"/>
<polygon points="876.0,-6.0 1004.0,-6.0 1001.1,46.1 989.9,46.1 935.0,20.0 880.0,8.0" fill="#c2c7e0" fill-opacity=".8" stroke="#8a7a6a" stroke-opacity=".3" stroke-width=".7"/>
<polygon points="876.0,-6.0 1004.0,-6.0 1001.1,46.1 989.9,46.1 935.0,20.0 880.0,8.0" fill="url(#dots2)"/>
<polygon points="1001.1,46.1 1010.3,46.1 1046.0,-6.0 1008.0,-6.0" fill="#deb9cc" fill-opacity=".8" stroke="#8a7a6a" stroke-opacity=".3" stroke-width=".7"/>
<polygon points="1001.1,46.1 1010.3,46.1 1046.0,-6.0 1008.0,-6.0" fill="url(#dots2)"/>
<polygon points="607.0,49.3 618.0,55.6 618.0,68.3 607.0,74.7 596.0,68.4 596.0,55.6" fill="#b6ffb3" stroke="#f68a3a" stroke-width="4" stroke-linejoin="miter"/>
<polygon points="811.2,66.4 822.2,72.8 822.2,85.4 811.2,91.8 800.2,85.5 800.2,72.8" fill="#f9aa7a" stroke="#f68a3a" stroke-width="4" stroke-linejoin="miter"/>
<polygon points="639.9,136.0 650.9,142.3 650.9,155.0 639.9,161.4 628.9,155.0 628.9,142.3" fill="#e57373" stroke="#f68a3a" stroke-width="4" stroke-linejoin="miter"/>
<polygon points="662.8,155.1 673.8,161.5 673.8,174.2 662.8,180.5 651.8,174.2 651.8,161.5" fill="#f9aa7a" stroke="#f68a3a" stroke-width="4" stroke-linejoin="miter"/>
<polygon points="778.0,129.2 789.0,135.6 789.0,148.2 778.0,154.6 767.0,148.2 767.0,135.6" fill="#b6ffb3" stroke="#f68a3a" stroke-width="4" stroke-linejoin="miter"/>
<polygon points="724.8,223.8 735.8,230.2 735.8,242.8 724.8,249.2 713.8,242.8 713.8,230.2" fill="#b6ffb3" stroke="#f68a3a" stroke-width="4" stroke-linejoin="miter"/>
<polygon points="724.8,214.4 735.8,220.8 735.8,233.4 724.8,239.8 713.8,233.4 713.8,220.8" fill="#f9aa7a" stroke="#f68a3a" stroke-width="4" stroke-linejoin="miter"/>
<polygon points="726.0,236.5 737.0,242.8 737.0,255.5 726.0,261.9 715.0,255.5 715.0,242.8" fill="#e57373" stroke="#f68a3a" stroke-width="4" stroke-linejoin="miter"/>
<polygon points="678.7,233.8 689.7,240.2 689.7,252.8 678.7,259.2 667.7,252.8 667.7,240.2" fill="#b6ffb3" stroke="#f68a3a" stroke-width="4" stroke-linejoin="miter"/>
<polygon points="799.7,269.0 810.7,275.3 810.7,288.1 799.7,294.4 788.7,288.1 788.7,275.3" fill="#b6ffb3" stroke="#f68a3a" stroke-width="4" stroke-linejoin="miter"/>
<polygon points="800.6,282.0 811.6,288.3 811.6,301.1 800.6,307.4 789.6,301.1 789.6,288.3" fill="#f9aa7a" stroke="#f68a3a" stroke-width="4" stroke-linejoin="miter"/>
<polygon points="779.1,301.1 790.1,307.4 790.1,320.2 779.1,326.5 768.1,320.2 768.1,307.4" fill="#ffffff" stroke="#f68a3a" stroke-width="4" stroke-linejoin="miter"/>
<polygon points="707.0,315.3 718.0,321.6 718.0,334.4 707.0,340.7 696.0,334.4 696.0,321.6" fill="#b6ffb3" stroke="#f68a3a" stroke-width="4" stroke-linejoin="miter"/>
<polygon points="417.0,320.3 428.0,326.6 428.0,339.4 417.0,345.7 406.0,339.4 406.0,326.6" fill="#b6ffb3" stroke="#f68a3a" stroke-width="4" stroke-linejoin="miter"/>
<polygon points="376.2,345.4 387.2,351.8 387.2,364.5 376.2,370.8 365.2,364.5 365.2,351.8" fill="#b6ffb3" stroke="#f68a3a" stroke-width="4" stroke-linejoin="miter"/>
<polygon points="476.0,362.3 487.0,368.6 487.0,381.4 476.0,387.7 465.0,381.4 465.0,368.6" fill="#b6ffb3" stroke="#f68a3a" stroke-width="4" stroke-linejoin="miter"/>
<polygon points="720.0,385.3 731.0,391.6 731.0,404.4 720.0,410.7 709.0,404.4 709.0,391.6" fill="#b6ffb3" stroke="#f68a3a" stroke-width="4" stroke-linejoin="miter"/>
<polygon points="847.9,391.6 858.9,397.9 858.9,410.7 847.9,417.0 836.9,410.7 836.9,397.9" fill="#b6ffb3" stroke="#f68a3a" stroke-width="4" stroke-linejoin="miter"/>
<polygon points="860.9,379.3 871.9,385.6 871.9,398.4 860.9,404.7 849.9,398.4 849.9,385.6" fill="#b6ffb3" stroke="#f68a3a" stroke-width="4" stroke-linejoin="miter"/>
<polygon points="853.8,384.5 864.8,390.8 864.8,403.6 853.8,409.9 842.8,403.6 842.8,390.8" fill="#b6ffb3" stroke="#f68a3a" stroke-width="4" stroke-linejoin="miter"/>
<polygon points="701.0,446.3 712.0,452.6 712.0,465.4 701.0,471.7 690.0,465.4 690.0,452.6" fill="#b6ffb3" stroke="#f68a3a" stroke-width="4" stroke-linejoin="miter"/>
<polygon points="749.0,471.3 760.0,477.6 760.0,490.4 749.0,496.7 738.0,490.4 738.0,477.6" fill="#b6ffb3" stroke="#f68a3a" stroke-width="4" stroke-linejoin="miter"/>
<polygon points="293.0,464.3 304.0,470.6 304.0,483.4 293.0,489.7 282.0,483.4 282.0,470.6" fill="#f9aa7a" stroke="#f68a3a" stroke-width="4" stroke-linejoin="miter"/>
<polygon points="232.0,498.3 243.0,504.6 243.0,517.4 232.0,523.7 221.0,517.4 221.0,504.6" fill="#b6ffb3" stroke="#f68a3a" stroke-width="4" stroke-linejoin="miter"/>
<polygon points="498.1,450.1 509.1,456.4 509.1,469.2 498.1,475.5 487.1,469.2 487.1,456.4" fill="#b6ffb3" stroke="#f68a3a" stroke-width="4" stroke-linejoin="miter"/>
<polygon points="472.7,460.9 483.7,467.2 483.7,480.0 472.7,486.3 461.7,480.0 461.7,467.2" fill="#b6ffb3" stroke="#f68a3a" stroke-width="4" stroke-linejoin="miter"/>
<polygon points="350.0,539.3 361.0,545.6 361.0,558.4 350.0,564.7 339.0,558.4 339.0,545.6" fill="#b6ffb3" stroke="#f68a3a" stroke-width="4" stroke-linejoin="miter"/>
<polygon points="435.8,536.3 446.8,542.6 446.8,555.4 435.8,561.7 424.8,555.4 424.8,542.6" fill="#f9aa7a" stroke="#f68a3a" stroke-width="4" stroke-linejoin="miter"/>
<polygon points="815.0,525.3 826.0,531.6 826.0,544.4 815.0,550.7 804.0,544.4 804.0,531.6" fill="#b6ffb3" stroke="#f68a3a" stroke-width="4" stroke-linejoin="miter"/>
<ellipse cx="450.8" cy="536.8" rx="10" ry="4.500" fill="#000" fill-opacity=".28" filter="url(#blur1)" transform="rotate(-38 450.8 536.8)"/>
<path d="M441.3 546.3Q435.1 536.7 430.5 526.1A12.250 12.250 0 1 1 452.1 526.1Q447.5 536.7 441.3 546.3z" fill="url(#pin)" stroke="#1f63a6" stroke-width=".8"/>
<circle cx="441.6" cy="520.1" r="4.300" fill="#fff"/>
<path d="M441.2 550.2l0 16.500 3.800-3.600 3.100 7.200 2.700-1.200-3.100-7 5.200-.3z" fill="#fff" stroke="#111" stroke-width="1.100" stroke-linejoin="round"/>
</svg>

<div id="topbar">
<svg id="logo" viewBox="0 0 30 30"><g fill="#5d9b34"><path d="M15 0l2.300 4.300h-4.600zM15 30l2.300-4.300h-4.600zM0 15l4.300-2.300v4.600zM30 15l-4.300-2.300v4.600z"/></g><path d="M19.900 6.200A10.100 10.100 0 0 0 6.200 19.900M10.100 23.800A10.100 10.100 0 0 0 23.800 10.100" fill="none" stroke="#8db02a" stroke-width="2.900"/><path d="M24.200 5.200L12.700 12.500l4.800 4.800z" fill="#ef7f1a"/><path d="M5.200 24.200L17.500 17.300l-4.800-4.800z" fill="#4f9a2e"/></svg>
<div id="title">QWC Demo</div>
<div id="search">
<svg class="mag" width="13.3" height="13.3" viewBox="0 0 15 15"><circle cx="6" cy="6" r="4.600" fill="none" stroke="#555" stroke-width="2"/><path d="M9.400 9.400L13.600 13.600" stroke="#555" stroke-width="2.400" stroke-linecap="round"/></svg>
<div class="ph">Search place or add map...</div>
<svg class="clr" width="10.5" height="10.5" viewBox="0 0 10 10"><path d="M1.200 1.200L8.800 8.800M8.800 1.200L1.200 8.800" stroke="#444" stroke-width="2.700"/></svg>
</div>
<svg class="tb" style="left:683px" viewBox="0 0 24 24"><path d="M0.900 13.700L8.800 5.100L13.700 11.300L21 5.800" fill="none" stroke="#555" stroke-width="1.700"/><path d="M6.3 16.600H22.6V24H6.3z" fill="#fff" stroke="#555" stroke-width="1.100"/><path d="M10.375 20V24M14.45 20V24M18.525000000000002 20V24" stroke="#555" stroke-width="1.100"/></svg><svg class="tb" style="left:722px" viewBox="0 0 24 24"><path d="M2.200 7.700L8 1.700H16.500L19.800 6.300L15.100 12.700L2.700 14.800z" fill="none" stroke="#555" stroke-width="1.700" stroke-linejoin="round"/><path d="M5.6 16.600H22.5V24H5.6z" fill="#fff" stroke="#555" stroke-width="1.100"/><path d="M9.825 20V24M14.049999999999999 20V24M18.275 20V24" stroke="#555" stroke-width="1.100"/></svg><svg class="tb" style="left:758.8px" viewBox="0 0 24 24"><path d="M6.300 1.300H17.700L19.200 8.600H4.800z" fill="#555"/><path d="M0.500 9H23.500V21.800H19.200V16H4.800V21.800H0.500z" fill="#555"/><path d="M6.300 18.200H17.700L19.300 23.600H4.700z" fill="#555"/></svg><svg class="tb" style="left:797px" viewBox="0 0 24 24"><path d="M1.900 7.700L7.200 1.700H17.200L20.500 6.700L12.900 13.100L2.900 14.800z" fill="none" stroke="#555" stroke-width="1.700" stroke-linejoin="round"/><circle cx="18.200" cy="18.800" r="4.800" fill="#555"/><path d="M17 17.700h1.800v3.300M16.600 21.300h3.600" stroke="#fff" stroke-width="1.300" fill="none"/><circle cx="18.100" cy="15.900" r="1" fill="#fff"/></svg><svg class="tb" style="left:835.7px" viewBox="0 0 24 24"><circle cx="12" cy="12.300" r="9.850" fill="none" stroke="#555" stroke-width="1.700"/><path d="M12 4.900V12.300H18" fill="none" stroke="#555" stroke-width="1.700"/></svg>
</div>

<div id="side">
<div class="hd"><div class="t">Map &amp; Tools</div><div class="mb"><i style="top:5.4px"></i><i style="top:10.3px"></i><i style="top:15.2px"></i></div><div class="tri"></div></div>
<div class="flt"><svg style="position:absolute;left:15px;top:6.300px" width="22.500" height="22.500" viewBox="0 0 23 23"><circle cx="9.500" cy="9.500" r="7.300" fill="none" stroke="#555" stroke-width="3"/><path d="M14.800 14.800L21 21" stroke="#555" stroke-width="3.300" stroke-linecap="round"/></svg><div class="in"><span>Filter menu...</span><svg style="position:absolute;right:4px;top:8px" width="12" height="8" viewBox="0 0 12 8"><path d="M0 4L3.500 0H12V8H3.500z" fill="#555"/><path d="M6 2.300L9.400 5.700M9.400 2.300L6 5.700" stroke="#fff" stroke-width="1.300"/></svg></div></div>
<div class="mi " style="top:81.80px;height:36.72px"><svg viewBox="0 0 24 24"><path d="M2.200 .6H17.900V14.100H2.200z" fill="#fff" fill-opacity=".7" stroke="#555" stroke-width="1"/><path d="M2.200 3.900H17.900" stroke="#555" stroke-width="1.100"/><path d="M7.100 7.800H22.800V21H7.100z" fill="#f2f2f2" stroke="#555" stroke-width="1"/><path d="M7.600 10.400H22.300" stroke="#b5b5b5" stroke-width="1.300"/></svg><span>Theme</span></div>
<div class="mi " style="top:118.52px;height:36.72px"><svg viewBox="0 0 24 24"><path d="M12.300 2.300L23 8.200L12.300 14L1.700 8.200z M1.700 11.300L12.300 17.100L23 11.300M1.700 14.400L12.300 20.200L23 14.400" fill="none" stroke="#555" stroke-width="1.050" stroke-linejoin="round"/></svg><span>Layers &amp; Legend</span></div>
<div class="mi " style="top:155.24px;height:36.72px"><svg viewBox="0 0 24 24"><path d="M11.300 7L5.800 4V18.500L11.300 21.800zM12.700 7L18.200 4V18.500L12.700 21.800z" fill="#555"/><path d="M4.400 5V19.300M3 6V19.800M19.600 5V19.300M21 6V19.800" stroke="#555" stroke-width=".7" stroke-opacity=".75"/></svg><span>Layer catalog</span></div>
<div class="mi " style="top:191.96px;height:36.72px"><svg viewBox="0 0 24 24"><path d="M20.500 3.500L4 12L20.500 20.500" fill="none" stroke="#555" stroke-width="2.100" stroke-linejoin="round"/><circle cx="20.500" cy="3.500" r="2.800" fill="#555"/><circle cx="3.800" cy="12" r="2.800" fill="#555"/><circle cx="20.500" cy="20.500" r="2.800" fill="#555"/></svg><span>Share Link</span></div>
<div class="mi " style="top:228.68px;height:36.72px"><svg viewBox="0 0 24 24"><path d="M5.500 2.500H18.500V21L12 16.300L5.500 21z" fill="#555"/><path d="M12 4.600l1.450 3.050 3.350.4-2.500 2.250.7 3.300L12 11.950 9 13.600l.7-3.300L7.200 8.050l3.350-.4z" fill="#f2f2f2"/></svg><span>Bookmarks</span></div>
<div class="mi act" style="top:266.30px;height:35.22px"><svg style="margin-top:-1px" viewBox="0 0 24 24"><path d="M2.400 12.200H22V20.100H2.400z" fill="#555"/><path d="M8.300 3.100H16.800V13.700H8.300z" fill="#fff" stroke="#555" stroke-width="1.300"/><path d="M2.400 8.050H22V9.600H2.400z" fill="#555"/></svg><span style="margin-top:-2.500px">Map Tools</span></div>
<div class="mi sub" style="top:301.52px;height:36.72px"><svg style="margin-top:-1px" viewBox="0 0 24 24"><circle cx="12" cy="12" r="9.600" fill="none" stroke="#fff" stroke-width="2"/><path d="M12 6V12.500H17.500" fill="none" stroke="#fff" stroke-width="2"/></svg><span style="margin-top:-1px">Time Manager</span></div>
<div class="mi sub" style="top:338.24px;height:36.72px"><svg style="margin-top:-1px" viewBox="0 0 24 24"><path d="M12 13.900L4.300 15.100L2.300 10.300L3.400 6.100L10.700 1.900L18.300 3.300L20.300 8.900L18.500 11.500" fill="none" stroke="#fff" stroke-width="1.900" stroke-linejoin="round"/><circle cx="17.500" cy="17.300" r="4.600" fill="#fff"/><path d="M16.300 16.300h1.700v3.200M16 19.800h3.400" stroke="#808080" stroke-width="1.300" fill="none"/><circle cx="17.400" cy="14.600" r=".95" fill="#808080"/></svg><span style="margin-top:-1px">Identify Region</span></div>
<div class="mi sub" style="top:374.96px;height:36.72px"><svg style="margin-top:-1px" viewBox="0 0 24 24"><path d="M1.700 6.900H22.800V15.400H1.700z" fill="none" stroke="#fff" stroke-width="2.300"/><path d="M7.100 6.900V12.200M12.200 6.900V12.200M17.400 6.900V12.200" stroke="#fff" stroke-width="2"/></svg><span style="margin-top:-1px">Measure</span></div>
<div class="mi sub" style="top:411.68px;height:36.72px"><svg style="margin-top:-1px" viewBox="0 0 24 24"><path d="M2.600 20.900L4 14.300L15.300 3.200L20.800 8.600L9.500 19.700z" fill="none" stroke="#fff" stroke-width="2.200" stroke-linejoin="round"/><path d="M4 14.300C6.500 14.300 9.500 17 9.500 19.700" fill="none" stroke="#fff" stroke-width="1.700"/></svg><span style="margin-top:-1px">Redlining</span></div>
<div class="mi sub" style="top:448.40px;height:36.72px"><svg style="margin-top:-1px" viewBox="0 0 24 24"><path fill-rule="evenodd" d="M1.300 1.800H23.800V21.900H1.300zM3.700 5H21.400V19.500H3.700z" fill="#fff"/><path d="M5.200 8.800H6.700M8 8.800H19.600M5.200 12.500H6.700M8 12.500H19.600M5.200 16.200H6.700M8 16.200H15" stroke="#fff" stroke-width="1.700"/><path d="M13 22.400L14 18.800L20.600 12.200L23.800 15.400L17.200 22z" fill="#808080" stroke="#808080" stroke-width="5" stroke-linejoin="round"/><path d="M13 22.400L14 18.800L20.600 12.200L23.800 15.400L17.200 22z" fill="#808080" stroke="#fff" stroke-width="1.300" stroke-linejoin="round"/><path d="M14.200 19L17 21.800" stroke="#fff" stroke-width="1"/></svg><span style="margin-top:-1px">Editing</span></div>
<div class="mi sub" style="top:485.12px;height:36.72px"><svg style="margin-top:-1px" viewBox="0 0 24 24"><path fill-rule="evenodd" d="M1.300 1.800H23.800V21.900H1.300zM3.700 5H21.400V19.500H3.700z" fill="#fff"/><path d="M5.200 8.800H6.700M8 8.800H19.600M5.200 12.500H6.700M8 12.500H19.600M5.200 16.200H6.700M8 16.200H15" stroke="#fff" stroke-width="1.700"/><path d="M15 12.200V22.600L17.600 20.200L19.400 24.200L21.300 23.300L19.500 19.500H23z" fill="#fff" stroke="#808080" stroke-width="3.600" paint-order="stroke" stroke-linejoin="round"/></svg><span style="margin-top:-1px">Feature Form</span></div>
<div class="mi sub" style="top:521.84px;height:36.72px"><svg style="margin-top:-1px" viewBox="0 0 24 24"><path fill-rule="evenodd" d="M1.300 1.800H23.800V21.900H1.300zM3.700 5H21.400V19.500H3.700z" fill="#fff"/><path d="M5.200 8.800H6.700M8 8.800H19.600M5.200 12.500H6.700M8 12.500H19.600M5.200 16.200H6.700M8 16.200H15" stroke="#fff" stroke-width="1.700"/><path d="M13 22.400L14 18.800L20.600 12.200L23.800 15.400L17.200 22z" fill="#808080" stroke="#808080" stroke-width="5" stroke-linejoin="round"/><path d="M13 22.400L14 18.800L20.600 12.200L23.800 15.400L17.200 22z" fill="#808080" stroke="#fff" stroke-width="1.300" stroke-linejoin="round"/><path d="M14.200 19L17 21.800" stroke="#fff" stroke-width="1"/></svg><span style="margin-top:-1px">Attribute Table</span></div>
<div class="mi sub" style="top:558.56px;height:36.72px"><svg style="margin-top:-1px" viewBox="0 0 24 24"><path d="M7 10.500V2.800H16L21.400 8V21.400H11.500" fill="none" stroke="#fff" stroke-width="2"/><text x="7.600" y="12.700" font-family="Liberation Sans,sans-serif" font-weight="bold" font-size="7.600" fill="#fff" stroke="#808080" stroke-width="1.600" paint-order="stroke" textLength="13" lengthAdjust="spacingAndGlyphs">DXF</text><path d="M7.200 13.500V18" stroke="#fff" stroke-width="2.800"/><path d="M2.600 17H11.800L7.200 22.400z" fill="#fff"/></svg><span style="margin-top:-1px">DXF Export</span></div>
<div class="mi sub" style="top:595.28px;height:36.72px"><svg style="margin-top:-1px" viewBox="0 0 24 24"><path d="M6.600 10V6.100H21.100V18.200H12.500" fill="none" stroke="#fff" stroke-width="2.300"/><path d="M7.200 11.500V17.500" stroke="#fff" stroke-width="2.800"/><path d="M2.600 16.600H11.800L7.200 22z" fill="#fff"/></svg><span style="margin-top:-1px">Raster Export</span></div>
<div class="mi " style="top:631.80px;height:37.00px"><svg viewBox="0 0 24 24"><g transform="translate(12 12) scale(.9) translate(-12 -12.500)"><path d="M6.300 1.300H17.700L19.200 8.600H4.800z" fill="#555"/><path d="M0.500 9H23.500V21.800H19.200V16H4.800V21.800H0.500z" fill="#555"/><path d="M6.300 18.200H17.700L19.300 23.600H4.700z" fill="#555"/></g></svg><span>Print</span></div>
<div class="mi " style="top:668.80px;height:37.00px"><svg viewBox="0 0 24 24"><circle cx="12.300" cy="12" r="9.200" fill="none" stroke="#555" stroke-width="1.600"/><path d="M10 10.200H13V16.800M9.400 16.900H15.800" fill="none" stroke="#555" stroke-width="1.900"/><circle cx="12.100" cy="6.800" r="1.400" fill="#555"/></svg><span>Help</span></div>
<div class="mi " style="top:705.40px;height:37.00px"><svg viewBox="0 0 24 24"><g fill="#555" transform="translate(12 12) scale(.92) translate(-12 -12)"><circle cx="12" cy="12" r="8"/><g id="t"><path d="M10 0.800H14V5H10zM10 19H14V23.200H10z"/></g><path d="M10 0.800H14V5H10zM10 19H14V23.200H10z" transform="rotate(45 12 12)"/><path d="M10 0.800H14V5H10zM10 19H14V23.200H10z" transform="rotate(90 12 12)"/><path d="M10 0.800H14V5H10zM10 19H14V23.200H10z" transform="rotate(135 12 12)"/></g><circle cx="12" cy="12" r="3.600" fill="#f2f2f2"/></svg><span>Settings</span></div>
<div class="mi " style="top:741.60px;height:37.00px"><svg viewBox="0 0 24 24"><circle cx="12.300" cy="8" r="6.100" fill="#555"/><path d="M1.500 22.600C1.800 16.600 5.500 12.300 12.300 12.300S22.800 16.600 23.100 22.600z" fill="#555"/></svg><span>Login</span></div>
</div>

<div id="fi">
<div class="tt"><span>Feature Info</span><svg style="position:absolute;left:2px;top:8px" width="19.500" height="19.500" viewBox="0 0 20 20"><circle cx="10" cy="10" r="9.800" fill="#fff"/><path d="M7.700 8.300H11.300V15M7.400 15H13.200" fill="none" stroke="#595959" stroke-width="2.200"/><circle cx="10" cy="5" r="1.500" fill="#595959"/></svg><svg style="position:absolute;left:297.500px;top:10px" width="19" height="16.400" viewBox="0 0 19 16.400"><path d="M1.400 1.300H8.100V15H1.400z" fill="none" stroke="#fff" stroke-width="1.800"/><path d="M18.200 8H10.500M13.700 4.500L10.200 8L13.700 11.500" fill="none" stroke="#fff" stroke-width="1.900"/></svg><svg style="position:absolute;left:320px;top:9.500px" width="18" height="16.400" viewBox="0 0 18 16.400"><path d="M1.300 1H16.500V15.400H1.300z" fill="none" stroke="#fff" stroke-width="2"/><path d="M8.600 9L16 1.600" fill="none" stroke="#fff" stroke-width="2"/></svg><svg style="position:absolute;left:343.500px;top:10px" width="16" height="16" viewBox="0 0 16 16"><path d="M2 2L14 14M14 2L2 14" stroke="#fff" stroke-width="3.900"/></svg></div>
<div class="box">
<div class="rh"><i style="position:absolute;left:3.7px;top:8.4px;width:10.8px;height:3.3px;background:#555"></i><span>Apiary: 57</span><svg style="position:absolute;left:341px;top:4.600px" width="11.800" height="11.800" viewBox="0 0 11 11"><circle cx="5.500" cy="5.500" r="5.500" fill="#555"/><path d="M4.300 4.600H6.100V8.300M4 8.400H7.500" fill="none" stroke="#c8c8c8" stroke-width="1.200"/><circle cx="5.400" cy="2.600" r=".85" fill="#c8c8c8"/></svg></div>
<table>
<tr><td>fid</td><td>57</td></tr>
<tr><td>Number of Boxes</td><td>3</td></tr>
<tr><td>Species of Bees</td><td>Buckfast bee</td></tr>
<tr><td>Amount of Bees</td><td>&lt; 1000</td></tr>
<tr><td>Beekeeper</td><td>Al Idrisi</td></tr>
<tr><td>Photo</td><td>DCIM/3.jpg</td></tr>
<tr><td>Infected</td><td>true</td></tr>
<tr><td>Kind of Disease</td><td>European Foulbreed</td></tr>
<tr><td>Yearly Harvest (kg)</td><td>6</td></tr>
<tr><td>Area mostly used</td><td>34</td></tr>
<tr><td>Id</td><td>{0235be9c-2026-42ac-a99c-<br>f9e8183fc602}</td></tr>
<tr><td>field_uuid</td><td>{0235be9c-2026-42ac-a99c-<br>f9e8183fc602}</td></tr>
</table>
</div>
<div class="ex"><div class="l">Export format:</div><div class="sel"><span>geojson</span><svg style="position:absolute;right:3px;top:10.800px" width="10.500" height="8" viewBox="0 0 11 8"><path d="M1.200 1.500L5.500 6L9.800 1.500" fill="none" stroke="#333" stroke-width="1.900"/></svg></div><div class="b1"><svg style="position:absolute;left:7.400px;top:7.600px" width="13" height="13.500" viewBox="0 0 13 13.500"><path d="M0.300 9.800H12.700V13H0.300z" fill="#555"/><path d="M2.800 8.300L8.500 2.600" stroke="#555" stroke-width="2.400"/><path d="M4.600 0.600H10.700V6.700z" fill="#555"/></svg><span>Export</span></div><div class="b2"><svg style="position:absolute;left:8.600px;top:8.300px" width="13" height="13" viewBox="0 0 13 13"><path d="M4.400 1.900H12.400V12.300H4.400z" fill="#555"/><path d="M6.300 0.900Q6.300 0 8.400 0T10.500 0.900V2.800H6.300z" fill="#555" stroke="#e9e9e9" stroke-width=".5"/><path d="M0.300 9H4M2.600 7L4.800 9L2.600 11" fill="none" stroke="#e9e9e9" stroke-width="2.600"/><path d="M0.300 9H4M2.600 7.200L4.600 9L2.600 10.800" fill="none" stroke="#555" stroke-width="1.200"/></svg></div></div>
</div>
</body>
</html>
